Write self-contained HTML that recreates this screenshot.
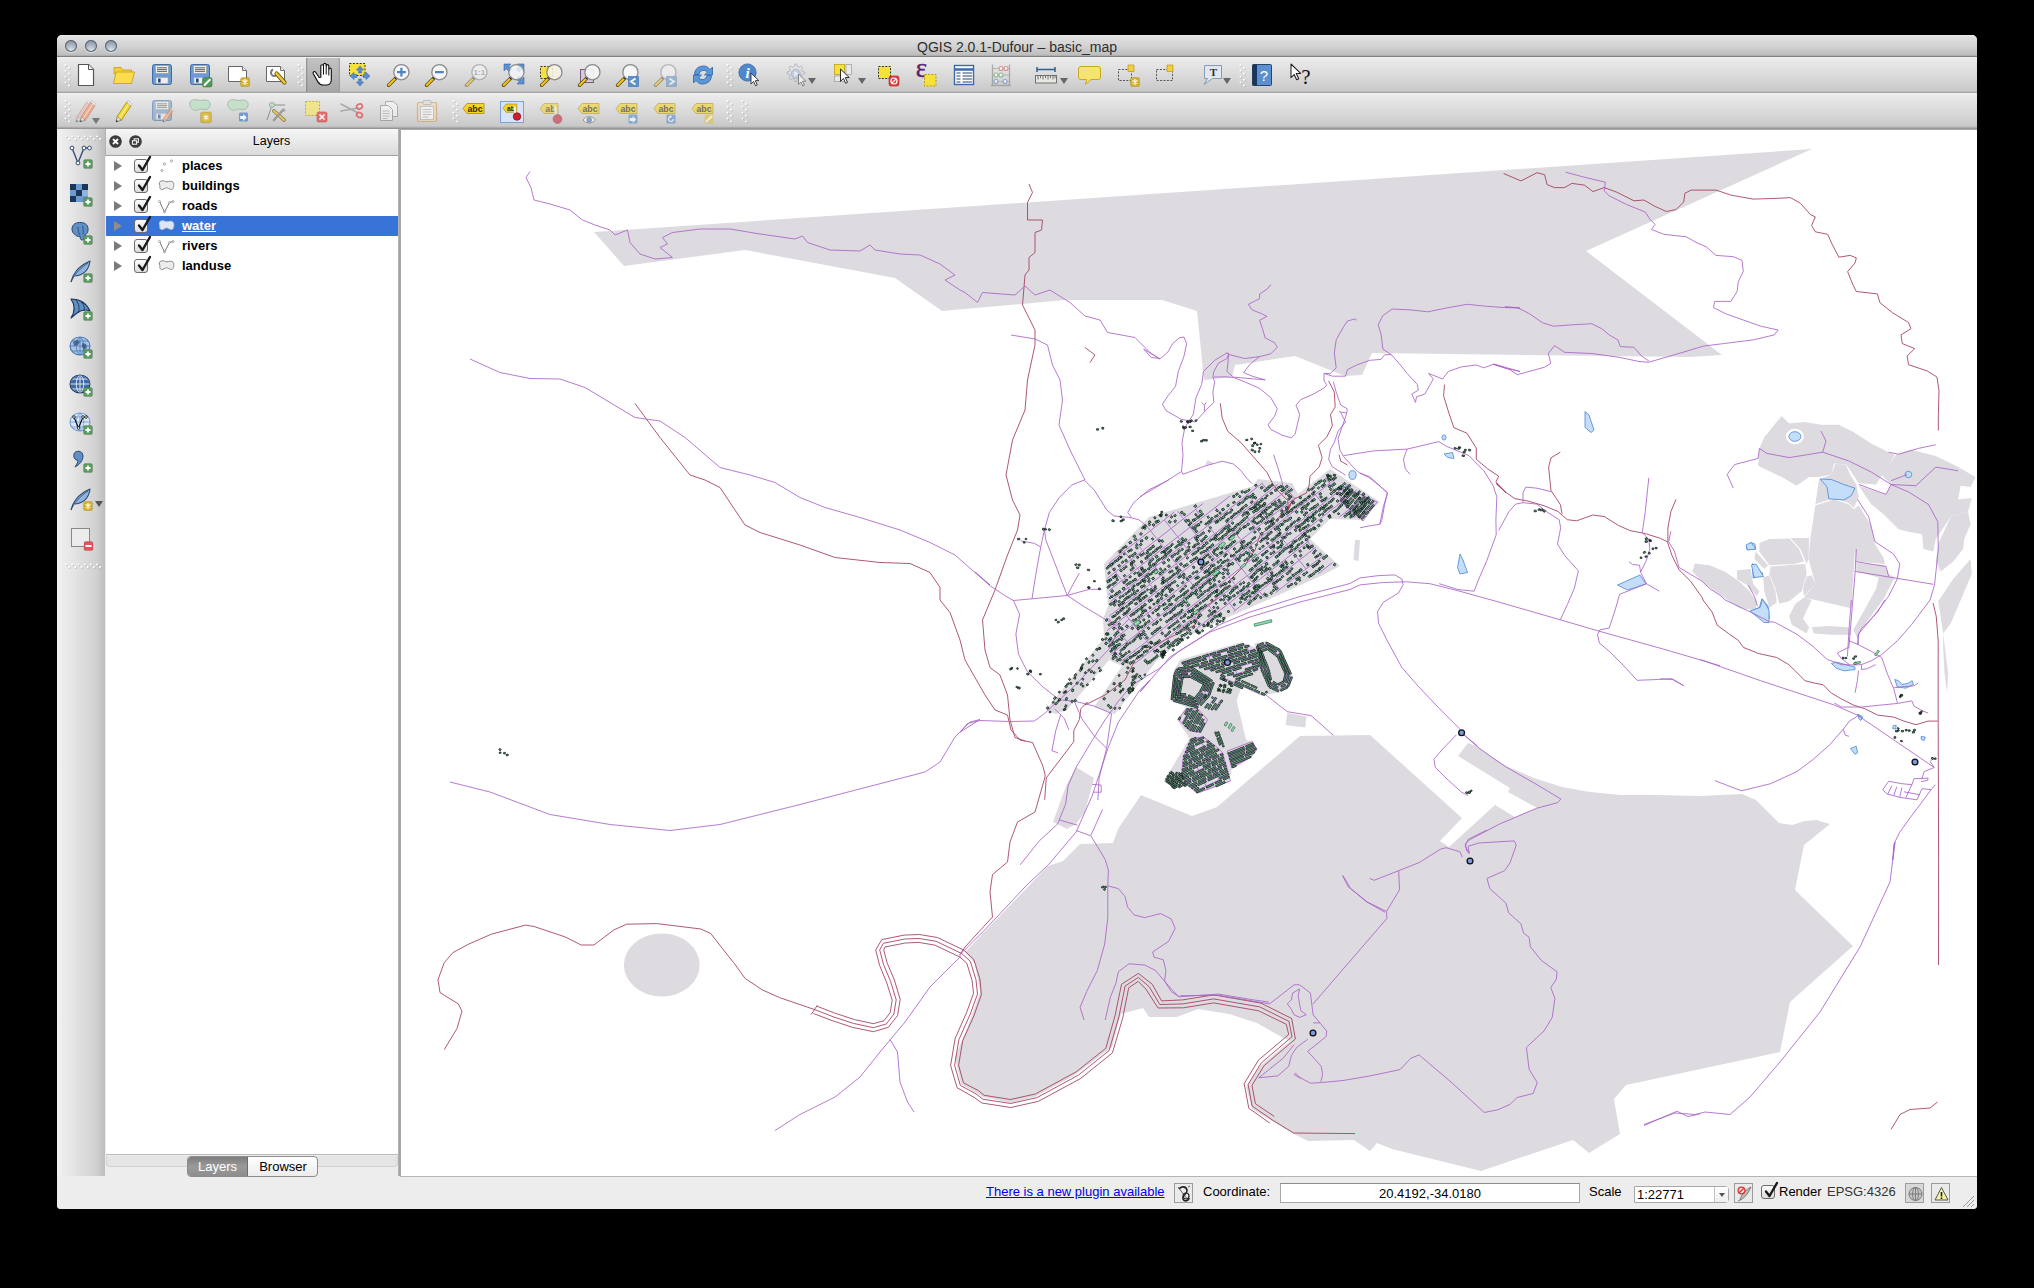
<!DOCTYPE html>
<html>
<head>
<meta charset="utf-8">
<title>QGIS 2.0.1-Dufour - basic_map</title>
<style>
*{box-sizing:border-box;margin:0;padding:0}
html,body{width:2034px;height:1288px;background:#000;overflow:hidden}
body{font-family:"Liberation Sans",sans-serif;position:relative;color:#000}
#win{position:absolute;left:57px;top:35px;width:1920px;height:1174px;background:#ededed;border-radius:5px 5px 4px 4px;overflow:hidden}
#title{position:absolute;left:0;top:0;width:1920px;height:22px;background:linear-gradient(#ebebeb 0,#e0e0e0 8%,#d2d2d2 50%,#bdbdbd 92%,#8f8f8f 96%,#6e6e6e 100%);text-align:center;font-size:14px;line-height:22px;color:#2e2e2e}
#title span{position:absolute;left:0;width:1920px;top:.5px}
.tl{position:absolute;top:5px;width:12px;height:12px;border-radius:50%;background:radial-gradient(circle at 50% 85%,#dfe6ec 0,#b4c0cb 35%,#8f9ba8 70%,#76828e 100%);box-shadow:inset 0 0 0 1px #5d6671,0 1px 0 rgba(255,255,255,.55)}
.tb{position:absolute;left:0;width:1920px;height:36px;background:linear-gradient(#f0f0f0 0,#e9e9e9 10%,#d9d9d9 55%,#c9c9c9 94%,#9a9a9a 100%)}
#tb1{top:22px}
#tb2{top:58px;height:36px;background:linear-gradient(#f0f0f0 0,#e9e9e9 10%,#d9d9d9 55%,#c9c9c9 92%,#8c8c8c 100%)}
.ic{position:absolute;width:24px;height:24px;overflow:visible}
.grip{position:absolute;width:7px;height:24px}
#side{position:absolute;left:0;top:94px;width:48px;height:1047px;background:linear-gradient(90deg,#f1f1f1 0,#e4e4e4 35%,#d2d2d2 80%,#bdbdbd 100%)}
#lhead{position:absolute;left:48px;top:94px;width:294px;height:27px;background:linear-gradient(#f6f6f6,#e6e6e6 60%,#dadada);border-bottom:1px solid #a3a3a3;border-left:1px solid #b5b5b5;font-size:12.5px;text-align:center;line-height:25px;padding-left:38px}
#lbody{position:absolute;left:49px;top:121px;width:293px;height:999px;background:#fff;border-bottom:1px solid #b9b9b9}
#lsplit{position:absolute;left:341px;top:94px;width:2px;height:1047px;background:linear-gradient(90deg,#bdbdbd,#9a9a9a)}
.row{position:absolute;left:0;width:292px;height:20px;font-size:13px;font-weight:bold;line-height:20px}
.row .nm{position:absolute;left:76px;top:0}
.row.sel{background:#3874d7;color:#fff}
.row.sel .nm{text-decoration:underline}
.tri{position:absolute;left:8px;top:5px;width:0;height:0;border-left:8px solid #7a7a7a;border-top:5px solid transparent;border-bottom:5px solid transparent}
.cb{position:absolute;left:28px;top:3px;width:14px;height:14px;border:1px solid #6d6d6d;border-radius:3px;background:linear-gradient(#fdfdfd,#dcdcdc)}
.cb svg{position:absolute;left:-1px;top:-6px;width:20px;height:20px}
#ltabline{position:absolute;left:49px;top:1121px;width:292px;height:11px;background:#e5e5e5;border:1px solid #d2d2d2;border-top:none;border-radius:0 0 4px 4px}
#tabs{position:absolute;left:130px;top:1121px;height:21px;width:131px;border:1px solid #8e8e8e;border-radius:4px;background:linear-gradient(#fff,#ececec);font-size:13px;line-height:19px;overflow:hidden}
#tabs .a{position:absolute;left:0;top:0;width:60px;height:19px;background:linear-gradient(#7d7d7d,#9a9a9a 50%,#8d8d8d);color:#fff;text-align:center;border-right:1px solid #6f6f6f}
#tabs .b{position:absolute;left:60px;top:0;width:70px;height:19px;text-align:center}
#map{position:absolute;left:343px;top:94px;width:1577px;height:1048px;background:#fff;border-top:1px solid #a8a8a8;border-left:1px solid #a8a8a8;border-bottom:1px solid #b4b4b4;overflow:hidden}
#status{position:absolute;left:0;top:1142px;width:1920px;height:32px;background:#ededed;font-size:13px}
#status .t{position:absolute;top:7px;line-height:16px;white-space:nowrap}
.sbtn{position:absolute;top:9px;width:19px;height:19px;border:1px solid #9c9c9c;background:#eaeaea}
</style>
</head>
<body>
<div id="win">
<div id="title"><span>QGIS 2.0.1-Dufour – basic_map</span>
<div class="tl" style="left:8px"></div><div class="tl" style="left:28px"></div><div class="tl" style="left:48px"></div>
</div>
<div class="tb" id="tb1"><div style="position:absolute;left:249px;top:1px;width:34px;height:34px;background:linear-gradient(90deg,#8c8c8c 0,#a8a8a8 6%,#b4b4b4 50%,#a9a9a9 94%,#8f8f8f 100%),linear-gradient(#b9b9b9,#9b9b9b);background-blend-mode:multiply;opacity:.95"></div><div style="position:absolute;left:249px;top:1px;width:34px;height:34px;background:linear-gradient(#c2c2c2,#a6a6a6)"></div><div style="position:absolute;left:249px;top:1px;width:2px;height:34px;background:linear-gradient(90deg,#888,#aaa0)"></div><div style="position:absolute;left:281px;top:1px;width:2px;height:34px;background:linear-gradient(270deg,#999,#aaa0)"></div><svg class="ic" style="left:17px;top:6px" viewBox="0 0 24 24"><path d="M4.5,1.5h10l5,5v16h-15z" fill="#fff" stroke="#555" stroke-width="1.2" stroke-linejoin="round"/><path d="M14.5,1.5v5h5" fill="#eee" stroke="#555" stroke-width="1"/></svg><svg class="ic" style="left:55px;top:6px" viewBox="0 0 24 24"><path d="M2,4.5h7l1.5,2.5h9v4h-17.5z" fill="#f4cf3a" stroke="#c9a21e" stroke-width=".9"/><path d="M1.5,20.5l2.6,-11.5h18.4l-3,11.5z" fill="#fbdc4e" stroke="#c9a21e" stroke-width=".9" stroke-linejoin="round"/></svg><svg class="ic" style="left:93px;top:6px" viewBox="0 0 24 24"><rect x="2.5" y="1.5" width="19" height="20" rx="2" fill="#6c9bd2" stroke="#3f6aa6"/><rect x="5.5" y="2.5" width="13" height="8" fill="#eee" stroke="#9aa"/><path d="M7,4.8h10M7,6.6h10M7,8.4h10" stroke="#555" stroke-width=".9"/><rect x="6" y="14.5" width="12" height="6" fill="#eee" stroke="#9aa" stroke-width=".6"/><rect x="8" y="15.5" width="2.6" height="4" fill="#2a4a7a"/></svg><svg class="ic" style="left:131px;top:6px" viewBox="0 0 24 24"><rect x="2.5" y="1.5" width="19" height="20" rx="2" fill="#6c9bd2" stroke="#3f6aa6"/><rect x="5.5" y="2.5" width="13" height="8" fill="#eee" stroke="#9aa"/><path d="M7,4.8h10M7,6.6h10M7,8.4h10" stroke="#555" stroke-width=".9"/><rect x="6" y="14.5" width="12" height="6" fill="#eee" stroke="#9aa" stroke-width=".6"/><rect x="8" y="15.5" width="2.6" height="4" fill="#2a4a7a"/><rect x="14.5" y="14.5" width="9.5" height="9.5" rx="1.8" fill="#4e9a52" stroke="#3c7a40" stroke-width=".6"/><path d="M16.6,22l5.2,-5.2" stroke="#fff" stroke-width="2" stroke-linecap="round"/></svg><svg class="ic" style="left:169px;top:6px" viewBox="0 0 24 24"><path d="M2.5,3.5h14l4,4v11h-18z" fill="#fff" stroke="#666" stroke-width="1" stroke-linejoin="round"/><path d="M16.5,3.5v4h4" fill="#eee" stroke="#666" stroke-width=".9"/><rect x="14.5" y="14.5" width="9" height="9" rx="1.6" fill="#d8b226" stroke="#00000033" stroke-width=".6"/><path d="M19.0,16.0v6M16.5,17.5l5,3M16.5,20.5l5,-3" stroke="#fff" stroke-width="1.1"/></svg><svg class="ic" style="left:207px;top:6px" viewBox="0 0 24 24"><path d="M2.5,3.5h14l4,4v11h-18z" fill="#fff" stroke="#666" stroke-width="1" stroke-linejoin="round"/><path d="M16.5,3.5v4h4" fill="#eee" stroke="#666" stroke-width=".9"/><path d="M9,6.5a3.4,3.4 0 1 0 4.6,4.2" fill="none" stroke="#777" stroke-width="2"/><path d="M12.5,10.5l8,9" stroke="#6b5a1a" stroke-width="4.2" stroke-linecap="round"/><path d="M12.5,10.5l8,9" stroke="#f0c832" stroke-width="2.6" stroke-linecap="round"/></svg><svg class="ic" style="left:253px;top:6px" viewBox="0 0 24 24"><path d="M9.2,14.5L5.6,9.2c-1.1,-1.5 -3.2,-0.2 -2.3,1.5l4.6,8.2c1.2,2 2.8,3.1 5.2,3.1h3.2c3,0 5,-2.2 5,-5v-10.5c0,-1.8 -2.5,-1.8 -2.5,0v-3.6c0,-1.8 -2.6,-1.8 -2.6,0v-1.2c0,-1.8 -2.7,-1.8 -2.7,0v1.4c0,-1.8 -2.7,-1.8 -2.7,0v11.1z" fill="#fff" stroke="#111" stroke-width="1.15" stroke-linejoin="round"/><path d="M13.5,3.1v8.5M16.2,2.9v8.5M18.8,6.5v6" stroke="#111" stroke-width="1" fill="none"/></svg><svg class="ic" style="left:291px;top:6px" viewBox="0 0 24 24"><rect x="1.5" y="0.5" width="15.5" height="12" fill="#f6e13c" stroke="#333" stroke-width="1" stroke-dasharray="2 1.4"/><path d="M12,3l3.6,4h-2.2v3h-2.8v-3h-2.200000000000001z" fill="#5b8fcf" stroke="#3a6aa8" stroke-width=".6"/><path d="M12,23l3.6,-4h-2.2v-3h-2.8v3h-2.200000000000001z" fill="#5b8fcf" stroke="#3a6aa8" stroke-width=".6"/><path d="M2,13l4,-3.6v2.2h3v2.8h-3v2.2z" fill="#5b8fcf" stroke="#3a6aa8" stroke-width=".6"/><path d="M22,13l-4,-3.6v2.2h-3v2.8h3v2.2z" fill="#5b8fcf" stroke="#3a6aa8" stroke-width=".6"/></svg><svg class="ic" style="left:329px;top:6px" viewBox="0 0 24 24"><g opacity="1"><line x1="9.4" y1="15.4" x2="2.6" y2="22.2" stroke="#5a4a12" stroke-width="3.6" stroke-linecap="round"/><line x1="8.8" y1="16" x2="2.8" y2="22" stroke="#f2c21c" stroke-width="2.2" stroke-linecap="round"/><circle cx="10" cy="14.8" r="1.5" fill="#222"/><circle cx="15.4" cy="9.2" r="7.6" fill="#f4f6f8" stroke="#8a8a8a" stroke-width="1.3"/><path d="M11,9.2h8.8M15.4,4.8v8.8" stroke="#4f84c4" stroke-width="2.2"/></g></svg><svg class="ic" style="left:367px;top:6px" viewBox="0 0 24 24"><g opacity="1"><line x1="9.4" y1="15.4" x2="2.6" y2="22.2" stroke="#5a4a12" stroke-width="3.6" stroke-linecap="round"/><line x1="8.8" y1="16" x2="2.8" y2="22" stroke="#f2c21c" stroke-width="2.2" stroke-linecap="round"/><circle cx="10" cy="14.8" r="1.5" fill="#222"/><circle cx="15.4" cy="9.2" r="7.6" fill="#f4f6f8" stroke="#8a8a8a" stroke-width="1.3"/><path d="M11,9.2h8.8" stroke="#4f84c4" stroke-width="2.2"/></g></svg><svg class="ic" style="left:407px;top:6px" viewBox="0 0 24 24"><g opacity="0.55"><line x1="9.4" y1="15.4" x2="2.6" y2="22.2" stroke="#5a4a12" stroke-width="3.6" stroke-linecap="round"/><line x1="8.8" y1="16" x2="2.8" y2="22" stroke="#f2c21c" stroke-width="2.2" stroke-linecap="round"/><circle cx="10" cy="14.8" r="1.5" fill="#222"/><circle cx="15.4" cy="9.2" r="7.6" fill="#f4f6f8" stroke="#8a8a8a" stroke-width="1.3"/><text x="15.4" y="12.2" font-family="Liberation Sans,sans-serif" font-weight="bold" font-size="8" text-anchor="middle" fill="#888">1:1</text></g></svg><svg class="ic" style="left:444px;top:6px" viewBox="0 0 24 24"><path d="M3,1h7l-2.2,2.2l3,3l-2.6,2.6l-3,-3l-2.2,2.2z" fill="#5b8fcf" stroke="#3a6aa8" stroke-width=".6"/><path d="M23,1h-7l2.2,2.2l-3,3l2.6,2.6l3,-3l2.2,2.2z" fill="#5b8fcf" stroke="#3a6aa8" stroke-width=".6"/><path d="M23,21h-7l2.2,-2.2l-3,-3l2.6,-2.6l3,3l2.2,-2.2z" fill="#5b8fcf" stroke="#3a6aa8" stroke-width=".6"/><g opacity="1"><line x1="9.4" y1="15.4" x2="2.6" y2="22.2" stroke="#5a4a12" stroke-width="3.6" stroke-linecap="round"/><line x1="8.8" y1="16" x2="2.8" y2="22" stroke="#f2c21c" stroke-width="2.2" stroke-linecap="round"/><circle cx="10" cy="14.8" r="1.5" fill="#222"/><circle cx="15.4" cy="9.2" r="7.6" fill="#f4f6f8cc" stroke="#8a8a8a" stroke-width="1.3"/></g></svg><svg class="ic" style="left:482px;top:6px" viewBox="0 0 24 24"><rect x="1.5" y="3.5" width="12" height="12" fill="#f6e13c" stroke="#333" stroke-width="1" stroke-dasharray="2 1.4"/><g opacity="1"><line x1="9.4" y1="15.4" x2="2.6" y2="22.2" stroke="#5a4a12" stroke-width="3.6" stroke-linecap="round"/><line x1="8.8" y1="16" x2="2.8" y2="22" stroke="#f2c21c" stroke-width="2.2" stroke-linecap="round"/><circle cx="10" cy="14.8" r="1.5" fill="#222"/><circle cx="15.4" cy="9.2" r="7.6" fill="#f6f3e2e0" stroke="#8a8a8a" stroke-width="1.3"/></g></svg><svg class="ic" style="left:520px;top:6px" viewBox="0 0 24 24"><rect x="3.5" y="6.5" width="13" height="13" fill="#d9c9dc" stroke="#7a5a80" stroke-width="1"/><g opacity="1"><line x1="9.4" y1="15.4" x2="2.6" y2="22.2" stroke="#5a4a12" stroke-width="3.6" stroke-linecap="round"/><line x1="8.8" y1="16" x2="2.8" y2="22" stroke="#f2c21c" stroke-width="2.2" stroke-linecap="round"/><circle cx="10" cy="14.8" r="1.5" fill="#222"/><circle cx="15.4" cy="9.2" r="7.6" fill="#f4f6f8e6" stroke="#8a8a8a" stroke-width="1.3"/></g></svg><svg class="ic" style="left:558px;top:6px" viewBox="0 0 24 24"><g opacity="1"><line x1="9.4" y1="15.4" x2="2.6" y2="22.2" stroke="#5a4a12" stroke-width="3.6" stroke-linecap="round"/><line x1="8.8" y1="16" x2="2.8" y2="22" stroke="#f2c21c" stroke-width="2.2" stroke-linecap="round"/><circle cx="10" cy="14.8" r="1.5" fill="#222"/><circle cx="15.4" cy="9.2" r="7.6" fill="#f4f6f8" stroke="#8a8a8a" stroke-width="1.3"/></g><rect x="13.5" y="13.5" width="10" height="10" fill="#5b8fcf" stroke="#3a6aa8" stroke-width=".6"/><path d="M20.5,15.5l-4.5,3l4.5,3" fill="none" stroke="#fff" stroke-width="1.8"/></svg><svg class="ic" style="left:596px;top:6px" viewBox="0 0 24 24"><g opacity=".5"><g opacity="1"><line x1="9.4" y1="15.4" x2="2.6" y2="22.2" stroke="#5a4a12" stroke-width="3.6" stroke-linecap="round"/><line x1="8.8" y1="16" x2="2.8" y2="22" stroke="#f2c21c" stroke-width="2.2" stroke-linecap="round"/><circle cx="10" cy="14.8" r="1.5" fill="#222"/><circle cx="15.4" cy="9.2" r="7.6" fill="#f4f6f8" stroke="#8a8a8a" stroke-width="1.3"/></g><rect x="13.5" y="13.5" width="10" height="10" fill="#5b8fcf" stroke="#3a6aa8" stroke-width=".6"/><path d="M16.5,15.5l4.5,3l-4.5,3" fill="none" stroke="#fff" stroke-width="1.8"/></g></svg><svg class="ic" style="left:634px;top:6px" viewBox="0 0 24 24"><path d="M3.5,11.5a8.6,8.6 0 0 1 15.5,-5l2.5,-2.5v8h-8l2.8,-2.8a4.6,4.6 0 0 0 -8.3,2.3z" fill="#5b96d8" stroke="#2f64a8" stroke-width=".8" stroke-linejoin="round"/><path d="M20.5,12.5a8.6,8.6 0 0 1 -15.5,5l-2.5,2.5v-8h8l-2.8,2.800000000000001a4.6,4.6 0 0 0 8.3,-2.3z" fill="#5b96d8" stroke="#2f64a8" stroke-width=".8" stroke-linejoin="round"/></svg><svg class="ic" style="left:681px;top:6px" viewBox="0 0 24 24"><circle cx="9.5" cy="9.5" r="8.6" fill="#4f87cc" stroke="#2f64a8" stroke-width=".8"/><text x="9.5" y="14.5" font-family="Liberation Serif,serif" font-style="italic" font-weight="bold" font-size="15" text-anchor="middle" fill="#fff">i</text><path transform="translate(13,10) scale(0.85)" d="M0,0v13l3,-3l2.4,5l2,-1l-2.4,-5h4.2z" fill="#fff" stroke="#222" stroke-width="1" stroke-linejoin="round"/></svg><svg class="ic" style="left:728px;top:6px" viewBox="0 0 24 24"><g opacity=".55"><path d="M10,1l1.6,0l.7,2.4l1.9,.8l2.2,-1.2l1.2,1.2l-1.2,2.2l.8,1.9l2.400000000000001,.7v1.6l-2.400000000000001,.7l-.8,1.9l1.2,2.2l-1.2,1.2l-2.2,-1.2l-1.9,.8l-.7,2.400000000000001h-1.6l-.7,-2.400000000000001l-1.9,-.8l-2.2,1.2l-1.2,-1.2l1.2,-2.2l-.8,-1.9l-2.4,-.7v-1.6l2.4,-.7l.8,-1.9l-1.2,-2.2l1.2,-1.2l2.2,1.2l1.9,-.8z" fill="#e4e4e4" stroke="#888" stroke-width=".8"/><circle cx="10.8" cy="10.8" r="4.6" fill="#a9c3e6" stroke="#6a8cbc" stroke-width=".8"/><path d="M9.3,8.2l4.2,2.6l-4.2,2.6z" fill="#fff"/><path transform="translate(13.5,11) scale(0.8)" d="M0,0v13l3,-3l2.4,5l2,-1l-2.4,-5h4.2z" fill="#fff" stroke="#222" stroke-width="1" stroke-linejoin="round"/></g></svg><svg class="ic" style="left:776px;top:6px" viewBox="0 0 24 24"><rect x="1.5" y="1.5" width="10" height="10" fill="#f6e13c" stroke="#b9a21a" stroke-width=".8"/><rect x="13" y="1.5" width="5.5" height="10" fill="#e9e9e9" stroke="#999" stroke-width=".7"/><rect x="1.5" y="13" width="10" height="5.5" fill="#e9e9e9" stroke="#999" stroke-width=".7"/><path transform="translate(7.5,6) scale(0.95)" d="M0,0v13l3,-3l2.4,5l2,-1l-2.4,-5h4.2z" fill="#fff" stroke="#222" stroke-width="1" stroke-linejoin="round"/></svg><svg class="ic" style="left:819px;top:6px" viewBox="0 0 24 24"><rect x="2.5" y="3.5" width="12" height="12" fill="#f6e13c" stroke="#333" stroke-width="1" stroke-dasharray="2 1.4"/><rect x="13" y="13" width="10" height="10" rx="2" fill="#e23c3c" stroke="#a82222" stroke-width=".6"/><circle cx="18" cy="18" r="3" fill="none" stroke="#fff" stroke-width="1.2"/><path d="M15.9,20.1l4.2,-4.2" stroke="#fff" stroke-width="1.2"/></svg><svg class="ic" style="left:857px;top:6px" viewBox="0 0 24 24"><text x="7.5" y="13.5" font-family="Liberation Serif,serif" font-size="27" text-anchor="middle" fill="#5e2572" stroke="#5e2572" stroke-width=".4">ε</text><rect x="10.5" y="11.5" width="11.5" height="11.5" fill="#f6e13c" stroke="#b99a10" stroke-width="1" stroke-dasharray="2 1.4"/></svg><svg class="ic" style="left:895px;top:6px" viewBox="0 0 24 24"><rect x="2.5" y="2.5" width="19" height="19" fill="#fff" stroke="#3a6aa8" stroke-width="1.4"/><path d="M3,6.5h18" stroke="#3a6aa8" stroke-width="2.4"/><path d="M4.5,10h4M10.5,10h9.5M4.5,13h4M10.5,13h9.5M4.5,16h4M10.5,16h9.5M4.5,19h4M10.5,19h9.5" stroke="#27466e" stroke-width="1"/></svg><svg class="ic" style="left:932px;top:6px" viewBox="0 0 24 24"><g opacity=".6"><path d="M3.5,1.5v21M20.5,1.5v21M2,22.5h20" stroke="#888" stroke-width="1.3" fill="none"/><path d="M3.5,5.5h17M3.5,12h17M3.5,18.5h17" stroke="#888" stroke-width=".8"/><circle cx="12" cy="5.5" r="2" fill="#fff" stroke="#d45a5a" stroke-width="1.1"/><circle cx="17" cy="5.5" r="2" fill="#fff" stroke="#d45a5a" stroke-width="1.1"/><circle cx="7" cy="12" r="2" fill="#fff" stroke="#5aa66a" stroke-width="1.1"/><circle cx="12" cy="12" r="2" fill="#fff" stroke="#5aa66a" stroke-width="1.1"/><circle cx="7" cy="18.5" r="2" fill="#fff" stroke="#5a8ac4" stroke-width="1.1"/><circle cx="16" cy="18.5" r="2" fill="#fff" stroke="#5a8ac4" stroke-width="1.1"/></g></svg><svg class="ic" style="left:977px;top:6px" viewBox="0 0 24 24"><path d="M3,6.5h18M3,4v5M21,4v5" stroke="#2f5f8f" stroke-width="1.5" fill="none"/><rect x="1.5" y="12.5" width="21" height="7.5" fill="#e8e8e2" stroke="#666" stroke-width=".9"/><path d="M4,13v3.5M6.5,13v2.2M9,13v3.5M11.5,13v2.2M14,13v3.5M16.5,13v2.2M19,13v3.5M21,13v2.2" stroke="#555" stroke-width=".8"/></svg><svg class="ic" style="left:1021px;top:6px" viewBox="0 0 24 24"><path d="M3.5,3.5h17a2.5,2.5 0 0 1 2.5,2.5v8a2.5,2.5 0 0 1 -2.5,2.5h-7l-5.5,5l1.2,-5h-5.7a2.5,2.5 0 0 1 -2.5,-2.5v-8a2.5,2.5 0 0 1 2.5,-2.5z" transform="translate(-0.5,0)" fill="#f6e472" stroke="#c8a81e" stroke-width="1"/></svg><svg class="ic" style="left:1059px;top:6px" viewBox="0 0 24 24"><rect x="2.5" y="6.5" width="13" height="11" fill="none" stroke="#555" stroke-width="1" stroke-dasharray="2 1.4"/><path d="M12,2h6v6.5h-6z" fill="#f3cf3a" stroke="#b8961a" stroke-width=".7"/><rect x="14.5" y="14.5" width="9" height="9" rx="1.6" fill="#d8b226" stroke="#00000033" stroke-width=".6"/><path d="M19.0,16.0v6M16.5,17.5l5,3M16.5,20.5l5,-3" stroke="#fff" stroke-width="1.1"/></svg><svg class="ic" style="left:1097px;top:6px" viewBox="0 0 24 24"><rect x="2.5" y="6.5" width="16" height="11" fill="none" stroke="#555" stroke-width="1" stroke-dasharray="2 1.4"/><path d="M13,2h6v6.5h-6z" fill="#f3cf3a" stroke="#b8961a" stroke-width=".7"/></svg><svg class="ic" style="left:1144px;top:6px" viewBox="0 0 24 24"><path d="M3.5,2.5h17v13h-9l-8.5,6l3.5,-6h-3z" fill="#dfe7f2" stroke="#8a9ab0" stroke-width="1" stroke-linejoin="round"/><text x="12.5" y="13" font-family="Liberation Serif,serif" font-weight="bold" font-size="11" text-anchor="middle" fill="#333">T</text></svg><svg class="ic" style="left:1193px;top:6px" viewBox="0 0 24 24"><rect x="2.5" y="1.5" width="19" height="21" rx="1" fill="#5b8fcf" stroke="#27466e" stroke-width="1"/><rect x="2.5" y="1.5" width="4.5" height="21" fill="#1d3557"/><text x="14" y="17.5" font-family="Liberation Sans,sans-serif" font-size="15" text-anchor="middle" fill="#fff">?</text></svg><svg class="ic" style="left:1232px;top:6px" viewBox="0 0 24 24"><path transform="translate(2,1) scale(1.05)" d="M0,0v13l3,-3l2.4,5l2,-1l-2.4,-5h4.2z" fill="#fff" stroke="#222" stroke-width="1" stroke-linejoin="round"/><text x="17" y="21" font-family="Liberation Serif,serif" font-size="21" text-anchor="middle" fill="#111">?</text></svg><svg class="grip" style="left:6.8px;top:6px" viewBox="0 0 7 24"><circle cx="2.20" cy="2.70" r="1.05" fill="#9a9a9a" opacity=".55"/><circle cx="1.50" cy="2.00" r="1" fill="#fff"/><circle cx="5.70" cy="5.63" r="1.05" fill="#9a9a9a" opacity=".55"/><circle cx="5.00" cy="4.93" r="1" fill="#fff"/><circle cx="2.20" cy="8.56" r="1.05" fill="#9a9a9a" opacity=".55"/><circle cx="1.50" cy="7.86" r="1" fill="#fff"/><circle cx="5.70" cy="11.49" r="1.05" fill="#9a9a9a" opacity=".55"/><circle cx="5.00" cy="10.79" r="1" fill="#fff"/><circle cx="2.20" cy="14.42" r="1.05" fill="#9a9a9a" opacity=".55"/><circle cx="1.50" cy="13.72" r="1" fill="#fff"/><circle cx="5.70" cy="17.35" r="1.05" fill="#9a9a9a" opacity=".55"/><circle cx="5.00" cy="16.65" r="1" fill="#fff"/><circle cx="2.20" cy="20.28" r="1.05" fill="#9a9a9a" opacity=".55"/><circle cx="1.50" cy="19.58" r="1" fill="#fff"/><circle cx="5.70" cy="23.21" r="1.05" fill="#9a9a9a" opacity=".55"/><circle cx="5.00" cy="22.51" r="1" fill="#fff"/></svg><svg class="grip" style="left:239.8px;top:6px" viewBox="0 0 7 24"><circle cx="2.20" cy="2.70" r="1.05" fill="#9a9a9a" opacity=".55"/><circle cx="1.50" cy="2.00" r="1" fill="#fff"/><circle cx="5.70" cy="5.63" r="1.05" fill="#9a9a9a" opacity=".55"/><circle cx="5.00" cy="4.93" r="1" fill="#fff"/><circle cx="2.20" cy="8.56" r="1.05" fill="#9a9a9a" opacity=".55"/><circle cx="1.50" cy="7.86" r="1" fill="#fff"/><circle cx="5.70" cy="11.49" r="1.05" fill="#9a9a9a" opacity=".55"/><circle cx="5.00" cy="10.79" r="1" fill="#fff"/><circle cx="2.20" cy="14.42" r="1.05" fill="#9a9a9a" opacity=".55"/><circle cx="1.50" cy="13.72" r="1" fill="#fff"/><circle cx="5.70" cy="17.35" r="1.05" fill="#9a9a9a" opacity=".55"/><circle cx="5.00" cy="16.65" r="1" fill="#fff"/><circle cx="2.20" cy="20.28" r="1.05" fill="#9a9a9a" opacity=".55"/><circle cx="1.50" cy="19.58" r="1" fill="#fff"/><circle cx="5.70" cy="23.21" r="1.05" fill="#9a9a9a" opacity=".55"/><circle cx="5.00" cy="22.51" r="1" fill="#fff"/></svg><svg class="grip" style="left:668.8px;top:6px" viewBox="0 0 7 24"><circle cx="2.20" cy="2.70" r="1.05" fill="#9a9a9a" opacity=".55"/><circle cx="1.50" cy="2.00" r="1" fill="#fff"/><circle cx="5.70" cy="5.63" r="1.05" fill="#9a9a9a" opacity=".55"/><circle cx="5.00" cy="4.93" r="1" fill="#fff"/><circle cx="2.20" cy="8.56" r="1.05" fill="#9a9a9a" opacity=".55"/><circle cx="1.50" cy="7.86" r="1" fill="#fff"/><circle cx="5.70" cy="11.49" r="1.05" fill="#9a9a9a" opacity=".55"/><circle cx="5.00" cy="10.79" r="1" fill="#fff"/><circle cx="2.20" cy="14.42" r="1.05" fill="#9a9a9a" opacity=".55"/><circle cx="1.50" cy="13.72" r="1" fill="#fff"/><circle cx="5.70" cy="17.35" r="1.05" fill="#9a9a9a" opacity=".55"/><circle cx="5.00" cy="16.65" r="1" fill="#fff"/><circle cx="2.20" cy="20.28" r="1.05" fill="#9a9a9a" opacity=".55"/><circle cx="1.50" cy="19.58" r="1" fill="#fff"/><circle cx="5.70" cy="23.21" r="1.05" fill="#9a9a9a" opacity=".55"/><circle cx="5.00" cy="22.51" r="1" fill="#fff"/></svg><svg class="grip" style="left:1181.8px;top:6px" viewBox="0 0 7 24"><circle cx="2.20" cy="2.70" r="1.05" fill="#9a9a9a" opacity=".55"/><circle cx="1.50" cy="2.00" r="1" fill="#fff"/><circle cx="5.70" cy="5.63" r="1.05" fill="#9a9a9a" opacity=".55"/><circle cx="5.00" cy="4.93" r="1" fill="#fff"/><circle cx="2.20" cy="8.56" r="1.05" fill="#9a9a9a" opacity=".55"/><circle cx="1.50" cy="7.86" r="1" fill="#fff"/><circle cx="5.70" cy="11.49" r="1.05" fill="#9a9a9a" opacity=".55"/><circle cx="5.00" cy="10.79" r="1" fill="#fff"/><circle cx="2.20" cy="14.42" r="1.05" fill="#9a9a9a" opacity=".55"/><circle cx="1.50" cy="13.72" r="1" fill="#fff"/><circle cx="5.70" cy="17.35" r="1.05" fill="#9a9a9a" opacity=".55"/><circle cx="5.00" cy="16.65" r="1" fill="#fff"/><circle cx="2.20" cy="20.28" r="1.05" fill="#9a9a9a" opacity=".55"/><circle cx="1.50" cy="19.58" r="1" fill="#fff"/><circle cx="5.70" cy="23.21" r="1.05" fill="#9a9a9a" opacity=".55"/><circle cx="5.00" cy="22.51" r="1" fill="#fff"/></svg><div style="position:absolute;left:751px;top:21px;width:0;height:0;border-left:4px solid transparent;border-right:4px solid transparent;border-top:6px solid #666"></div><div style="position:absolute;left:801px;top:21px;width:0;height:0;border-left:4px solid transparent;border-right:4px solid transparent;border-top:6px solid #666"></div><div style="position:absolute;left:1003px;top:21px;width:0;height:0;border-left:4px solid transparent;border-right:4px solid transparent;border-top:6px solid #666"></div><div style="position:absolute;left:1166px;top:21px;width:0;height:0;border-left:4px solid transparent;border-right:4px solid transparent;border-top:6px solid #666"></div></div>
<div class="tb" id="tb2"><svg class="ic" style="left:17px;top:6px" viewBox="0 0 24 24"><g opacity=".75"><g transform="translate(2,23) scale(1.12)" opacity="0.7"><path d="M0,0l1.2,-5.2l3.6,3.6z" fill="#ddd" stroke="#666" stroke-width=".6"/><path d="M0,0l.5,-2l1.4,1.4z" fill="#333"/><path d="M1.2,-5.2l8.4,-12.6l3.6,3.6l-8.4,12.6z" fill="#e8b0a0" stroke="#b8806e" stroke-width=".7"/><path d="M3,-3.4l8.4,-12.6" stroke="#fff" stroke-opacity=".6" stroke-width=".9"/><path d="M9.6,-17.8l1.1,-1.6l3.6,3.6l-1.1,1.6z" fill="#f3f3f3" stroke="#999" stroke-width=".5"/></g><g transform="translate(6,23) scale(1.12)" opacity="1"><path d="M0,0l1.2,-5.2l3.6,3.6z" fill="#ddd" stroke="#666" stroke-width=".6"/><path d="M0,0l.5,-2l1.4,1.4z" fill="#333"/><path d="M1.2,-5.2l8.4,-12.6l3.6,3.6l-8.4,12.6z" fill="#f0a080" stroke="#c07050" stroke-width=".7"/><path d="M3,-3.4l8.4,-12.6" stroke="#fff" stroke-opacity=".6" stroke-width=".9"/><path d="M9.6,-17.8l1.1,-1.6l3.6,3.6l-1.1,1.6z" fill="#f3f3f3" stroke="#999" stroke-width=".5"/></g></g></svg><svg class="ic" style="left:55px;top:6px" viewBox="0 0 24 24"><g transform="translate(4,23) scale(1.12)" opacity="1"><path d="M0,0l1.2,-5.2l3.6,3.6z" fill="#ddd" stroke="#666" stroke-width=".6"/><path d="M0,0l.5,-2l1.4,1.4z" fill="#333"/><path d="M1.2,-5.2l8.4,-12.6l3.6,3.6l-8.4,12.6z" fill="#f2d92e" stroke="#9a8a12" stroke-width=".7"/><path d="M3,-3.4l8.4,-12.6" stroke="#fff" stroke-opacity=".6" stroke-width=".9"/><path d="M9.6,-17.8l1.1,-1.6l3.6,3.6l-1.1,1.6z" fill="#f3f3f3" stroke="#999" stroke-width=".5"/></g></svg><svg class="ic" style="left:93px;top:6px" viewBox="0 0 24 24"><g opacity=".55"><rect x="2.5" y="1.5" width="19" height="20" rx="2" fill="#6c9bd2" stroke="#3f6aa6"/><rect x="5.5" y="2.5" width="13" height="8" fill="#eee" stroke="#9aa"/><path d="M7,4.8h10M7,6.6h10M7,8.4h10" stroke="#555" stroke-width=".9"/><rect x="6" y="14.5" width="12" height="6" fill="#eee" stroke="#9aa" stroke-width=".6"/><rect x="8" y="15.5" width="2.6" height="4" fill="#2a4a7a"/></g><g transform="translate(13,23) scale(0.75)" opacity="0.75"><path d="M0,0l1.2,-5.2l3.6,3.6z" fill="#ddd" stroke="#666" stroke-width=".6"/><path d="M0,0l.5,-2l1.4,1.4z" fill="#333"/><path d="M1.2,-5.2l8.4,-12.6l3.6,3.6l-8.4,12.6z" fill="#f0a070" stroke="#b87050" stroke-width=".7"/><path d="M3,-3.4l8.4,-12.6" stroke="#fff" stroke-opacity=".6" stroke-width=".9"/><path d="M9.6,-17.8l1.1,-1.6l3.6,3.6l-1.1,1.6z" fill="#f3f3f3" stroke="#999" stroke-width=".5"/></g></svg><svg class="ic" style="left:131px;top:6px" viewBox="0 0 24 24"><g opacity=".8"><path d="M2.2,7.5c-2.2,-4.5 2,-8 7.5,-6.4c4.5,1.3 6.5,-1 10,0.4c3.6,1.6 3,6.8 -0.4,8.6c-3.4,1.6 -5.6,-1.2 -9,0.5c-3.4,1.7 -6.600000000000001,0.2 -8.1,-3.1z" fill="#bfe0c4" stroke="#9ab59e" stroke-width="1"/><rect x="12.5" y="13" width="11" height="11" rx="1.6" fill="#d8b226" stroke="#00000033" stroke-width=".6"/><path d="M18.0,15.5v6M15.5,17l5,3M15.5,20l5,-3" stroke="#fff" stroke-width="1.1"/></g></svg><svg class="ic" style="left:169px;top:6px" viewBox="0 0 24 24"><g opacity=".8"><path d="M2.2,7.5c-2.2,-4.5 2,-8 7.5,-6.4c4.5,1.3 6.5,-1 10,0.4c3.6,1.6 3,6.8 -0.4,8.6c-3.4,1.6 -5.6,-1.2 -9,0.5c-3.4,1.7 -6.600000000000001,0.2 -8.1,-3.1z" fill="#bfe0c4" stroke="#9ab59e" stroke-width="1"/><rect x="13" y="13.5" width="9" height="9" rx="1.2" fill="#5b8fcf"/><path d="M14.2,17.0h3v-2l3.5,3.5l-3.5,3.5v-2h-3z" fill="#fff"/></g></svg><svg class="ic" style="left:207px;top:6px" viewBox="0 0 24 24"><g opacity=".75"><path d="M3,21l5,-15h13" fill="none" stroke="#777" stroke-width="1"/><circle cx="8" cy="6" r="2.5" fill="#bfe0c4" stroke="#7a9a7e"/><path d="M10,12l10,9" stroke="#6b5a1a" stroke-width="3.6" stroke-linecap="round"/><path d="M10,12l10,9" stroke="#f0c832" stroke-width="2" stroke-linecap="round"/><path d="M19,11l-9,10" stroke="#888" stroke-width="2.6" stroke-linecap="round"/><path d="M20,9l2,3l-3,1z" fill="#999"/></g></svg><svg class="ic" style="left:247px;top:6px" viewBox="0 0 24 24"><g opacity=".8"><rect x="1.5" y="2.5" width="14" height="14" fill="#f3e47a" stroke="#b9a21a" stroke-width="1" stroke-dasharray="2 1.4"/><rect x="13" y="13" width="10" height="10" rx="1.5" fill="#e45a5a" stroke="#b83232" stroke-width=".6"/><path d="M15.5,15.5l5,5M20.5,15.5l-5,5" stroke="#fff" stroke-width="1.6"/></g></svg><svg class="ic" style="left:283px;top:6px" viewBox="0 0 24 24"><g opacity=".75"><path d="M1,5l17,9M1,12l17,-3" stroke="#999" stroke-width="1.6" stroke-linecap="round"/><ellipse cx="19.5" cy="7.5" rx="3" ry="2.4" fill="none" stroke="#d94a4a" stroke-width="1.6" transform="rotate(-25 19.5 7.5)"/><ellipse cx="19.5" cy="16" rx="3" ry="2.4" fill="none" stroke="#d94a4a" stroke-width="1.6" transform="rotate(30 19.5 16)"/></g></svg><svg class="ic" style="left:320px;top:6px" viewBox="0 0 24 24"><g opacity=".5"><path d="M8.5,2.5h8l4,4v11h-12z" fill="#fff" stroke="#777"/><path d="M3.5,6.5h8l4,4v11h-12z" fill="#fff" stroke="#777"/><path d="M5.5,12h7M5.5,14.5h7M5.5,17h7M5.5,19.5h5" stroke="#888" stroke-width=".8"/></g></svg><svg class="ic" style="left:358px;top:6px" viewBox="0 0 24 24"><g opacity=".6"><rect x="2.5" y="3.5" width="19" height="19" rx="1.5" fill="#f3d9b8" stroke="#c89a5a" stroke-width="1.2"/><rect x="8" y="1.5" width="8" height="4" rx="1" fill="#ddd" stroke="#999" stroke-width=".8"/><rect x="5.5" y="7.5" width="13" height="13" fill="#fff" stroke="#999" stroke-width=".7"/><path d="M7.5,10.5h9M7.5,13h9M7.5,15.500000000000002h9M7.5,18h6" stroke="#999" stroke-width=".8"/></g></svg><svg class="ic" style="left:405px;top:8px" viewBox="0 0 24 24"><g opacity="1"><path d="M1,7.5l4,-5h17v10h-17z" fill="#f5d327" stroke="#a48a12" stroke-width=".8" stroke-linejoin="round"/><text x="13.0" y="10.6" font-family="Liberation Sans,sans-serif" font-weight="bold" font-size="8.8" fill="#332a00" text-anchor="middle">abc</text></g></svg><svg class="ic" style="left:443px;top:8px" viewBox="0 0 24 24"><rect x="0.5" y="0.5" width="23" height="21" fill="#d7e4f5" stroke="#7fa3d8" stroke-width="1"/><g transform="translate(2,1) scale(.82)"><g opacity="1"><path d="M1,7.5l4,-5h13v10h-13z" fill="#f5d327" stroke="#a48a12" stroke-width=".8" stroke-linejoin="round"/><text x="11.0" y="10.6" font-family="Liberation Sans,sans-serif" font-weight="bold" font-size="8.5" fill="#332a00" text-anchor="middle">ab</text></g></g><path d="M14.5,6.5l1,7" stroke="#eee" stroke-width="2.2" stroke-linecap="round"/><circle cx="17" cy="15.5" r="3.8" fill="#c8202c" stroke="#8a101a" stroke-width=".7"/></svg><svg class="ic" style="left:482px;top:8px" viewBox="0 0 24 24"><g opacity=".55"><g opacity="1"><path d="M1,7.5l4,-5h14v10h-14z" fill="#f5d327" stroke="#a48a12" stroke-width=".8" stroke-linejoin="round"/><text x="11.5" y="10.6" font-family="Liberation Sans,sans-serif" font-weight="bold" font-size="8.8" fill="#332a00" text-anchor="middle">ab</text></g><path d="M16,6.5l1,8" stroke="#eee" stroke-width="2.4" stroke-linecap="round"/><circle cx="18.5" cy="18" r="4.4" fill="#c8202c" stroke="#8a101a" stroke-width=".7"/></g></svg><svg class="ic" style="left:520px;top:8px" viewBox="0 0 24 24"><g opacity=".6"><g opacity="1"><path d="M1,7.5l4,-5h17v10h-17z" fill="#f5d327" stroke="#a48a12" stroke-width=".8" stroke-linejoin="round"/><text x="13.0" y="10.6" font-family="Liberation Sans,sans-serif" font-weight="bold" font-size="8.8" fill="#332a00" text-anchor="middle">abc</text></g><path d="M6,19c3,-4.5 9,-4.5 12.5,0c-3.5,4 -9.5,4 -12.5,0z" fill="#fff" stroke="#666" stroke-width=".9"/><circle cx="12.2" cy="19" r="2.4" fill="#5b8fcf" stroke="#27466e" stroke-width=".6"/></g></svg><svg class="ic" style="left:558px;top:8px" viewBox="0 0 24 24"><g opacity=".6"><g opacity="1"><path d="M1,7.5l4,-5h17v10h-17z" fill="#f5d327" stroke="#a48a12" stroke-width=".8" stroke-linejoin="round"/><text x="13.0" y="10.6" font-family="Liberation Sans,sans-serif" font-weight="bold" font-size="8.8" fill="#332a00" text-anchor="middle">abc</text></g><rect x="13.5" y="13.5" width="9" height="9" rx="1.2" fill="#5b8fcf"/><path d="M14.7,17.0h3v-2l3.5,3.5l-3.5,3.5v-2h-3z" fill="#fff"/></g></svg><svg class="ic" style="left:596px;top:8px" viewBox="0 0 24 24"><g opacity=".6"><g opacity="1"><path d="M1,7.5l4,-5h17v10h-17z" fill="#f5d327" stroke="#a48a12" stroke-width=".8" stroke-linejoin="round"/><text x="13.0" y="10.6" font-family="Liberation Sans,sans-serif" font-weight="bold" font-size="8.8" fill="#332a00" text-anchor="middle">abc</text></g><rect x="13.5" y="13.5" width="9" height="9" rx="1.2" fill="#5b8fcf"/><path d="M20.3,18a2.4,2.4 0 1 1 -2.3,-2.4" fill="none" stroke="#fff" stroke-width="1.2"/><path d="M17.2,14.2l2,1.4l-2,1.4z" fill="#fff"/></g></svg><svg class="ic" style="left:634px;top:8px" viewBox="0 0 24 24"><g opacity=".6"><g opacity="1"><path d="M1,7.5l4,-5h17v10h-17z" fill="#f5d327" stroke="#a48a12" stroke-width=".8" stroke-linejoin="round"/><text x="13.0" y="10.6" font-family="Liberation Sans,sans-serif" font-weight="bold" font-size="8.8" fill="#332a00" text-anchor="middle">abc</text></g><rect x="13.5" y="13.5" width="9" height="9" rx="1.2" fill="#e3c43c"/><path d="M15.5,20.5l5,-5" stroke="#fff" stroke-width="1.8" stroke-linecap="round"/></g></svg><svg class="grip" style="left:6.8px;top:6px" viewBox="0 0 7 24"><circle cx="2.20" cy="2.70" r="1.05" fill="#9a9a9a" opacity=".55"/><circle cx="1.50" cy="2.00" r="1" fill="#fff"/><circle cx="5.70" cy="5.63" r="1.05" fill="#9a9a9a" opacity=".55"/><circle cx="5.00" cy="4.93" r="1" fill="#fff"/><circle cx="2.20" cy="8.56" r="1.05" fill="#9a9a9a" opacity=".55"/><circle cx="1.50" cy="7.86" r="1" fill="#fff"/><circle cx="5.70" cy="11.49" r="1.05" fill="#9a9a9a" opacity=".55"/><circle cx="5.00" cy="10.79" r="1" fill="#fff"/><circle cx="2.20" cy="14.42" r="1.05" fill="#9a9a9a" opacity=".55"/><circle cx="1.50" cy="13.72" r="1" fill="#fff"/><circle cx="5.70" cy="17.35" r="1.05" fill="#9a9a9a" opacity=".55"/><circle cx="5.00" cy="16.65" r="1" fill="#fff"/><circle cx="2.20" cy="20.28" r="1.05" fill="#9a9a9a" opacity=".55"/><circle cx="1.50" cy="19.58" r="1" fill="#fff"/><circle cx="5.70" cy="23.21" r="1.05" fill="#9a9a9a" opacity=".55"/><circle cx="5.00" cy="22.51" r="1" fill="#fff"/></svg><svg class="grip" style="left:394.8px;top:6px" viewBox="0 0 7 24"><circle cx="2.20" cy="2.70" r="1.05" fill="#9a9a9a" opacity=".55"/><circle cx="1.50" cy="2.00" r="1" fill="#fff"/><circle cx="5.70" cy="5.63" r="1.05" fill="#9a9a9a" opacity=".55"/><circle cx="5.00" cy="4.93" r="1" fill="#fff"/><circle cx="2.20" cy="8.56" r="1.05" fill="#9a9a9a" opacity=".55"/><circle cx="1.50" cy="7.86" r="1" fill="#fff"/><circle cx="5.70" cy="11.49" r="1.05" fill="#9a9a9a" opacity=".55"/><circle cx="5.00" cy="10.79" r="1" fill="#fff"/><circle cx="2.20" cy="14.42" r="1.05" fill="#9a9a9a" opacity=".55"/><circle cx="1.50" cy="13.72" r="1" fill="#fff"/><circle cx="5.70" cy="17.35" r="1.05" fill="#9a9a9a" opacity=".55"/><circle cx="5.00" cy="16.65" r="1" fill="#fff"/><circle cx="2.20" cy="20.28" r="1.05" fill="#9a9a9a" opacity=".55"/><circle cx="1.50" cy="19.58" r="1" fill="#fff"/><circle cx="5.70" cy="23.21" r="1.05" fill="#9a9a9a" opacity=".55"/><circle cx="5.00" cy="22.51" r="1" fill="#fff"/></svg><svg class="grip" style="left:668.8px;top:6px" viewBox="0 0 7 24"><circle cx="2.20" cy="2.70" r="1.05" fill="#9a9a9a" opacity=".55"/><circle cx="1.50" cy="2.00" r="1" fill="#fff"/><circle cx="5.70" cy="5.63" r="1.05" fill="#9a9a9a" opacity=".55"/><circle cx="5.00" cy="4.93" r="1" fill="#fff"/><circle cx="2.20" cy="8.56" r="1.05" fill="#9a9a9a" opacity=".55"/><circle cx="1.50" cy="7.86" r="1" fill="#fff"/><circle cx="5.70" cy="11.49" r="1.05" fill="#9a9a9a" opacity=".55"/><circle cx="5.00" cy="10.79" r="1" fill="#fff"/><circle cx="2.20" cy="14.42" r="1.05" fill="#9a9a9a" opacity=".55"/><circle cx="1.50" cy="13.72" r="1" fill="#fff"/><circle cx="5.70" cy="17.35" r="1.05" fill="#9a9a9a" opacity=".55"/><circle cx="5.00" cy="16.65" r="1" fill="#fff"/><circle cx="2.20" cy="20.28" r="1.05" fill="#9a9a9a" opacity=".55"/><circle cx="1.50" cy="19.58" r="1" fill="#fff"/><circle cx="5.70" cy="23.21" r="1.05" fill="#9a9a9a" opacity=".55"/><circle cx="5.00" cy="22.51" r="1" fill="#fff"/></svg><svg class="grip" style="left:683.8px;top:6px" viewBox="0 0 7 24"><circle cx="2.20" cy="2.70" r="1.05" fill="#9a9a9a" opacity=".55"/><circle cx="1.50" cy="2.00" r="1" fill="#fff"/><circle cx="5.70" cy="5.63" r="1.05" fill="#9a9a9a" opacity=".55"/><circle cx="5.00" cy="4.93" r="1" fill="#fff"/><circle cx="2.20" cy="8.56" r="1.05" fill="#9a9a9a" opacity=".55"/><circle cx="1.50" cy="7.86" r="1" fill="#fff"/><circle cx="5.70" cy="11.49" r="1.05" fill="#9a9a9a" opacity=".55"/><circle cx="5.00" cy="10.79" r="1" fill="#fff"/><circle cx="2.20" cy="14.42" r="1.05" fill="#9a9a9a" opacity=".55"/><circle cx="1.50" cy="13.72" r="1" fill="#fff"/><circle cx="5.70" cy="17.35" r="1.05" fill="#9a9a9a" opacity=".55"/><circle cx="5.00" cy="16.65" r="1" fill="#fff"/><circle cx="2.20" cy="20.28" r="1.05" fill="#9a9a9a" opacity=".55"/><circle cx="1.50" cy="19.58" r="1" fill="#fff"/><circle cx="5.70" cy="23.21" r="1.05" fill="#9a9a9a" opacity=".55"/><circle cx="5.00" cy="22.51" r="1" fill="#fff"/></svg><div style="position:absolute;left:35px;top:25px;width:0;height:0;border-left:4px solid transparent;border-right:4px solid transparent;border-top:6px solid #777"></div></div>
<div id="side"><svg style="position:absolute;left:7px;top:6px;width:40px;height:6px" viewBox="0 0 40 6"><circle cx="2.70" cy="2.20" r="1.05" fill="#9a9a9a" opacity=".55"/><circle cx="2.00" cy="1.50" r="1" fill="#fff"/><circle cx="5.80" cy="4.80" r="1.05" fill="#9a9a9a" opacity=".55"/><circle cx="5.10" cy="4.10" r="1" fill="#fff"/><circle cx="8.90" cy="2.20" r="1.05" fill="#9a9a9a" opacity=".55"/><circle cx="8.20" cy="1.50" r="1" fill="#fff"/><circle cx="12.00" cy="4.80" r="1.05" fill="#9a9a9a" opacity=".55"/><circle cx="11.30" cy="4.10" r="1" fill="#fff"/><circle cx="15.10" cy="2.20" r="1.05" fill="#9a9a9a" opacity=".55"/><circle cx="14.40" cy="1.50" r="1" fill="#fff"/><circle cx="18.20" cy="4.80" r="1.05" fill="#9a9a9a" opacity=".55"/><circle cx="17.50" cy="4.10" r="1" fill="#fff"/><circle cx="21.30" cy="2.20" r="1.05" fill="#9a9a9a" opacity=".55"/><circle cx="20.60" cy="1.50" r="1" fill="#fff"/><circle cx="24.40" cy="4.80" r="1.05" fill="#9a9a9a" opacity=".55"/><circle cx="23.70" cy="4.10" r="1" fill="#fff"/><circle cx="27.50" cy="2.20" r="1.05" fill="#9a9a9a" opacity=".55"/><circle cx="26.80" cy="1.50" r="1" fill="#fff"/><circle cx="30.60" cy="4.80" r="1.05" fill="#9a9a9a" opacity=".55"/><circle cx="29.90" cy="4.10" r="1" fill="#fff"/><circle cx="33.70" cy="2.20" r="1.05" fill="#9a9a9a" opacity=".55"/><circle cx="33.00" cy="1.50" r="1" fill="#fff"/><circle cx="36.80" cy="4.80" r="1.05" fill="#9a9a9a" opacity=".55"/><circle cx="36.10" cy="4.10" r="1" fill="#fff"/></svg><svg class="ic" style="left:12px;top:16px" viewBox="0 0 24 24"><path d="M3,3l6,15l6,-15l5,0" fill="none" stroke="#2c4a6e" stroke-width="1.3"/><circle cx="3" cy="3" r="1.9" fill="#fff" stroke="#2c4a6e"/><circle cx="9" cy="18" r="1.9" fill="#fff" stroke="#2c4a6e"/><circle cx="15" cy="3" r="1.9" fill="#fff" stroke="#2c4a6e"/><circle cx="20.5" cy="3" r="1.9" fill="#fff" stroke="#2c4a6e"/><rect x="14.5" y="14.5" width="9" height="9" rx="1.6" fill="#5a9a5e" stroke="#00000033" stroke-width=".6"/><path d="M16.5,19.0h5M19.0,16.5v5" stroke="#fff" stroke-width="1.8"/></svg><svg class="ic" style="left:12px;top:54px" viewBox="0 0 24 24"><rect x="1" y="1" width="6" height="6" fill="#1d3557"/><rect x="7" y="1" width="6" height="6" fill="#6c9bd2"/><rect x="13" y="1" width="6" height="6" fill="#1d3557"/><rect x="1" y="7" width="6" height="6" fill="#6c9bd2"/><rect x="7" y="7" width="6" height="6" fill="#1d3557"/><rect x="13" y="7" width="6" height="6" fill="#8fb4de"/><rect x="1" y="13" width="6" height="6" fill="#1d3557"/><rect x="7" y="13" width="6" height="6" fill="#6c9bd2"/><rect x="13" y="13" width="6" height="6" fill="#6c9bd2"/><rect x="14.5" y="14.5" width="9" height="9" rx="1.6" fill="#5a9a5e" stroke="#00000033" stroke-width=".6"/><path d="M16.5,19.0h5M19.0,16.5v5" stroke="#fff" stroke-width="1.8"/></svg><svg class="ic" style="left:12px;top:92px" viewBox="0 0 24 24"><path d="M3,8c0,-5 5,-7 9,-6.500000000000001c5,.5 7.500000000000001,3 7,8.000000000000002c-.4,3 -2,4 -3,4c.5,3 -.5,5 -2.5,5.5c-2,.4 -2.500000000000001,-2 -2.500000000000001,-4.000000000000001c-2,1 -4,0 -5,-1.5c-2,-1 -3,-3 -3,-5.500000000000002z" fill="#5f8fc4" stroke="#2c4a6e" stroke-width="1"/><path d="M9,6c0,3 .5,6 2,8M13.500000000000002,5c1,3 1,6 .5,8.500000000000002" stroke="#2c4a6e" fill="none" stroke-width=".9"/><rect x="14.5" y="14.5" width="9" height="9" rx="1.6" fill="#5a9a5e" stroke="#00000033" stroke-width=".6"/><path d="M16.5,19.0h5M19.0,16.5v5" stroke="#fff" stroke-width="1.8"/></svg><svg class="ic" style="left:12px;top:130px" viewBox="0 0 24 24"><path d="M2,23c2,-8 6,-15 19,-21c-1,8 -6,14 -15,15" fill="#8fb4de" stroke="#2c4a6e" stroke-width="1.1" stroke-linejoin="round"/><path d="M2,23c3,-7 8,-13 17,-19" stroke="#2c4a6e" stroke-width=".8" fill="none"/><rect x="14.5" y="14.5" width="9" height="9" rx="1.6" fill="#5a9a5e" stroke="#00000033" stroke-width=".6"/><path d="M16.5,19.0h5M19.0,16.5v5" stroke="#fff" stroke-width="1.8"/></svg><svg class="ic" style="left:12px;top:168px" viewBox="0 0 24 24"><path d="M2,2c7,0 15,3 19,12c-5,-2 -9,-1 -13,2l-6,5c4,-6 4,-13 0,-19z" fill="#5f8fc4" stroke="#1d3557" stroke-width="1.1" stroke-linejoin="round"/><path d="M7,3c3,4 4,8 2,13M12,5c3,3 4,6 3,9" stroke="#1d3557" fill="none" stroke-width=".9"/><rect x="14.5" y="14.5" width="9" height="9" rx="1.6" fill="#5a9a5e" stroke="#00000033" stroke-width=".6"/><path d="M16.5,19.0h5M19.0,16.5v5" stroke="#fff" stroke-width="1.8"/></svg><svg class="ic" style="left:12px;top:206px" viewBox="0 0 24 24"><ellipse cx="11" cy="11" rx="10" ry="9" fill="#a8c4e6" stroke="#4a78b4" stroke-width="1.1"/><path d="M1,11h20M3,6h16M3,16h16M11,2v18M11,2c-5,3 -5,15 0,18M11,2c5,3 5,15 0,18" fill="none" stroke="#4a78b4" stroke-width=".8"/><path d="M4,7l4,-2l3,2l-2,3l-4,1zM13,8l4,1l1,4l-3,2l-2,-3z" fill="#2c4a6e" opacity=".7"/><rect x="14.5" y="14.5" width="9" height="9" rx="1.6" fill="#5a9a5e" stroke="#00000033" stroke-width=".6"/><path d="M16.5,19.0h5M19.0,16.5v5" stroke="#fff" stroke-width="1.8"/></svg><svg class="ic" style="left:12px;top:244px" viewBox="0 0 24 24"><ellipse cx="11" cy="11" rx="10" ry="9" fill="#3e6aa6" stroke="#fff" stroke-width="1.1"/><path d="M1,11h20M3,6h16M3,16h16M11,2v18M11,2c-5,3 -5,15 0,18M11,2c5,3 5,15 0,18" fill="none" stroke="#fff" stroke-width=".8"/><ellipse cx="11" cy="11" rx="10" ry="9" fill="none" stroke="#1d3557" stroke-width="1.1"/><rect x="14.5" y="14.5" width="9" height="9" rx="1.6" fill="#5a9a5e" stroke="#00000033" stroke-width=".6"/><path d="M16.5,19.0h5M19.0,16.5v5" stroke="#fff" stroke-width="1.8"/></svg><svg class="ic" style="left:12px;top:282px" viewBox="0 0 24 24"><ellipse cx="11" cy="11" rx="10" ry="9" fill="#dbe7f6" stroke="#6c9bd2" stroke-width="1.1"/><path d="M1,11h20M3,6h16M3,16h16M11,2v18M11,2c-5,3 -5,15 0,18M11,2c5,3 5,15 0,18" fill="none" stroke="#6c9bd2" stroke-width=".8"/><path d="M5,6l4.5,11l4.5,-11l3,0" fill="none" stroke="#111" stroke-width="1.2"/><circle cx="5" cy="6" r="1.3" fill="#fff" stroke="#111" stroke-width=".8"/><circle cx="9.5" cy="17" r="1.3" fill="#fff" stroke="#111" stroke-width=".8"/><circle cx="14" cy="6" r="1.3" fill="#fff" stroke="#111" stroke-width=".8"/><circle cx="17" cy="6" r="1.3" fill="#fff" stroke="#111" stroke-width=".8"/><rect x="14.5" y="14.5" width="9" height="9" rx="1.6" fill="#5a9a5e" stroke="#00000033" stroke-width=".6"/><path d="M16.5,19.0h5M19.0,16.5v5" stroke="#fff" stroke-width="1.8"/></svg><svg class="ic" style="left:12px;top:320px" viewBox="0 0 24 24"><path d="M5,5c1,-4 9,-4 9,2c0,5 -4,9 -8,11c2,-3 3,-5 3,-7c-2,1 -5,-2 -4,-6z" fill="#5f8fc4" stroke="#2c4a6e" stroke-width="1"/><rect x="14.5" y="14.5" width="9" height="9" rx="1.6" fill="#5a9a5e" stroke="#00000033" stroke-width=".6"/><path d="M16.5,19.0h5M19.0,16.5v5" stroke="#fff" stroke-width="1.8"/></svg><svg class="ic" style="left:12px;top:358px" viewBox="0 0 24 24"><path d="M2,23c2,-8 6,-15 19,-21c-1,8 -6,14 -15,15" fill="#8fb4de" stroke="#2c4a6e" stroke-width="1.1" stroke-linejoin="round"/><path d="M2,23c3,-7 8,-13 17,-19" stroke="#2c4a6e" stroke-width=".8" fill="none"/><rect x="14.5" y="14.5" width="9" height="9" rx="1.6" fill="#d8b226" stroke="#00000033" stroke-width=".6"/><path d="M19.0,16.0v6M16.5,17.5l5,3M16.5,20.5l5,-3" stroke="#fff" stroke-width="1.1"/></svg><svg class="ic" style="left:12px;top:398px" viewBox="0 0 24 24"><rect x="2.5" y="1.5" width="18" height="18" fill="#ececec" stroke="#888" stroke-width="1"/><rect x="15" y="14.5" width="9" height="9" rx="1.6" fill="#e8505a" stroke="#00000033" stroke-width=".6"/><path d="M16.5,19h6" stroke="#fff" stroke-width="2"/></svg><div style="position:absolute;left:38px;top:372px;width:0;height:0;border-left:4px solid transparent;border-right:4px solid transparent;border-top:6px solid #555"></div><svg style="position:absolute;left:7px;top:434px;width:40px;height:6px" viewBox="0 0 40 6"><circle cx="2.70" cy="2.20" r="1.05" fill="#9a9a9a" opacity=".55"/><circle cx="2.00" cy="1.50" r="1" fill="#fff"/><circle cx="5.80" cy="4.80" r="1.05" fill="#9a9a9a" opacity=".55"/><circle cx="5.10" cy="4.10" r="1" fill="#fff"/><circle cx="8.90" cy="2.20" r="1.05" fill="#9a9a9a" opacity=".55"/><circle cx="8.20" cy="1.50" r="1" fill="#fff"/><circle cx="12.00" cy="4.80" r="1.05" fill="#9a9a9a" opacity=".55"/><circle cx="11.30" cy="4.10" r="1" fill="#fff"/><circle cx="15.10" cy="2.20" r="1.05" fill="#9a9a9a" opacity=".55"/><circle cx="14.40" cy="1.50" r="1" fill="#fff"/><circle cx="18.20" cy="4.80" r="1.05" fill="#9a9a9a" opacity=".55"/><circle cx="17.50" cy="4.10" r="1" fill="#fff"/><circle cx="21.30" cy="2.20" r="1.05" fill="#9a9a9a" opacity=".55"/><circle cx="20.60" cy="1.50" r="1" fill="#fff"/><circle cx="24.40" cy="4.80" r="1.05" fill="#9a9a9a" opacity=".55"/><circle cx="23.70" cy="4.10" r="1" fill="#fff"/><circle cx="27.50" cy="2.20" r="1.05" fill="#9a9a9a" opacity=".55"/><circle cx="26.80" cy="1.50" r="1" fill="#fff"/><circle cx="30.60" cy="4.80" r="1.05" fill="#9a9a9a" opacity=".55"/><circle cx="29.90" cy="4.10" r="1" fill="#fff"/><circle cx="33.70" cy="2.20" r="1.05" fill="#9a9a9a" opacity=".55"/><circle cx="33.00" cy="1.50" r="1" fill="#fff"/><circle cx="36.80" cy="4.80" r="1.05" fill="#9a9a9a" opacity=".55"/><circle cx="36.10" cy="4.10" r="1" fill="#fff"/></svg></div>
<div id="lhead">Layers<svg style="position:absolute;left:3px;top:6px;width:13px;height:13px" viewBox="0 0 13 13"><circle cx="6.5" cy="6.5" r="6.3" fill="#3c3c3c"/><path d="M4,4l5,5M9,4l-5,5" stroke="#fff" stroke-width="1.8"/></svg><svg style="position:absolute;left:23px;top:6px;width:13px;height:13px" viewBox="0 0 13 13"><circle cx="6.5" cy="6.5" r="6.3" fill="#3c3c3c"/><rect x="5.2" y="3.8" width="4.2" height="3.4" fill="none" stroke="#fff" stroke-width="1"/><rect x="3.4" y="5.8" width="4.2" height="3.4" fill="#3c3c3c" stroke="#fff" stroke-width="1"/></svg></div>
<div id="lbody"><div class="row" style="top:0px"><div class="tri"></div><div class="cb"><svg viewBox="0 0 20 20"><path d="M5,11.5l3.5,4.5l7.5,-13" fill="none" stroke="#1a1a1a" stroke-width="2.4" stroke-linecap="round" stroke-linejoin="round"/></svg></div><svg style="position:absolute;left:52px;top:3px;width:17px;height:15px" viewBox="0 0 17 15"><circle cx="6.5" cy="5" r="1.1" fill="#fff" stroke="#888" stroke-width=".7"/><circle cx="13.5" cy="2" r="1.1" fill="#fff" stroke="#888" stroke-width=".7"/><circle cx="4" cy="11.5" r="1.1" fill="#fff" stroke="#888" stroke-width=".7"/></svg><span class="nm">places</span></div><div class="row" style="top:20px"><div class="tri"></div><div class="cb"><svg viewBox="0 0 20 20"><path d="M5,11.5l3.5,4.5l7.5,-13" fill="none" stroke="#1a1a1a" stroke-width="2.4" stroke-linecap="round" stroke-linejoin="round"/></svg></div><svg style="position:absolute;left:52px;top:3px;width:17px;height:14px" viewBox="0 0 17 14"><path d="M1.5,5c-1,-3 3,-4 6,-2.5c2,1 4,-1 6.500000000000001,0c2.5,1 2,5 1,7c-1,2 -3.500000000000001,.5 -5.5,-.5c-2,-1 -5,3 -7,1c-1.5,-1.5 0,-3 -1,-5z" fill="#ececec" stroke="#8a8a8a" stroke-width="1"/></svg><span class="nm">buildings</span></div><div class="row" style="top:40px"><div class="tri"></div><div class="cb"><svg viewBox="0 0 20 20"><path d="M5,11.5l3.5,4.5l7.5,-13" fill="none" stroke="#1a1a1a" stroke-width="2.4" stroke-linecap="round" stroke-linejoin="round"/></svg></div><svg style="position:absolute;left:52px;top:3px;width:17px;height:15px" viewBox="0 0 17 15"><path d="M1.5,2.5l5,10.5l5,-9.5l3.5,-1" fill="none" stroke="#666" stroke-width=".9"/><circle cx="1.5" cy="2.5" r="1" fill="#fff" stroke="#777" stroke-width=".6"/><circle cx="6.5" cy="13" r="1" fill="#fff" stroke="#777" stroke-width=".6"/><circle cx="11.5" cy="3.5" r="1" fill="#fff" stroke="#777" stroke-width=".6"/><circle cx="15" cy="2.5" r="1" fill="#fff" stroke="#777" stroke-width=".6"/></svg><span class="nm">roads</span></div><div class="row sel" style="top:60px"><div class="tri" style="border-left-color:#8e8e8e"></div><div class="cb"><svg viewBox="0 0 20 20"><path d="M5,11.5l3.5,4.5l7.5,-13" fill="none" stroke="#1a1a1a" stroke-width="2.4" stroke-linecap="round" stroke-linejoin="round"/></svg></div><svg style="position:absolute;left:52px;top:3px;width:17px;height:14px" viewBox="0 0 17 14"><path d="M1.5,5c-1,-3 3,-4 6,-2.5c2,1 4,-1 6.500000000000001,0c2.5,1 2,5 1,7c-1,2 -3.500000000000001,.5 -5.5,-.5c-2,-1 -5,3 -7,1c-1.5,-1.5 0,-3 -1,-5z" fill="#dfe6f0" stroke="#b8c4d8" stroke-width="1"/></svg><span class="nm">water</span></div><div class="row" style="top:80px"><div class="tri"></div><div class="cb"><svg viewBox="0 0 20 20"><path d="M5,11.5l3.5,4.5l7.5,-13" fill="none" stroke="#1a1a1a" stroke-width="2.4" stroke-linecap="round" stroke-linejoin="round"/></svg></div><svg style="position:absolute;left:52px;top:3px;width:17px;height:15px" viewBox="0 0 17 15"><path d="M1.5,2.5l5,10.5l5,-9.5l3.5,-1" fill="none" stroke="#666" stroke-width=".9"/><circle cx="1.5" cy="2.5" r="1" fill="#fff" stroke="#777" stroke-width=".6"/><circle cx="6.5" cy="13" r="1" fill="#fff" stroke="#777" stroke-width=".6"/><circle cx="11.5" cy="3.5" r="1" fill="#fff" stroke="#777" stroke-width=".6"/><circle cx="15" cy="2.5" r="1" fill="#fff" stroke="#777" stroke-width=".6"/></svg><span class="nm">rivers</span></div><div class="row" style="top:100px"><div class="tri"></div><div class="cb"><svg viewBox="0 0 20 20"><path d="M5,11.5l3.5,4.5l7.5,-13" fill="none" stroke="#1a1a1a" stroke-width="2.4" stroke-linecap="round" stroke-linejoin="round"/></svg></div><svg style="position:absolute;left:52px;top:3px;width:17px;height:14px" viewBox="0 0 17 14"><path d="M1.5,5c-1,-3 3,-4 6,-2.5c2,1 4,-1 6.500000000000001,0c2.5,1 2,5 1,7c-1,2 -3.500000000000001,.5 -5.5,-.5c-2,-1 -5,3 -7,1c-1.5,-1.5 0,-3 -1,-5z" fill="#ececec" stroke="#8a8a8a" stroke-width="1"/></svg><span class="nm">landuse</span></div></div>
<div id="lsplit"></div>
<div id="ltabline"></div>
<div id="tabs"><div class="a">Layers</div><div class="b">Browser</div></div>
<div id="map"><svg width="2034" height="1288" viewBox="0 0 2034 1288" style="position:absolute;left:-401px;top:-130px">
<g fill="#dddbe0" stroke="none">
<path d="M594.0,232.0 L1812.0,149.0 L1586.0,251.0 L1722.0,355.0 L1690.0,357.0 L1372.0,353.0 L1362.0,375.0 L1345.0,376.0 L1295.0,356.0 L1235.0,365.0 L1232.0,377.0 L1204.0,380.0 L1197.0,311.0 L1162.0,300.0 L1065.0,300.0 L942.0,311.0 L895.0,278.0 L745.0,250.0 L624.0,266.0Z"/>
<path d="M1141.0,795.0 L1192.0,816.0 L1217.0,807.0 L1300.0,736.0 L1370.0,735.0 L1462.0,818.0 L1440.0,841.0 L1449.0,847.0 L1495.0,805.0 L1515.0,817.0 L1537.0,808.0 L1508.0,792.0 L1510.0,788.0 L1458.0,756.0 L1468.0,743.0 L1478.0,747.0 L1506.0,766.0 L1534.0,778.0 L1562.0,787.0 L1590.0,792.0 L1620.0,795.0 L1657.0,795.0 L1699.0,796.0 L1742.0,794.0 L1756.0,800.0 L1779.0,823.0 L1792.0,825.0 L1805.0,821.0 L1816.0,820.0 L1830.0,824.0 L1804.0,845.0 L1795.0,890.0 L1853.0,946.0 L1790.0,1002.0 L1780.0,1052.0 L1626.0,1085.0 L1614.0,1099.0 L1620.0,1134.0 L1589.0,1153.0 L1573.0,1140.0 L1481.0,1171.0 L1392.0,1149.0 L1377.0,1143.0 L1370.0,1151.0 L1354.0,1140.0 L1308.0,1141.0 L1294.0,1134.0 L1272.0,1121.0 L1252.0,1109.0 L1246.0,1087.0 L1260.0,1066.0 L1290.0,1041.0 L1278.0,1035.0 L1257.0,1023.0 L1229.0,1014.0 L1198.0,1009.0 L1177.0,1017.0 L1149.0,1017.0 L1143.0,1008.0 L1121.0,1014.0 L1112.0,1047.0 L1075.0,1075.0 L1035.0,1097.0 L1011.0,1103.0 L983.0,1097.0 L961.0,1084.0 L955.0,1057.0 L968.0,1026.0 L980.0,992.0 L975.0,964.0 L965.0,952.0 L1048.0,866.0 L1063.0,861.0 L1080.0,844.0 L1113.0,843.0 L1118.0,829.0Z"/>
<path d="M1076.0,767.0 L1094.0,778.0 L1085.0,812.0 L1076.0,824.0 L1067.0,829.0 L1053.0,822.0 L1066.0,786.0Z"/>
<path d="M1287.3,713.0 L1306.4,716.4 L1305.3,727.5 L1285.5,724.9Z"/>
<path d="M1355.0,540.0 L1360.0,540.0 L1358.5,561.0 L1353.5,560.0Z"/>
<path d="M1207.5,460.0 L1215.0,464.0 L1205.0,465.0Z"/>
<path d="M1046.0,710.0 L1055.0,714.0 L1067.0,710.0 L1109.0,660.0 L1122.0,666.0 L1094.0,707.0 L1115.0,714.0 L1159.0,658.0 L1189.0,636.0 L1224.0,619.0 L1281.0,594.0 L1325.0,574.0 L1340.0,566.0 L1310.0,539.0 L1330.0,519.0 L1360.0,520.0 L1380.0,502.0 L1330.0,469.0 L1298.0,494.0 L1292.0,483.0 L1258.0,479.0 L1253.0,486.0 L1149.0,517.0 L1104.0,564.0 L1108.0,606.0 L1103.0,619.0 L1104.0,638.0Z"/>
<path d="M1180.0,659.8 L1241.4,642.2 L1255.5,647.2 L1254.0,643.3 L1265.0,641.2 L1280.7,648.8 L1293.3,677.1 L1288.6,688.1 L1279.1,692.8 L1266.6,694.4 L1243.0,681.8 L1236.7,700.7 L1246.1,740.0 L1252.4,741.6 L1257.1,749.5 L1250.8,757.3 L1231.9,768.3 L1228.8,782.5 L1197.3,793.5 L1187.9,785.7 L1173.7,788.8 L1163.5,780.9 L1170.6,769.9 L1189.5,738.5 L1176.9,719.6 L1186.3,707.0 L1170.6,700.7 L1173.7,670.8Z"/>
<path d="M1781.7,416.1 L1789.2,423.6 L1804.1,421.9 L1821.5,424.8 L1838.9,424.8 L1853.8,432.3 L1871.2,443.5 L1888.6,452.2 L1894.8,454.7 L1882.4,474.5 L1876.1,484.5 L1858.8,483.2 L1846.3,464.6 L1833.9,463.4 L1831.4,474.5 L1819.0,477.0 L1809.1,477.0 L1796.6,485.7 L1781.7,477.0 L1758.1,465.8 L1759.4,448.4 L1764.3,437.3 L1774.3,424.8Z"/>
<path d="M1896.0,454.7 L1910.9,449.7 L1935.8,455.9 L1943.2,459.6 L1958.1,467.1 L1975.5,477.0 L1970.6,487.0 L1960.6,485.7 L1958.1,499.4 L1971.8,498.1 L1968.1,511.8 L1950.7,516.8 L1935.8,539.1 L1933.3,551.6 L1923.4,549.1 L1922.1,534.2 L1908.4,531.7 L1898.5,529.2 L1883.6,514.3 L1871.2,504.3 L1858.8,485.7 L1886.1,494.4 L1891.1,484.5 L1881.1,474.5Z"/>
<path d="M1950.7,516.8 L1968.1,511.8 L1970.6,524.2 L1964.3,539.1 L1963.1,549.1 L1953.2,561.5 L1940.7,571.4 L1935.8,561.5 L1938.3,544.1Z"/>
<path d="M1970.6,559.0 L1971.8,573.9 L1950.7,623.6 L1943.2,633.5 L1938.3,601.2 L1953.2,578.9Z"/>
<path d="M1943.2,633.5 L1948.2,673.3 L1947.0,693.2 L1944.5,673.3 L1943.2,648.4Z"/>
<path d="M1835.2,464.1 L1845.8,464.6 L1850.1,474.5 L1856.3,484.5 L1858.8,496.9 L1853.8,508.1 L1848.8,503.1 L1833.9,498.1 L1815.3,504.3 L1819.0,479.5 L1831.4,474.5Z"/>
<path d="M1815.3,505.6 L1833.9,499.4 L1848.8,504.3 L1853.8,509.3 L1858.8,505.6 L1871.2,525.5 L1874.9,544.1 L1883.6,557.8 L1884.8,564.0 L1856.3,561.5 L1855.0,549.1 L1851.3,608.2 L1804.1,597.5 L1815.3,583.9 L1808.6,559.0 L1810.3,539.1Z"/>
<path d="M1856.3,562.7 L1884.8,565.2 L1888.6,573.9 L1894.8,577.6 L1883.6,598.8 L1871.2,616.1 L1860.0,629.8 L1857.5,638.5 L1853.3,629.8 L1863.7,611.2 L1876.1,588.8 L1878.6,577.6 L1856.3,571.4Z"/>
<path d="M1759.4,542.9 L1769.3,539.1 L1789.2,538.6 L1799.1,549.1 L1804.1,561.5 L1794.2,564.0 L1769.3,565.2 L1759.4,551.6Z"/>
<path d="M1790.4,538.1 L1809.1,537.9 L1808.6,559.0 L1806.6,564.0 L1800.4,549.1Z"/>
<path d="M1755.7,551.6 L1768.1,565.2 L1764.3,568.9 L1754.4,559.0Z"/>
<path d="M1770.6,566.5 L1795.4,564.5 L1805.3,564.0 L1806.6,573.9 L1801.6,591.3 L1789.2,601.2 L1779.3,603.7 L1775.5,588.8 L1769.3,573.9Z"/>
<path d="M1806.6,576.4 L1811.6,575.2 L1815.3,583.9 L1804.1,596.3 L1802.9,588.8Z"/>
<path d="M1763.1,577.6 L1769.3,575.2 L1775.5,591.3 L1776.8,602.5 L1769.3,607.5 L1764.3,591.3Z"/>
<path d="M1737.0,570.2 L1750.7,568.9 L1753.2,583.9 L1759.4,591.3 L1756.9,596.3 L1747.0,585.1 L1737.0,578.9Z"/>
<path d="M1795.4,603.7 L1804.1,597.5 L1811.6,600.0 L1802.9,618.6 L1809.1,627.3 L1806.6,633.5 L1791.7,624.8 L1789.2,616.1Z"/>
<path d="M1811.6,627.3 L1828.9,626.1 L1848.8,627.3 L1851.3,634.8 L1831.4,634.8 L1814.0,633.5Z"/>
<path d="M1694.8,563.5 L1709.7,565.2 L1724.6,571.4 L1739.5,581.4 L1749.4,591.3 L1756.9,601.2 L1755.7,609.9 L1739.5,608.2 L1722.1,596.3 L1704.7,583.9 L1692.3,571.4Z"/>
<ellipse cx="661.8" cy="965.0" rx="37.9" ry="31.6"/>
</g>
<ellipse cx="1794.9" cy="436.5" rx="9.0" ry="7.8" fill="#fff"/>
<g fill="none" stroke="#a13a5c" stroke-width="0.85" stroke-linejoin="round">
<path d="M635.0,403.5 L660.0,437.5 L690.0,475.0 L705.0,480.0 L720.0,487.5 L730.0,502.5 L745.0,525.0 L760.0,532.5 L800.0,545.0 L835.0,557.5 L880.0,562.5 L910.0,563.5 L930.0,572.5 L940.0,587.5 L940.0,600.0 L950.0,612.5 L960.0,640.0 L965.0,660.0 L985.0,695.0 L995.0,710.0 L1007.5,715.0 L1011.0,730.0 L1020.0,740.0 L1032.5,742.5 L1042.5,765.0 L1045.0,774.0 L1045.0,777.0 L1035.0,812.0 L1017.5,822.0 L1010.0,842.0 L1007.5,862.0 L992.5,874.5 L990.0,892.0 L992.5,917.0 L965.0,947.0 L960.0,954.5"/>
<path d="M1029.0,184.0 L1032.5,192.5 L1027.5,202.5 L1027.5,220.0 L1042.5,220.0 L1041.5,230.0 L1035.0,232.5 L1035.0,252.5 L1029.0,257.5 L1029.0,270.0 L1025.0,275.0 L1022.5,305.0 L1035.0,330.0 L1035.0,345.0 L1027.5,380.0 L1025.0,410.0 L1012.5,440.0 L1006.0,475.0 L1012.5,500.0 L1020.0,515.0 L1017.5,530.0 L1007.5,555.0 L995.0,590.0 L982.5,620.0 L985.0,650.0 L990.0,667.5 L1000.0,675.0 L1007.5,695.0 L1010.0,720.0 L1015.0,737.5 L1025.0,741.0"/>
<path d="M1503.6,173.5 L1521.0,180.9 L1537.1,172.7 L1544.6,174.7 L1547.1,184.6 L1554.5,187.6 L1564.5,187.6 L1571.9,183.4 L1584.3,185.1 L1593.0,191.6 L1604.2,187.6 L1616.6,192.1 L1634.0,200.8 L1643.9,200.0 L1653.9,205.8 L1666.3,211.5 L1676.2,209.5 L1683.7,202.0 L1684.9,193.3 L1691.1,190.1 L1716.0,190.1 L1730.9,195.1 L1753.2,199.1 L1778.1,198.3 L1790.5,197.6 L1800.4,203.3 L1810.4,214.5 L1815.3,216.9 L1811.6,225.6 L1815.3,231.8 L1827.7,234.3 L1831.5,243.0 L1838.9,257.2 L1850.1,255.4 L1856.3,257.9 L1855.1,262.9 L1847.6,271.6 L1852.6,284.0 L1856.3,291.5 L1877.4,293.9 L1879.9,302.6 L1892.3,312.6 L1908.5,322.5 L1910.9,328.7 L1901.0,334.9 L1902.3,343.6 L1914.7,348.6 L1907.2,356.0 L1908.5,364.7 L1927.1,370.9 L1937.0,377.1 L1939.0,390.8 L1938.3,415.6 L1938.3,430.5"/>
<path d="M1933.1,603.0 L1936.2,616.1 L1938.2,640.4 L1938.2,721.1 L1938.6,860.0 L1938.5,965.0"/>
<path d="M1444.5,384.6 L1443.6,395.8 L1448.2,410.8 L1453.8,427.6 L1466.9,433.2 L1476.3,448.1 L1476.3,459.3 L1487.5,468.7 L1498.7,476.2 L1495.9,481.8 L1506.1,493.0 L1496.2,483.6 L1506.7,492.9 L1514.9,498.7 L1527.7,501.0 L1544.0,505.7 L1558.0,511.5 L1567.3,519.7 L1576.6,520.8 L1592.9,515.0 L1604.5,516.6 L1618.5,525.5 L1630.1,530.6 L1645.3,533.6 L1660.4,538.3 L1667.4,541.8 L1672.1,555.8 L1679.0,569.7 L1690.7,581.4 L1702.3,597.7 L1703.0,600.0 L1712.1,612.1 L1717.2,625.2 L1728.3,633.3 L1738.4,640.4 L1743.4,647.4 L1758.5,653.5 L1776.7,657.5 L1788.8,664.6 L1794.9,670.6 L1805.0,680.7 L1813.0,682.8 L1823.1,684.8 L1831.2,692.9 L1841.3,698.9 L1853.4,705.0 L1865.5,709.0 L1877.6,715.1 L1893.8,717.1 L1903.9,721.1 L1916.0,724.7 L1928.1,721.1 L1937.8,721.1"/>
<path d="M1560.3,452.1 L1551.0,457.9 L1548.6,467.3 L1551.0,490.5 L1560.3,504.5 L1562.1,513.8"/>
<path d="M1676.0,499.4 L1670.9,511.5 L1667.9,527.8 L1667.9,541.8"/>
<path d="M1220.3,403.3 L1222.2,418.2 L1227.8,431.3 L1240.9,442.5 L1254.0,457.5 L1267.0,472.4 L1272.6,483.6 L1278.2,491.1 L1287.6,500.4 L1288.5,509.8 L1292.5,500.0 L1287.5,510.0 L1272.5,525.0 L1260.0,535.0 L1255.0,550.0 L1245.0,565.0 L1230.0,580.0 L1215.0,600.0 L1200.0,610.0 L1195.0,625.0 L1175.0,635.0 L1155.0,645.0 L1135.0,660.0 L1125.0,680.0 L1105.0,695.0 L1085.0,705.0 L1087.2,702.3 L1080.9,708.6 L1079.3,719.6 L1073.8,730.6 L1073.8,741.6 L1066.7,751.0 L1046.3,777.8 L1044.7,799.8"/>
<path d="M1328.7,380.9 L1334.3,392.1 L1335.2,407.0 L1330.5,414.5 L1332.4,425.7 L1326.8,436.9 L1318.4,445.3 L1322.1,457.5 L1319.3,466.8 L1310.0,476.2 L1309.1,485.5 L1306.3,493.0 L1295.1,498.6 L1283.8,511.6 L1276.4,520.1"/>
<path d="M1339.0,454.7 L1340.8,461.2 L1347.4,464.9"/>
<path d="M1891.0,1129.5 L1900.0,1114.5 L1910.0,1109.5 L1930.0,1108.0 L1937.5,1102.0"/>
<path d="M1085.0,347.5 L1095.0,355.0 L1090.0,362.5"/>
<path d="M444.2,1049.7 L457.1,1028.3 L461.9,1011.2 L458.5,1004.0 L440.0,992.6 L438.0,979.8 L444.2,962.7 L452.8,952.7 L468.5,944.2 L491.3,934.2 L525.5,925.1 L534.1,926.5 L565.4,937.0 L581.1,945.0 L593.9,945.0 L613.9,929.9 L626.7,924.2 L656.7,923.6 L700.9,929.0 L710.8,933.6 L722.3,948.4 L733.7,962.7 L745.1,978.4 L762.2,989.8 L779.3,997.5 L814.9,1009.7"/>
<path d="M817.2,1005.5 L811.2,1014.6"/>
<path d="M1272.1,1119.8 L1293.6,1133.0 L1355.1,1133.6"/>
<path d="M816.4,1006.0 L834.8,1013.1 L854.5,1019.6 L873.4,1023.7 L884.0,1020.7 L890.2,1012.5 L892.2,1000.2 L886.7,982.6 L879.6,965.4 L875.7,949.9 L881.8,939.6 L904.2,935.1 L919.3,934.5 L937.4,937.5 L963.8,950.1 L973.8,959.4 L979.9,979.0 L981.4,994.7 L974.0,1015.5 L962.7,1040.8 L958.6,1065.2 L963.5,1082.9 L978.1,1090.4 L984.1,1095.3 L1010.6,1099.5 L1035.3,1094.0 L1076.1,1071.9 L1105.8,1048.3 L1115.0,1015.8 L1121.5,984.3 L1138.4,973.4 L1152.2,984.2 L1161.6,1000.9 L1182.5,999.9 L1213.8,994.9 L1260.9,1003.1 L1291.7,1018.5 L1295.4,1039.0 L1264.2,1065.6 L1252.0,1085.3 L1255.4,1103.7 L1274.3,1116.5"/>
<path d="M814.9,1009.7 L833.5,1016.9 L853.4,1023.4 L873.4,1027.7 L886.2,1024.0 L893.9,1014.0 L896.2,999.8 L890.5,981.2 L883.4,964.1 L879.7,949.9 L883.4,943.3 L904.7,939.0 L919.0,938.5 L936.1,941.3 L961.8,953.6 L970.3,961.3 L976.0,979.8 L977.5,994.1 L970.3,1014.0 L958.9,1039.7 L954.6,1065.3 L960.3,1085.3 L976.0,1093.9 L983.0,1099.2 L1010.7,1103.5 L1036.8,1097.7 L1078.3,1075.2 L1109.1,1050.6 L1118.9,1016.8 L1125.1,986.0 L1138.3,977.4 L1149.1,986.6 L1159.8,1004.5 L1182.9,1003.9 L1213.6,998.9 L1259.8,1006.9 L1289.0,1021.4 L1292.0,1036.8 L1261.3,1062.9 L1248.1,1084.4 L1252.1,1106.0 L1272.1,1119.8"/>
<path d="M813.5,1013.5 L832.1,1020.6 L852.4,1027.3 L873.3,1031.7 L888.4,1027.3 L897.6,1015.5 L900.2,999.3 L894.3,979.9 L887.1,962.8 L883.7,949.9 L884.9,947.0 L905.3,943.0 L918.7,942.4 L934.8,945.1 L959.8,957.0 L966.8,963.2 L972.1,980.7 L973.5,993.4 L966.6,1012.5 L955.1,1038.5 L950.6,1065.5 L957.1,1087.7 L973.9,1097.3 L981.9,1103.0 L1010.8,1107.5 L1038.4,1101.3 L1080.5,1078.6 L1112.4,1052.9 L1122.8,1017.7 L1128.7,987.8 L1138.2,981.4 L1145.9,989.1 L1158.0,1008.0 L1183.3,1007.8 L1213.5,1002.9 L1258.6,1010.8 L1286.3,1024.3 L1288.7,1034.5 L1258.4,1060.2 L1244.2,1083.6 L1248.8,1108.2 L1269.8,1123.1"/>
</g>
<g fill="#c4defa" stroke="#4a86cf" stroke-width="0.8">
<path d="M1820.2,479.0 L1831.4,479.5 L1843.9,484.5 L1855.0,488.2 L1851.3,495.7 L1843.9,499.9 L1828.9,498.9 L1827.0,487.0Z"/>
<path d="M1746.5,547.8 L1750.7,542.4 L1754.9,544.1 L1755.7,549.1 L1747.0,549.6Z"/>
<path d="M1752.4,563.5 L1763.1,573.9 L1753.2,578.1Z"/>
<path d="M1750.7,611.2 L1759.4,607.5 L1761.9,598.8 L1768.1,606.2 L1769.3,618.6 L1765.6,621.1Z"/>
<path d="M1831.4,663.4 L1836.4,662.1 L1855.0,667.1 L1855.0,669.6 L1843.9,670.8 L1836.4,668.3Z"/>
<path d="M1894.8,679.5 L1898.5,680.7 L1902.2,684.5 L1908.4,683.2 L1912.2,680.7 L1913.4,684.5 L1906.0,688.2 L1897.3,687.0Z"/>
<path d="M1858.0,714.3 L1862.5,716.8 L1861.2,720.0 L1858.8,718.0Z"/>
<path d="M1585.0,411.5 L1589.0,415.0 L1594.0,430.0 L1591.0,432.5 L1585.0,427.5Z"/>
<path d="M1444.0,454.0 L1452.5,452.5 L1454.0,458.5 L1447.5,457.5Z"/>
<path d="M1460.0,554.0 L1463.0,560.0 L1467.5,572.5 L1460.0,574.0 L1457.5,567.5Z"/>
<path d="M1617.5,585.0 L1640.0,575.0 L1646.0,584.0 L1627.5,590.0Z"/>
<path d="M1746.0,545.0 L1751.0,542.5 L1756.0,549.0 L1747.5,550.0Z"/>
<path d="M1751.5,565.0 L1756.0,564.0 L1763.5,576.5 L1754.0,577.5Z"/>
<path d="M1750.0,611.0 L1760.0,607.5 L1762.5,599.0 L1769.0,610.0 L1769.0,622.5 L1764.0,622.5Z"/>
<path d="M1857.7,714.3 L1862.5,717.7 L1860.5,720.5 L1858.5,717.7Z"/>
<path d="M1893.3,725.7 L1896.2,725.1 L1895.6,729.1 L1892.7,728.5Z"/>
<path d="M1921.2,736.5 L1925.2,737.1 L1924.1,740.5 L1921.2,739.3Z"/>
<path d="M1850.5,748.5 L1856.2,746.2 L1857.7,752.8 L1854.8,754.2Z"/>
<ellipse cx="1794.9" cy="436.5" rx="6.0" ry="4.8"/>
<ellipse cx="1908.4" cy="474.5" rx="3.4" ry="3.2"/>
<ellipse cx="1352.5" cy="475.0" rx="3.6" ry="4.4"/>
<ellipse cx="1444.0" cy="437.5" rx="2.0" ry="2.6"/>
</g>
<g fill="none" stroke="#a963c8" stroke-width="0.85" stroke-linejoin="round">
<path d="M530.0,171.5 L526.0,177.5 L531.0,187.5 L534.0,200.0 L550.0,204.0 L570.0,210.0 L582.5,220.0 L595.0,225.0 L610.0,230.0 L615.0,235.0 L627.5,230.0 L630.0,242.5 L640.0,254.0 L655.0,259.0 L672.5,257.5 L660.0,247.5 L667.5,244.0 L662.5,237.5 L672.5,232.5 L700.0,229.0 L730.0,229.0 L760.0,234.0 L795.0,239.0 L802.5,236.0 L807.5,242.5 L830.0,250.0 L860.0,251.0 L870.0,245.0 L875.0,250.0 L900.0,254.0 L920.0,255.0 L940.0,264.0 L955.0,275.0 L945.0,280.0 L960.0,290.0 L965.0,292.5 L977.5,302.5 L982.5,292.5 L1015.0,295.0 L1025.0,286.0 L1035.0,295.0 L1050.0,290.0 L1070.0,302.5 L1085.0,316.0 L1100.0,320.0 L1107.5,332.5 L1135.0,337.5 L1150.0,352.5 L1160.0,359.0 L1143.7,349.1 L1151.2,357.5 L1160.5,358.5 L1168.0,351.9 L1172.7,343.5 L1179.2,337.9 L1183.9,337.0 L1186.7,343.5 L1183.9,356.6 L1178.3,371.5 L1175.5,386.5 L1168.0,395.8 L1162.4,404.2 L1166.2,410.8 L1181.1,419.2 L1195.1,422.0 L1205.4,410.8 L1213.8,402.4 L1212.9,392.1 L1214.7,381.8 L1212.9,377.1 L1213.8,371.5 L1218.5,363.1 L1226.9,358.5 L1228.7,353.8 L1226.9,352.9"/>
<path d="M1226.9,352.9 L1214.7,360.3 L1203.5,371.5 L1201.6,384.6 L1196.0,397.7 L1193.2,414.5 L1184.8,427.6 L1182.0,442.5 L1183.0,455.6 L1181.5,471.5 L1162.4,483.6 L1140.0,496.7"/>
<path d="M1181.5,471.5 L1183.0,474.3 L1205.4,465.9 L1222.2,461.2 L1233.4,464.0 L1240.9,470.5 L1246.5,478.0 L1252.1,483.6"/>
<path d="M1201.6,402.4 L1204.4,405.2 L1206.3,402.4"/>
<path d="M1204.4,405.2 L1204.4,411.7"/>
<path d="M1270.8,284.7 L1267.0,289.3 L1259.6,294.0 L1259.6,298.7 L1248.4,304.3 L1252.1,309.9 L1261.4,313.6 L1267.0,316.4 L1259.6,320.2 L1262.4,328.6 L1265.2,337.9 L1274.5,342.6 L1277.3,347.3 L1270.8,353.8 L1259.6,356.6 L1244.6,358.5 L1229.7,354.7 L1226.9,352.9"/>
<path d="M1259.6,356.6 L1250.2,364.1 L1243.7,372.5 L1252.1,376.2 L1265.2,379.9"/>
<path d="M1228.7,353.8 L1227.8,364.1 L1226.9,371.5 L1233.4,377.1 L1265.2,379.9"/>
<path d="M1213.8,377.1 L1225.9,376.8 L1233.4,377.5 L1244.6,381.8 L1259.6,388.4 L1270.8,397.7 L1277.3,408.9 L1274.5,416.4 L1268.0,424.8 L1270.8,429.4 L1282.0,435.1 L1291.3,437.9 L1295.1,434.1 L1299.7,414.5 L1296.0,405.2 L1300.7,399.6 L1313.7,394.0 L1324.9,387.4 L1326.8,384.6 L1324.0,380.9 L1324.0,373.4 L1330.5,373.4 L1336.2,367.8 L1334.3,352.9 L1336.2,339.8 L1343.6,326.7 L1347.4,321.1 L1354.8,318.9 L1356.7,320.2"/>
<path d="M1324.0,373.4 L1332.4,376.2 L1345.5,376.2 L1347.4,369.7 L1356.7,365.0 L1369.8,360.3 L1381.0,359.4 L1384.7,354.7 L1391.3,354.7 L1382.9,349.1 L1381.0,334.2 L1378.2,324.8 L1382.9,315.5 L1392.2,309.0 L1410.9,309.9 L1427.7,311.8 L1446.4,308.0 L1466.9,304.3 L1485.6,306.2 L1504.3,307.6 L1520.0,308.0 L1504.8,306.9 L1517.3,307.6 L1529.7,313.8 L1542.1,322.5 L1553.3,326.2 L1569.4,325.0 L1591.8,323.7 L1601.7,328.7 L1609.2,334.9 L1617.9,339.9 L1620.3,346.6 L1634.0,347.3 L1641.5,356.0 L1648.9,361.0"/>
<path d="M1391.3,354.7 L1399.7,364.1 L1407.1,373.4 L1417.4,384.6 L1418.3,390.2 L1411.8,394.0 L1415.5,402.4 L1416.5,396.8 L1424.9,394.0 L1433.3,379.0 L1428.6,373.4 L1442.6,379.0 L1448.2,371.5 L1461.3,366.9 L1476.3,365.0 L1483.7,367.8 L1493.1,364.4 L1504.3,367.8 L1520.0,371.5 L1493.7,364.0 L1509.8,369.7 L1517.3,374.7 L1544.6,367.2 L1550.8,363.5 L1548.3,353.5 L1554.5,345.6 L1564.5,352.3 L1591.8,353.5 L1619.1,357.3 L1639.0,361.5 L1648.9,362.2 L1678.7,353.5 L1703.5,346.1 L1723.4,343.6 L1753.2,339.9 L1774.3,334.9 L1778.1,330.0 L1760.7,326.2 L1743.3,320.0 L1725.9,313.8 L1713.5,307.6 L1714.7,301.4 L1730.9,301.4 L1737.1,291.5 L1738.3,281.5 L1743.3,271.6 L1742.0,260.4 L1733.4,256.7 L1716.0,255.4 L1706.0,246.7 L1697.3,243.0 L1686.2,236.8 L1663.8,234.3 L1651.4,229.4 L1655.1,224.4 L1650.1,219.4 L1645.2,212.0 L1626.5,204.5 L1609.2,195.8 L1604.2,190.9 L1605.4,182.2 L1584.3,177.2 L1565.7,172.2"/>
<path d="M1333.3,381.8 L1336.2,392.1 L1340.8,405.2 L1347.4,408.9 L1346.4,414.5 L1341.8,427.6 L1338.0,438.8 L1339.9,450.0 L1343.6,456.5 L1351.1,464.9 L1358.6,472.4 L1369.8,478.0 L1379.1,485.5 L1387.5,493.0 L1384.7,504.2 L1381.9,520.1 L1379.8,524.3 L1369.3,525.9 L1360.0,527.8"/>
<path d="M1343.6,455.6 L1373.5,450.9 L1407.1,449.1 L1438.9,441.6 L1446.4,446.3 L1468.8,455.6 L1483.7,470.5 L1493.1,485.5 L1496.8,496.7 L1495.9,520.1 L1496.2,534.8 L1486.9,560.4 L1478.8,579.0 L1474.1,591.2 L1457.8,589.5 L1439.2,583.7"/>
<path d="M1407.1,449.1 L1403.4,459.3 L1405.3,468.7 L1409.9,474.3"/>
<path d="M1340.8,412.6 L1345.5,422.0 L1338.0,431.3 L1334.3,442.5 L1330.5,449.1 L1328.7,459.3 L1332.4,466.8 L1345.5,475.2"/>
<path d="M1339.0,411.7 L1346.4,413.0"/>
<path d="M1273.6,454.7 L1278.2,468.7 L1282.0,481.8 L1282.9,487.4 L1287.6,494.8"/>
<path d="M1360.0,473.1 L1369.3,476.6 L1378.6,484.7 L1387.5,492.9 L1383.3,506.9 L1379.8,524.3"/>
<path d="M1498.6,530.6 L1509.0,511.5 L1515.6,504.1 L1523.0,502.7 L1523.0,492.9 L1525.8,487.1 L1537.0,488.2 L1551.0,491.7"/>
<path d="M1523.0,502.7 L1537.0,504.1 L1546.3,511.5 L1559.1,519.7 L1560.7,527.8 L1557.5,544.1 L1564.9,555.8 L1578.4,570.9 L1574.3,588.4 L1567.3,604.7 L1560.3,619.8"/>
<path d="M1648.8,477.7 L1645.3,511.5 L1642.3,532.5 L1648.8,539.5 L1649.9,548.8 L1646.4,560.4 L1640.6,572.1 L1646.4,583.7 L1659.3,591.2"/>
<path d="M1640.6,572.1 L1639.5,565.1 L1632.5,564.6 L1629.0,561.6"/>
<path d="M1646.4,583.7 L1634.8,588.4 L1619.7,594.2 L1615.0,610.5 L1609.2,628.0 L1599.9,629.8 L1597.5,634.9 L1599.4,643.1 L1609.2,651.2 L1623.2,665.2 L1637.1,680.3 L1653.4,679.7 L1672.1,678.7 L1683.7,685.7"/>
<path d="M1670.9,531.3 L1668.6,541.8 L1674.4,551.1 L1679.0,567.4 L1690.7,574.4 L1702.3,581.4 L1709.3,588.4 L1720.0,595.3 L1725.2,600.0 L1750.5,612.1 L1769.6,621.8 L1774.7,622.2 L1796.9,634.3 L1813.0,646.4 L1827.2,659.5 L1833.2,661.6 L1841.3,664.6 L1853.4,665.0 L1861.5,664.6 L1871.6,660.6 L1881.7,654.5 L1897.8,640.4 L1911.9,624.2 L1930.1,600.0 L1934.5,585.1 L1938.3,549.1 L1937.8,521.7 L1928.3,504.3 L1908.4,491.9 L1891.1,484.5"/>
<path d="M1733.3,488.2 L1727.1,474.5 L1734.5,464.6 L1758.1,458.4 L1759.4,448.4 L1766.8,453.4 L1789.2,457.6 L1822.7,452.2 L1848.8,460.9 L1871.2,472.0 L1891.1,484.5 L1915.9,485.7 L1935.8,467.1 L1958.1,470.8"/>
<path d="M1821.0,431.1 L1826.0,441.0 L1822.7,452.2"/>
<path d="M1891.1,484.5 L1886.1,494.4 L1858.8,484.5"/>
<path d="M1891.1,480.7 L1907.2,474.5"/>
<path d="M1888.6,452.2 L1898.5,454.2 L1918.4,448.4 L1935.8,444.7"/>
<path d="M1857.5,499.4 L1868.7,516.8 L1874.9,541.6 L1893.5,554.0 L1899.8,564.0 L1897.3,578.9 L1888.6,596.3 L1873.7,616.1 L1858.8,633.5 L1857.5,644.7"/>
<path d="M1856.3,549.1 L1855.0,573.9 L1848.8,648.4"/>
<path d="M1855.0,561.5 L1886.1,566.5 L1888.6,576.4"/>
<path d="M1855.0,571.4 L1933.3,584.3"/>
<path d="M1748.2,585.1 L1754.4,596.3 L1757.4,606.2"/>
<path d="M1660.0,678.8 L1672.4,679.5 L1683.6,685.7"/>
<path d="M1700.0,659.5 L1760.6,680.7 L1834.2,705.0 L1857.4,715.1 L1934.2,767.5"/>
<path d="M1834.2,702.9 L1841.3,707.0 L1861.5,707.0 L1897.8,703.4 L1911.9,700.9 L1914.0,706.0 L1922.0,710.6 L1928.1,713.0"/>
<path d="M1851.4,600.0 L1849.4,624.2 L1848.4,640.4 L1847.4,656.5"/>
<path d="M1884.7,600.0 L1877.6,612.1 L1861.5,628.3 L1857.9,636.3 L1858.5,644.4"/>
<path d="M1848.4,640.4 L1858.5,644.8 L1871.6,651.5 L1881.7,657.5 L1887.7,674.7 L1893.8,688.8 L1897.4,702.9"/>
<path d="M1848.4,647.4 L1837.3,652.9 L1841.3,658.5 L1849.4,664.6"/>
<path d="M1861.5,664.6 L1861.5,669.6 L1867.5,668.6 L1875.6,664.6"/>
<path d="M1858.5,670.6 L1857.4,680.7 L1855.0,692.9"/>
<path d="M1893.8,687.8 L1901.9,686.8 L1914.0,685.8 L1918.4,682.8"/>
<path d="M1857.4,716.1 L1849.4,721.1 L1843.3,729.2 L1829.2,745.3 L1813.0,759.5 L1796.9,771.6 L1770.6,783.7 L1741.4,790.8 L1715.1,780.7"/>
<path d="M1843.3,729.2 L1845.3,735.2 L1849.0,736.3"/>
<path d="M1934.2,767.5 L1924.1,771.6 L1922.0,778.6 L1928.1,778.0 L1927.7,780.3 L1921.0,781.7"/>
<path d="M1922.0,778.6 L1914.0,778.6 L1911.9,784.7 L1901.9,783.7 L1888.7,781.3 L1882.7,789.7 L1886.7,793.8 L1899.8,797.4 L1917.0,799.8 L1922.0,788.7 L1931.1,789.7 L1935.2,784.7"/>
<path d="M1891.8,785.7 L1887.7,794.2"/>
<path d="M1896.8,786.7 L1893.8,795.4"/>
<path d="M1901.9,787.7 L1899.8,796.8"/>
<path d="M1909.9,788.7 L1905.9,797.8"/>
<path d="M1903.9,791.8 L1920.0,794.8"/>
<path d="M1911.9,784.7 L1909.9,788.7"/>
<path d="M1931.1,789.7 L1922.0,801.9 L1909.9,818.0 L1899.8,832.1 L1893.8,844.2 L1892.8,860.0 L1895.0,842.0 L1890.0,882.0 L1860.0,947.0 L1820.0,1012.0 L1780.0,1062.0 L1750.0,1097.0 L1730.0,1114.5 L1705.0,1112.0 L1695.0,1114.5 L1675.0,1113.0 L1644.0,1124.5"/>
<path d="M1934.2,767.5 L1930.1,761.5 L1933.1,758.5"/>
<path d="M1487.0,830.0 L1468.0,839.5 L1465.2,846.3 L1469.3,853.1 L1468.0,846.3 L1478.8,843.0 L1514.1,840.9 L1516.3,844.9 L1510.1,862.6 L1504.6,870.7 L1487.0,878.4 L1489.7,888.4 L1506.0,903.3 L1508.7,912.9 L1520.9,923.7 L1523.7,933.2 L1529.1,937.3 L1530.4,946.8 L1541.3,960.4 L1557.1,971.8 L1556.3,979.4 L1550.8,987.6 L1554.9,998.4 L1552.2,1017.4 L1544.0,1031.0 L1526.4,1047.3 L1529.1,1069.1 L1537.2,1082.6 L1533.2,1093.5 L1516.9,1097.6 L1510.1,1104.4 L1497.8,1109.8 L1484.3,1112.5 L1451.7,1082.6 L1419.1,1054.9 L1410.9,1058.2 L1400.0,1069.6 L1370.2,1075.9 L1343.0,1080.5 L1321.3,1082.6"/>
<path d="M1462.5,733.5 L1477.4,746.8 L1491.8,757.3 L1505.8,766.8 L1519.8,774.9 L1533.8,782.8 L1547.7,791.1 L1561.0,799.2 L1557.5,802.7 L1536.6,808.3 L1498.8,824.4 L1469.5,839.8 L1465.3,844.0 L1466.7,851.0 L1469.5,853.8"/>
<path d="M1462.5,857.2 L1459.8,851.7 L1446.2,847.7 L1440.8,849.0 L1419.1,862.6 L1398.7,870.7 L1374.2,880.3 L1369.6,878.4"/>
<path d="M1398.7,870.7 L1399.5,889.8 L1386.5,911.5 L1387.0,918.3 L1313.1,1003.9"/>
<path d="M1342.5,875.6 L1348.4,887.0 L1367.4,902.0 L1386.5,911.5"/>
<path d="M1180.0,995.7 L1218.0,995.2 L1269.6,1003.9 L1294.1,984.8 L1299.5,984.8 L1310.4,993.0 L1313.1,1014.7 L1319.9,1022.9 L1326.7,1031.0 L1326.2,1036.5 L1307.7,1051.4 L1321.3,1066.3 L1322.6,1074.5 L1320.7,1082.6 L1310.4,1083.2 L1299.5,1077.2 L1295.5,1073.1 L1294.1,1074.5 L1300.9,1078.6"/>
<path d="M1313.1,1022.9 L1319.9,1022.9"/>
<path d="M1299.5,988.9 L1292.7,993.0 L1291.4,999.8 L1287.3,1003.9 L1291.4,1009.3 L1294.1,1014.7 L1299.5,1017.4 L1306.3,1014.7 L1300.9,1010.7 L1299.5,1003.9 L1298.2,995.7 L1299.5,988.9"/>
<path d="M1307.7,1039.2 L1296.8,1047.3 L1291.4,1055.5 L1288.7,1066.3 L1277.8,1075.9 L1258.8,1077.8 L1269.6,1069.1 L1283.2,1058.2 L1294.1,1044.6"/>
<path d="M1644.0,1125.6 L1658.1,1119.3 L1677.1,1111.2 L1688.0,1116.6 L1700.0,1113.9"/>
<path d="M1456.3,734.9 L1443.1,748.6 L1433.9,759.2 L1435.2,767.1 L1448.4,780.3 L1461.6,792.2 L1468.2,795.6"/>
<path d="M1263.6,693.2 L1287.3,711.7 L1311.1,715.6 L1333.5,735.4"/>
<path d="M1342.8,875.4 L1350.7,888.6 L1366.5,901.8 L1385.0,912.3"/>
<path d="M1059.0,819.9 L1077.5,825.2"/>
<path d="M1076.2,830.5 L1090.7,835.8 L1102.6,809.4"/>
<path d="M1092.0,784.3 L1101.2,785.1 L1101.2,792.2 L1093.3,792.2"/>
<path d="M1090.7,835.8 L1097.3,846.3 L1105.2,859.5 L1108.4,870.1 L1107.8,885.9 L1107.8,917.6 L1104.7,944.0 L1097.3,970.4 L1086.7,991.5 L1080.1,1007.3 L1084.1,1020.0"/>
<path d="M1107.8,885.9 L1118.4,888.6 L1125.0,896.5 L1127.6,907.0 L1134.2,915.0 L1144.8,917.6 L1160.6,913.6 L1171.2,918.9 L1175.2,928.2 L1168.6,941.4 L1152.7,951.9 L1154.0,957.2 L1163.3,959.8 L1165.9,970.4 L1164.6,981.0 L1171.2,991.5 L1179.1,996.8"/>
<path d="M1179.1,996.8 L1171.2,988.9 L1155.4,970.4 L1144.8,965.1 L1129.0,963.8 L1118.4,971.7 L1115.8,983.6 L1110.5,996.8 L1105.2,1020.0"/>
<path d="M1179.1,996.8 L1197.6,995.5 L1218.7,994.1 L1250.4,999.4 L1268.9,1002.1"/>
<path d="M775.0,1130.5 L800.0,1114.5 L835.0,1097.0 L860.0,1077.0 L880.0,1052.0 L905.0,1022.0 L930.0,987.0 L960.0,957.0 L960.0,954.6 L986.4,928.2 L1026.0,885.9 L1048.4,864.8 L1076.2,831.8 L1092.0,796.2 L1102.6,764.5 L1107.8,748.6 L1118.4,722.2 L1139.5,690.6 L1150.1,680.0 L1140.0,692.0 L1170.0,657.0 L1210.0,632.0 L1250.0,617.0 L1300.0,602.0 L1350.0,589.5 L1360.0,584.9 L1383.3,582.5 L1406.6,581.8 L1429.9,583.7 L1457.8,590.7 L1499.7,602.3 L1560.3,619.8 L1599.9,631.4 L1662.7,648.9 L1720.0,665.7"/>
<path d="M1020.2,864.8 L1039.2,841.0 L1057.7,823.9 L1065.6,804.1 L1068.2,785.6 L1076.2,767.1 L1092.0,740.7 L1105.2,719.6 L1118.4,701.1 L1131.6,685.3 L1158.8,668.8 L1178.6,651.4 L1198.5,639.0 L1220.0,624.5 L1250.0,612.0 L1300.0,596.5 L1350.0,583.5 L1360.0,577.9 L1378.6,575.6 L1394.9,574.9 L1401.9,579.0 L1403.1,584.9 L1398.4,593.0 L1383.3,602.3 L1377.5,611.6 L1378.6,623.3 L1387.9,641.9 L1401.9,667.5 L1418.2,686.2 L1436.9,706.0 L1460.1,729.3 L1461.6,732.8 L1477.4,746.0"/>
<path d="M470.0,359.0 L500.0,372.5 L530.0,378.5 L560.0,379.0 L585.0,387.5 L610.0,402.5 L635.0,417.5 L660.0,421.0 L685.0,437.5 L720.0,467.5 L750.0,475.0 L775.0,482.5 L800.0,497.5 L825.0,507.5 L860.0,517.5 L900.0,530.0 L930.0,542.5 L955.0,555.0 L975.0,572.5 L990.0,585.0 L974.9,571.9 L989.8,585.6 L1004.7,595.5 L1013.4,600.5 L1032.0,598.8 L1067.3,595.5 L1089.2,589.3 L1101.6,589.3"/>
<path d="M1013.4,600.5 L1019.6,614.2 L1015.9,634.0 L1018.4,653.9 L1027.1,671.3 L1042.0,686.2 L1059.4,699.9 L1074.3,701.1 L1094.2,706.1 L1111.6,713.5"/>
<path d="M1067.3,595.5 L1084.2,606.7 L1109.1,621.6 L1119.0,626.6"/>
<path d="M1067.3,595.5 L1073.0,584.3 L1079.3,573.2"/>
<path d="M1032.0,598.8 L1035.8,574.4 L1040.7,547.1 L1044.5,529.7"/>
<path d="M1020.9,540.9 L1034.5,543.4 L1040.7,547.1"/>
<path d="M1084.2,480.0 L1071.8,485.0 L1059.4,497.4 L1049.4,512.3 L1044.5,529.7 L1045.7,539.6 L1054.4,562.0 L1061.9,581.9 L1067.3,595.5"/>
<path d="M1011.0,335.0 L1035.0,339.0 L1047.5,345.0 L1052.5,365.0 L1060.0,380.0 L1062.5,400.0 L1059.0,425.0 L1070.0,450.0 L1085.0,480.0 L1084.2,480.0 L1094.2,489.9 L1106.6,509.8 L1114.0,516.0 L1128.9,517.3 L1138.9,519.8 L1146.3,526.0"/>
<path d="M1168.7,480.0 L1148.8,489.9 L1133.9,502.4 L1127.7,512.3 L1131.4,517.3"/>
<path d="M450.0,782.0 L490.0,792.0 L550.0,814.5 L610.0,824.5 L670.0,830.5 L720.0,824.5 L800.0,804.5 L925.0,772.0 L940.0,762.0 L955.0,737.0 L970.0,722.0 L980.0,719.5 L960.0,732.2 L967.5,723.5 L979.9,720.5 L1009.7,721.5 L1034.5,721.0 L1044.5,713.5 L1059.4,699.9 L1076.8,683.7 L1109.1,648.9 L1119.0,629.1 L1128.9,619.1"/>
<path d="M1054.4,708.6 L1064.3,718.5 L1068.8,729.7"/>
<path d="M1060.6,714.8 L1055.7,730.9 L1051.9,750.8 L1058.1,752.8"/>
<path d="M1074.3,701.1 L1081.7,718.5 L1094.2,735.9 L1106.6,748.3"/>
<path d="M1111.6,713.5 L1106.6,748.3 L1099.1,778.1 L1097.9,800.0"/>
<path d="M890.0,1039.5 L897.5,1052.0 L900.0,1082.0 L907.5,1102.0 L914.0,1112.0"/>
</g>
<path fill="none" stroke="#a963c8" stroke-width="0.85" d="M1109.1,563.0L1174.3,512.0M1107.3,578.3L1202.8,503.7M1109.2,590.4L1230.2,495.8M1110.4,601.7L1262.7,482.8M1109.4,616.0L1277.7,484.5M1107.1,630.6L1290.5,487.3M1108.3,643.8L1295.5,497.5M1110.6,654.6L1336.6,478.0M1120.7,661.7L1347.6,484.3M1134.5,663.7L1356.7,490.1M1194.9,629.9L1309.3,540.5M1339.5,516.9L1366.0,496.2M1233.7,611.4L1316.0,547.2M1353.8,517.6L1374.6,501.4M1275.5,592.7L1323.7,555.1M1318.3,573.6L1332.5,562.5M1108.9,643.3L1114.8,650.9M1115.4,651.6L1121.3,659.2M1108.6,618.4L1113.8,625.1M1114.3,625.8L1120.2,633.3M1120.8,634.0L1126.7,641.6M1133.7,650.6L1139.6,658.1M1108.9,593.1L1113.3,598.7M1113.9,599.4L1119.8,607.0M1120.4,607.7L1126.3,615.3M1126.8,616.0L1132.7,623.6M1133.3,624.3L1139.2,631.8M1139.8,632.5L1145.7,640.1M1146.2,640.8L1152.1,648.4M1152.7,649.1L1157.9,655.7M1108.8,563.5L1114.7,571.1M1115.2,571.8L1121.1,579.3M1121.7,580.0L1127.6,587.6M1128.1,588.3L1134.1,595.9M1134.6,596.6L1140.5,604.2M1141.1,604.9L1147.0,612.4M1147.5,613.1L1153.4,620.7M1160.5,629.7L1166.4,637.3M1166.9,638.0L1172.1,644.6M1124.3,551.4L1130.2,558.9M1130.8,559.6L1136.7,567.2M1137.2,567.9L1143.1,575.5M1143.7,576.2L1149.6,583.7M1150.1,584.5L1156.1,592.0M1156.6,592.7L1162.5,600.3M1169.5,609.3L1175.5,616.8M1176.0,617.5L1181.9,625.1M1182.5,625.8L1188.4,633.4M1136.0,542.2L1141.9,549.8M1142.5,550.5L1148.4,558.0M1148.9,558.8L1154.8,566.3M1155.4,567.0L1161.3,574.6M1161.9,575.3L1167.8,582.9M1168.3,583.6L1174.2,591.1M1181.2,600.1L1187.2,607.7M1187.7,608.4L1193.6,616.0M1194.2,616.7L1200.1,624.2M1145.6,524.5L1150.0,530.1M1150.5,530.8L1156.5,538.4M1157.0,539.1L1162.9,546.7M1163.5,547.4L1169.4,555.0M1169.9,555.7L1175.9,563.2M1176.4,563.9L1182.3,571.5M1182.9,572.2L1188.8,579.8M1189.3,580.5L1195.2,588.0M1195.8,588.8L1201.7,596.3M1208.7,605.3L1214.6,612.9M1164.5,520.0L1170.4,527.5M1170.9,528.2L1176.8,535.8M1177.4,536.5L1183.3,544.1M1183.9,544.8L1189.8,552.3M1196.8,561.3L1202.7,568.9M1203.3,569.6L1209.2,577.2M1209.7,577.9L1215.6,585.4M1216.2,586.2L1222.1,593.7M1222.7,594.4L1228.6,602.0M1229.1,602.7L1235.0,610.3M1177.7,511.2L1182.8,517.8M1183.4,518.5L1189.3,526.1M1189.9,526.8L1195.8,534.3M1196.3,535.1L1202.2,542.6M1202.8,543.3L1208.7,550.9M1209.2,551.6L1215.2,559.2M1222.2,568.2L1228.1,575.7M1228.6,576.4L1234.6,584.0M1235.1,584.7L1241.0,592.3M1241.6,593.0L1247.5,600.5M1195.3,509.2L1201.2,516.7M1208.3,525.7L1214.2,533.3M1214.7,534.0L1220.6,541.6M1221.2,542.3L1227.1,549.8M1227.6,550.6L1233.6,558.1M1234.1,558.8L1240.0,566.4M1240.6,567.1L1246.5,574.7M1247.0,575.4L1252.9,582.9M1253.5,583.6L1259.4,591.2M1260.0,591.9L1264.4,597.6M1215.2,507.0L1221.1,514.5M1228.1,523.5L1234.0,531.1M1234.6,531.8L1240.5,539.4M1241.1,540.1L1247.0,547.6M1247.5,548.3L1253.4,555.9M1254.0,556.6L1259.9,564.2M1260.5,564.9L1266.4,572.5M1266.9,573.2L1272.8,580.7M1273.4,581.4L1279.3,589.0M1243.0,511.9L1248.9,519.5M1249.5,520.2L1255.4,527.7M1256.0,528.4L1261.9,536.0M1262.4,536.7L1268.3,544.3M1268.9,545.0L1274.8,552.6M1281.8,561.5L1287.7,569.1M1288.3,569.8L1294.2,577.4M1248.0,494.7L1253.9,502.3M1254.4,503.0L1260.4,510.5M1260.9,511.2L1266.8,518.8M1267.4,519.5L1273.3,527.1M1273.8,527.8L1279.7,535.4M1280.3,536.1L1286.2,543.6M1286.8,544.3L1292.7,551.9M1293.2,552.6L1299.1,560.2M1299.7,560.9L1305.6,568.5M1262.3,483.5L1268.2,491.1M1275.2,500.1L1281.1,507.6M1281.7,508.4L1287.6,515.9M1288.1,516.6L1294.0,524.2M1294.6,524.9L1300.5,532.5M1301.1,533.2L1307.0,540.7M1307.5,541.4L1313.4,549.0M1287.9,490.1L1293.8,497.7M1300.9,506.7L1306.8,514.2M1307.3,514.9L1313.2,522.5M1310.8,488.6L1315.3,494.3M1315.8,495.0L1321.7,502.6M1322.3,503.3L1328.2,510.8M1324.8,477.7L1329.3,483.3M1329.8,484.1L1335.7,491.6M1336.3,492.3L1342.2,499.9M1342.7,500.6L1348.7,508.2M1349.2,508.9L1355.1,516.4M1348.0,484.7L1353.2,491.3M1360.2,500.3L1366.1,507.8M1341.6,502.2L1350.9,491.2M1346.3,506.2L1357.1,493.4M1351.1,510.2L1362.7,496.4M1355.8,514.2L1369.0,498.6M1360.6,518.2L1374.5,501.6M1344.0,487.0L1377.0,502.0M1377.0,502.0L1363.0,521.0M1363.0,521.0L1340.0,501.0M1340.0,501.0L1344.0,487.0M1182.1,664.6L1246.4,645.0M1195.4,667.0L1255.1,648.8M1207.6,669.8L1256.9,654.7M1219.7,672.6L1257.6,661.0M1230.7,675.7L1259.4,666.9M1186.7,659.6L1188.5,665.3M1207.8,653.1L1213.5,671.5M1228.5,646.8L1237.9,677.8M1246.6,645.1L1255.0,672.6M1220.8,676.7L1263.5,695.7M1258.1,647.2L1266.2,644.0M1266.2,644.0L1279.5,651.8M1279.5,651.8L1290.3,675.9M1290.3,675.9L1286.8,685.8M1286.8,685.8L1278.5,689.7M1278.5,689.7L1269.7,685.3M1269.7,685.3L1263.2,669.1M1263.2,669.1L1258.1,647.2M1260.1,649.9L1267.2,647.2M1267.2,647.2L1278.5,655.1M1278.5,655.1L1287.2,674.6M1287.2,674.6L1284.8,683.1M1284.8,683.1L1277.8,686.4M1277.8,686.4L1270.5,682.0M1270.5,682.0L1266.6,669.0M1266.6,669.0L1260.1,649.9M1178.3,670.1L1190.9,668.7M1190.9,668.7L1212.1,682.4M1212.1,682.4L1207.5,695.0M1207.5,695.0L1197.9,706.2M1197.9,706.2L1182.7,701.5M1182.7,701.5L1173.0,699.2M1173.0,699.2L1175.7,675.6M1175.7,675.6L1178.3,670.1M1180.1,672.8L1190.7,671.9M1190.7,671.9L1209.0,683.1M1209.0,683.1L1204.6,693.7M1204.6,693.7L1196.6,703.2M1196.6,703.2L1184.2,698.6M1184.2,698.6L1175.6,697.3M1175.6,697.3L1178.2,677.7M1178.2,677.7L1180.1,672.8M1181.8,675.5L1190.5,675.1M1190.5,675.1L1205.9,683.8M1205.9,683.8L1201.6,692.4M1201.6,692.4L1195.3,700.3M1195.3,700.3L1185.6,695.8M1185.6,695.8L1178.2,695.5M1178.2,695.5L1180.6,679.7M1180.6,679.7L1181.8,675.5M1204.6,700.3L1208.0,695.4M1207.1,707.9L1214.7,697.1M1213.7,709.7L1220.6,699.8M1182.4,722.6L1189.8,708.9M1186.6,727.6L1196.2,709.6M1191.9,730.4L1200.9,713.4M1198.3,731.1L1205.1,718.4M1186.3,708.6L1197.3,708.6M1197.3,708.6L1207.6,719.6M1207.6,719.6L1200.8,732.5M1200.8,732.5L1189.5,730.9M1189.5,730.9L1178.5,719.6M1178.5,719.6L1186.3,708.6M1190.0,742.3L1200.9,737.3M1186.0,750.6L1207.7,740.5M1184.1,757.9L1212.4,744.7M1183.3,764.7L1218.1,748.5M1182.5,771.5L1221.6,753.2M1182.7,777.8L1224.1,758.5M1186.3,782.5L1225.4,764.3M1190.9,786.7L1226.8,770.0M1195.5,791.0L1228.1,775.8M1187.8,747.0L1207.0,788.3M1199.5,737.6L1220.8,783.2M1191.0,738.5L1203.6,736.9M1203.6,736.9L1217.8,747.9M1217.8,747.9L1222.5,752.6M1222.5,752.6L1230.4,780.9M1230.4,780.9L1197.3,793.2M1197.3,793.2L1187.9,785.7M1187.9,785.7L1181.6,776.2M1181.6,776.2L1183.2,757.3M1183.2,757.3L1191.0,738.5M1228.5,755.1L1254.1,744.7M1230.6,760.3L1256.2,749.9M1231.6,765.9L1244.9,760.5M1227.2,751.0L1252.4,741.6M1252.4,741.6L1256.8,749.5M1256.8,749.5L1250.8,757.3M1250.8,757.3L1231.9,768.0M1231.9,768.0L1227.2,751.0"/>
<path fill="#5fa582" stroke="#0c1813" stroke-width="0.75" d="M1141.4,528.2l1.4,-1.9l1.2,0.9l-1.4,1.9zM1143.4,525.9l2.1,-1.2l1,1.8l-2.1,1.2zM1148.2,522.1l1.4,-1.5l1.6,1.5l-1.4,1.5zM1153.6,517.5l1.4,-1l1.2,1.6l-1.4,1zM1118.3,551.4l1.5,-1l1.2,1.8l-1.6,1zM1120.1,550.5l1.4,-1.6l1.2,1l-1.4,1.7zM1122.3,547.7l1.6,-0.8l0.7,1.4l-1.6,0.8zM1124.4,546.8l1.1,-1.5l1.8,1.2l-1.1,1.5zM1128.7,542.3l1.9,-1.3l1.2,1.8l-2,1.3zM1133.9,539.6l1.8,-1.8l1.4,1.4l-1.8,1.8zM1139.4,533.9l1.7,-1.5l1.4,1.5l-1.7,1.5zM1152.1,525.1l1.1,-1.6l1.8,1.2l-1.1,1.6zM1154.8,521.6l1.8,-1.1l1.2,2l-1.8,1.1zM1156.8,521.3l1.2,-1.5l1.7,1.3l-1.2,1.5zM1105.9,568.3l1.3,-1.4l1.2,1.1l-1.3,1.4zM1107.4,566.2l1.7,-1l0.9,1.5l-1.7,1zM1109.7,564.2l2.2,-1.1l1,2l-2.3,1.1zM1112.0,563.0l1.6,-0.7l0.6,1.4l-1.6,0.7zM1113.9,561.2l1.5,-1.1l1.1,1.5l-1.5,1.1zM1116.1,560.2l1.3,-1.6l1.6,1.3l-1.3,1.6zM1118.0,558.2l1.5,-1.9l1.8,1.4l-1.6,1.9zM1120.2,556.7l1.5,-0.8l0.7,1.4l-1.5,0.8zM1123.1,554.1l1.1,-1.3l1.2,1.1l-1.2,1.3zM1127.4,551.3l1.7,-1.4l1,1.2l-1.7,1.4zM1129.7,549.8l1.7,-1.1l1.1,1.6l-1.7,1.1zM1135.4,545.0l1.5,-1.4l1,1.2l-1.5,1.4zM1140.1,540.5l2.4,-0.9l0.6,1.6l-2.4,1zM1144.8,538.4l1.5,-2.1l1.8,1.3l-1.5,2.1zM1170.2,517.1l1.7,-1.4l1,1.3l-1.7,1.3zM1173.6,515.9l1.4,-1.7l1.3,1.1l-1.3,1.7zM1107.7,573.3l1.6,-1.9l1.2,1l-1.6,1.9zM1112.6,569.8l1.5,-2l1.6,1.2l-1.5,2zM1117.7,565.8l1.3,-1.5l1.7,1.4l-1.3,1.5zM1121.1,562.6l1.6,-1.9l1.3,1.1l-1.6,1.9zM1124.7,560.1l1.8,-0.8l0.9,2l-1.8,0.8zM1128.4,556.6l1.8,-1.2l1,1.4l-1.7,1.2zM1131.2,555.2l1.4,-1.1l1.4,1.6l-1.4,1.2zM1133.6,553.2l1.8,-1l1,1.8l-1.8,1zM1151.3,539.0l1.1,-1.3l1.5,1.3l-1.1,1.3zM1173.8,521.7l1.4,-2l1.4,1l-1.4,2zM1183.0,514.2l1.6,-1l1,1.6l-1.6,0.9zM1193.7,506.2l1.8,-1.7l1.4,1.6l-1.7,1.6zM1106.6,580.8l2.3,-1.1l1,2.1l-2.2,1.1zM1109.0,579.4l2.1,-0.9l0.7,1.8l-2.1,0.9zM1112.1,577.2l2,-1.2l0.9,1.5l-2,1.2zM1114.3,575.2l1.7,-0.9l0.8,1.6l-1.7,0.8zM1119.5,570.5l1.3,-1.4l1.7,1.5l-1.3,1.4zM1122.4,568.5l1.4,-1.3l1.4,1.5l-1.4,1.3zM1124.7,567.2l1.2,-1.6l1.4,1.1l-1.3,1.5zM1130.0,562.8l2.1,-1.2l0.9,1.6l-2.1,1.2zM1132.2,561.3l1.8,-1.4l1.2,1.6l-1.8,1.4zM1136.5,556.8l1.6,-0.7l0.8,1.7l-1.7,0.7zM1139.3,555.1l1.1,-1.4l1.8,1.4l-1,1.4zM1141.7,554.3l1.5,-1.8l1.4,1.2l-1.5,1.8zM1146.6,550.5l2,-1.5l1,1.3l-2,1.5zM1149.2,548.3l2,-1.1l0.9,1.6l-1.9,1.2zM1151.7,546.0l1.9,-1.1l1.1,1.9l-2,1.1zM1158.0,540.3l1.8,-1l0.9,1.6l-1.9,1zM1184.6,520.5l2.2,-1.2l1,1.8l-2.3,1.2zM1106.9,587.5l1.3,-1.5l1.2,1l-1.3,1.6zM1108.6,585.3l2,-0.9l0.6,1.4l-1.9,0.9zM1111.6,584.4l1,-1.4l1.6,1.2l-1,1.4zM1113.7,582.4l2.1,-0.9l0.7,1.4l-2.2,0.9zM1116.1,579.3l1.7,-0.7l0.7,1.7l-1.6,0.7zM1123.2,575.7l1.6,-1.3l1,1.2l-1.6,1.3zM1129.8,570.0l1.4,-1.5l1.4,1.3l-1.4,1.5zM1131.9,567.7l1.6,-1l0.9,1.6l-1.5,1zM1140.3,561.3l1.6,-0.8l1,2l-1.6,0.7zM1144.7,557.8l2.3,-1.1l0.8,1.7l-2.4,1.1zM1146.6,555.8l1.8,-1.1l1.1,1.8l-1.8,1.1zM1149.2,553.9l1.6,-1l1.2,1.8l-1.7,1zM1152.0,552.1l2.1,-0.9l0.7,1.4l-2.1,0.9zM1154.2,550.4l1.7,-1.7l1.5,1.5l-1.7,1.7zM1156.4,548.2l2.1,-1l0.7,1.5l-2.2,1zM1159.0,547.4l1.4,-1.8l1.5,1.2l-1.4,1.7zM1188.1,525.2l1.1,-1.4l1.2,0.9l-1.1,1.5zM1189.2,523.1l2.1,-1.4l0.9,1.5l-2.1,1.3zM1192.1,519.8l1.6,-0.9l1,2l-1.5,0.8zM1193.9,519.5l1.5,-1.4l1.2,1.2l-1.5,1.5zM1196.6,516.9l2,-0.9l0.8,1.9l-2,0.8zM1198.8,516.0l1.5,-1.6l1.2,1.2l-1.5,1.6zM1200.6,514.5l1.8,-1.7l1.3,1.3l-1.9,1.7zM1110.6,590.8l1.9,-1.3l1.2,1.9l-1.9,1.3zM1122.8,582.0l2,-0.8l0.7,1.6l-2.1,0.8zM1124.9,580.0l2.2,-1l0.7,1.5l-2.1,1zM1128.8,577.0l1.7,-1.4l1,1.2l-1.8,1.4zM1133.4,573.6l1.9,-1.7l1,1.1l-1.9,1.7zM1140.2,567.9l2.3,-1.1l0.9,1.9l-2.3,1.1zM1148.5,561.8l1.9,-1.7l1.1,1.3l-1.8,1.7zM1151.1,559.6l1.6,-1.7l1.3,1.2l-1.6,1.8zM1154.9,556.4l2.1,-1.4l1.3,1.8l-2.1,1.5zM1160.6,552.6l1.5,-1.5l1,1.1l-1.5,1.5zM1162.7,551.0l1.6,-1.1l1.2,1.7l-1.6,1.1zM1165.0,549.2l1.4,-1l1.1,1.6l-1.4,1zM1166.7,547.6l1.9,-0.9l0.8,1.7l-1.8,0.9zM1169.4,546.5l1.5,-1.6l1.1,1l-1.5,1.6zM1171.1,544.3l1.4,-1.1l0.9,1.2l-1.4,1zM1191.5,528.0l1.1,-1.5l1.4,1l-1.1,1.5zM1194.0,526.4l1.7,-1.6l1.6,1.6l-1.7,1.6zM1196.8,524.4l2.2,-1.1l1,2l-2.2,1zM1199.8,522.0l1.4,-1.1l1,1.2l-1.5,1.2zM1206.8,517.0l1.2,-1.3l1.6,1.5l-1.2,1.3zM1215.5,510.2l1.3,-1.1l1.5,1.7l-1.3,1.1zM1232.4,495.8l1.9,-0.8l0.8,2l-1.8,0.8zM1235.5,494.0l2.1,-1.1l0.8,1.5l-2.1,1.1zM1109.0,598.0l1.7,-1.8l1.1,1l-1.7,1.8zM1111.1,596.4l1.4,-1.1l1,1.3l-1.4,1.1zM1113.9,595.0l2,-1.5l0.9,1.2l-2,1.5zM1115.5,593.4l1.3,-1.4l1.7,1.5l-1.3,1.5zM1118.1,591.3l1.8,-0.9l0.9,1.8l-1.8,0.9zM1122.0,588.3l2.2,-1.3l1.1,1.9l-2.1,1.4zM1126.2,584.1l1.3,-1.1l1.2,1.4l-1.3,1.2zM1128.3,582.7l1.9,-1.5l1.3,1.7l-1.9,1.5zM1131.5,581.4l1.3,-1.4l1.2,1.1l-1.3,1.4zM1133.7,579.1l2.2,-0.9l0.7,1.9l-2.2,0.8zM1138.1,575.5l1.5,-0.9l0.8,1.4l-1.5,0.8zM1139.7,574.1l1.8,-0.8l0.7,1.6l-1.9,0.8zM1142.5,572.3l1.3,-1.1l1,1.2l-1.4,1.1zM1144.0,570.0l1.7,-0.9l0.9,1.8l-1.7,0.9zM1147.4,568.4l1.8,-0.7l0.7,1.6l-1.8,0.8zM1149.3,566.8l1.5,-1.4l1.3,1.4l-1.5,1.4zM1151.8,565.0l1.8,-1.5l1.2,1.6l-1.8,1.4zM1153.8,563.8l1.6,-1.5l1.4,1.6l-1.6,1.4zM1156.0,561.3l1.4,-2l1.5,1.1l-1.5,2zM1158.3,558.8l1.5,-0.9l1,1.6l-1.5,0.9zM1161.0,558.1l1.1,-1.3l1.6,1.4l-1.2,1.3zM1163.2,556.2l2.1,-1.5l1.2,1.8l-2.1,1.5zM1165.1,554.4l1.6,-1.3l1.2,1.4l-1.6,1.3zM1167.6,551.9l1.8,-1.1l1.1,1.7l-1.9,1.1zM1169.6,550.0l1.5,-0.9l1,1.7l-1.5,0.9zM1174.5,547.2l1.4,-1.2l1.1,1.3l-1.4,1.2zM1176.6,545.2l2.1,-1l0.7,1.4l-2.1,1.1zM1179.2,543.4l2.3,-0.9l0.8,2l-2.3,1zM1181.6,541.3l1.5,-1.3l1.4,1.7l-1.6,1.3zM1184.1,540.1l1.6,-1.7l1.4,1.3l-1.6,1.7zM1195.0,531.2l1.6,-1.2l1.2,1.5l-1.7,1.2zM1204.6,524.0l1.5,-1.3l1.1,1.4l-1.4,1.2zM1206.8,522.9l1.4,-2l1.8,1.2l-1.5,2.1zM1208.6,521.3l1.2,-1.6l1.8,1.3l-1.2,1.6zM1210.3,519.0l1.4,-1.9l1.8,1.4l-1.4,1.9zM1214.1,516.8l1.1,-1.4l1.3,1l-1.1,1.4zM1216.0,515.8l1.2,-1.5l1.2,1l-1.2,1.5zM1218.6,513.2l1.3,-1.5l1.4,1.2l-1.2,1.5zM1221.5,509.0l2.1,-1l0.9,1.9l-2.1,1.1zM1226.6,505.7l1.7,-1.6l1.2,1.3l-1.7,1.6zM1232.5,502.2l2.1,-1l0.7,1.4l-2.2,1zM1238.5,496.8l1.1,-1.5l1.5,1.1l-1.1,1.5zM1244.1,491.8l2.3,-1.2l0.9,1.6l-2.3,1.2zM1247.5,490.7l1.4,-1.9l1.3,0.9l-1.5,1.9zM1254.5,485.0l1.8,-0.9l0.9,1.5l-1.8,1zM1109.4,603.8l2.2,-1.1l0.9,1.8l-2.3,1zM1112.6,602.0l1.6,-0.8l0.9,2l-1.6,0.8zM1114.1,601.2l1.4,-1.8l1.5,1.3l-1.4,1.7zM1118.9,597.7l1.5,-2l1.3,1.1l-1.5,1.9zM1121.8,596.0l1.2,-1.5l1.4,1.1l-1.2,1.5zM1124.6,593.8l1.1,-1.3l1.5,1.3l-1.1,1.3zM1126.8,592.0l1.7,-1l0.8,1.4l-1.7,0.9zM1128.2,590.7l1.5,-1.6l1.4,1.1l-1.6,1.7zM1131.1,588.4l1.6,-1.8l1.6,1.5l-1.6,1.8zM1133.0,585.6l1.7,-0.8l0.6,1.4l-1.7,0.8zM1136.3,583.9l1.7,-0.7l0.8,1.9l-1.7,0.7zM1138.4,582.9l1.8,-1l0.8,1.3l-1.8,1.1zM1140.4,581.2l1.5,-1.7l1.3,1.1l-1.5,1.8zM1142.0,579.3l2.4,-1l0.9,2.1l-2.3,1zM1144.8,576.4l1.8,-1.1l0.9,1.4l-1.9,1.1zM1146.5,574.9l1.9,-1.6l1.5,1.7l-1.8,1.6zM1149.7,573.4l2,-0.8l0.6,1.7l-2,0.8zM1151.8,571.8l1.7,-1.4l1,1.2l-1.6,1.4zM1153.8,570.4l1.6,-1.7l1.4,1.2l-1.7,1.8zM1162.4,562.5l2.1,-1.1l0.9,1.7l-2.1,1.1zM1167.0,560.0l1.4,-1.5l1.6,1.6l-1.4,1.4zM1171.0,555.8l1.8,-0.9l1,1.9l-1.9,0.9zM1173.6,554.1l1.6,-0.9l0.8,1.5l-1.6,0.9zM1176.2,553.5l1.3,-1.6l1.6,1.3l-1.3,1.5zM1177.9,550.9l1.4,-1.4l1.3,1.4l-1.4,1.4zM1180.9,549.7l1.2,-1.7l1.5,1l-1.2,1.7zM1187.7,543.0l1.7,-0.9l0.8,1.5l-1.7,0.9zM1194.4,537.5l2,-0.8l0.8,2l-2,0.8zM1196.3,536.9l1.5,-1.9l1.7,1.3l-1.6,1.9zM1199.4,534.9l1.8,-1.6l1.1,1.2l-1.7,1.6zM1202.0,532.8l1.5,-1.3l1.3,1.6l-1.4,1.2zM1209.2,527.7l1.2,-1.2l1.3,1.3l-1.3,1.2zM1214.7,521.5l2.3,-0.9l0.8,2.1l-2.3,0.8zM1216.4,520.7l1.4,-1.1l1.4,1.7l-1.4,1.2zM1218.9,519.4l1.6,-2l1.8,1.4l-1.6,2zM1221.6,517.3l2,-1.7l1.5,1.7l-2,1.7zM1224.1,514.4l1.6,-0.9l0.8,1.6l-1.6,0.8zM1225.8,513.5l1.5,-1.7l1.4,1.2l-1.6,1.8zM1229.0,512.5l1.2,-1.4l1.2,1l-1.2,1.4zM1230.5,509.6l1.5,-0.9l1,1.7l-1.4,0.9zM1237.0,504.6l1.5,-1.3l1.2,1.4l-1.6,1.3zM1238.7,503.4l1.2,-1.4l1.4,1.1l-1.2,1.5zM1241.3,502.1l1.6,-1.7l1.4,1.2l-1.5,1.8zM1243.9,499.0l1.6,-0.7l0.7,1.6l-1.6,0.7zM1245.4,497.6l2,-1.6l1.4,1.7l-1.9,1.6zM1248.6,496.8l1.6,-1.6l1.3,1.2l-1.5,1.7zM1251.3,494.6l1.8,-1.7l1.4,1.6l-1.8,1.6zM1260.1,487.6l2.1,-1.4l1.1,1.6l-2.1,1.4zM1118.1,604.8l1.9,-0.9l0.7,1.5l-1.8,1zM1120.2,603.4l1.3,-1.3l1.6,1.6l-1.2,1.3zM1121.9,601.8l1.9,-0.9l0.9,2l-1.8,0.9zM1123.5,599.9l1.6,-2l1.5,1.1l-1.5,2zM1125.9,597.2l1.7,-0.8l0.9,1.9l-1.6,0.8zM1127.9,596.3l1.9,-0.8l0.8,1.8l-1.9,0.8zM1130.5,595.1l1.1,-1.4l1.3,1l-1.2,1.4zM1133.1,592.9l2.3,-1.2l1,1.9l-2.3,1.2zM1136.2,590.6l1.9,-1l0.7,1.4l-1.9,0.9zM1140.2,587.1l1.2,-1.8l1.8,1.3l-1.3,1.8zM1142.9,585.6l1.5,-1.1l1.1,1.6l-1.5,1.1zM1147.6,581.3l1.7,-1.5l1.2,1.4l-1.7,1.5zM1151.6,578.4l1.8,-1.4l1.2,1.6l-1.8,1.4zM1158.6,574.1l1.5,-2l1.4,1.1l-1.4,2zM1161.3,571.4l1.5,-1.2l1.3,1.6l-1.5,1.2zM1163.9,569.3l1.5,-1l0.8,1.4l-1.5,0.9zM1167.4,566.5l1.3,-1.8l1.7,1.3l-1.3,1.7zM1175.0,560.2l1.6,-1.2l1.2,1.6l-1.6,1.2zM1176.3,558.3l2,-0.9l0.8,1.9l-2,0.8zM1178.7,556.7l1.7,-1.2l1.1,1.6l-1.7,1.2zM1183.7,553.5l1.6,-1l1.2,1.9l-1.6,1zM1185.3,551.1l2.1,-1.4l1.1,1.8l-2.1,1.4zM1187.9,550.2l1.5,-1.5l1.3,1.3l-1.5,1.5zM1192.3,546.6l2,-0.9l0.7,1.5l-2.1,0.9zM1193.8,544.9l1.7,-1.1l1.1,1.6l-1.6,1.2zM1196.7,543.5l2.1,-1l0.8,1.4l-2.1,1.1zM1200.5,540.7l1.8,-1.1l0.9,1.4l-1.8,1.1zM1202.6,538.5l1.9,-1.1l0.9,1.6l-1.9,1.1zM1204.5,536.4l1.5,-1.3l1.5,1.5l-1.6,1.4zM1225.3,521.2l1.3,-1.3l1.6,1.5l-1.3,1.3zM1226.7,519.4l1.9,-1.3l1,1.5l-1.9,1.3zM1230.1,517.2l1.6,-1l1,1.7l-1.6,1zM1231.3,516.4l1.8,-1.5l1,1.2l-1.8,1.6zM1233.4,513.7l2,-0.9l0.8,1.8l-2,0.9zM1236.1,512.9l1.9,-1.6l1,1.2l-1.9,1.6zM1238.2,511.3l1.7,-1.7l1.4,1.4l-1.7,1.7zM1240.3,509.0l1.6,-0.9l0.8,1.4l-1.6,0.9zM1241.6,508.1l1.6,-1.9l1.5,1.2l-1.5,1.9zM1244.5,505.4l1.7,-1.4l1.4,1.7l-1.7,1.4zM1250.1,502.5l1.8,-1.6l1,1.1l-1.9,1.6zM1253.9,497.4l1.6,-1.2l1.4,1.7l-1.6,1.3zM1263.5,490.3l2,-1l0.9,1.7l-1.9,1zM1266.1,488.7l1.5,-2l1.8,1.4l-1.5,1.9zM1268.3,486.6l1.1,-1.4l1.7,1.4l-1.1,1.4zM1270.8,484.6l1.6,-0.8l0.8,1.8l-1.6,0.8zM1111.6,616.5l2.2,-1.1l0.7,1.5l-2.2,1.1zM1113.5,615.4l2.2,-0.9l0.6,1.4l-2.2,1zM1115.9,612.7l2.1,-1.2l1.1,1.9l-2,1.3zM1118.7,611.4l1.4,-1.4l1.2,1.2l-1.4,1.4zM1120.1,609.7l1.9,-1.7l1.3,1.3l-1.9,1.8zM1122.0,607.8l2,-1l0.8,1.6l-2,1zM1125.4,606.4l1.5,-1.1l1,1.2l-1.5,1.2zM1127.8,604.1l1.4,-0.9l1,1.5l-1.5,0.9zM1129.7,602.1l2.4,-0.9l0.7,1.8l-2.3,0.9zM1132.7,599.6l1.8,-0.7l0.5,1.5l-1.8,0.7zM1134.9,598.8l1.4,-1.9l1.7,1.2l-1.3,2zM1137.7,596.9l1.4,-1.8l1.5,1.1l-1.3,1.9zM1139.1,594.8l1.9,-1.3l0.9,1.3l-1.8,1.4zM1141.0,593.0l2.1,-0.8l0.7,1.6l-2.1,0.9zM1143.5,591.8l1.7,-1.2l0.9,1.2l-1.7,1.3zM1146.4,590.0l1.1,-1.4l1.2,1l-1.2,1.3zM1161.5,578.5l1.7,-1.7l1.2,1.3l-1.8,1.6zM1168.5,572.1l1.5,-1.3l1.1,1.2l-1.5,1.4zM1170.6,571.1l1.4,-1.4l1.4,1.4l-1.4,1.4zM1175.1,567.4l2.3,-0.9l0.5,1.4l-2.2,0.9zM1179.4,563.8l2,-1.1l1.1,1.9l-2,1.1zM1186.1,558.0l1.6,-1.4l1.1,1.2l-1.6,1.5zM1191.4,554.4l1.5,-1.4l1.2,1.4l-1.4,1.3zM1193.4,552.8l2.1,-1.5l1.2,1.8l-2,1.4zM1196.4,551.0l1.6,-1.1l0.9,1.3l-1.7,1.1zM1197.5,548.2l2.3,-0.9l0.8,2l-2.3,1zM1200.8,547.6l1.6,-1.3l1.2,1.6l-1.7,1.2zM1202.4,545.6l1.5,-1.6l1.7,1.5l-1.5,1.6zM1205.0,542.9l2.2,-1.4l1.2,1.8l-2.2,1.4zM1209.0,540.5l1.9,-1.7l1.1,1.2l-1.9,1.8zM1211.9,538.7l1.8,-1.2l1,1.5l-1.9,1.2zM1214.0,536.1l2,-1l0.9,1.8l-2,1.1zM1215.4,534.9l1.3,-1.2l1.5,1.6l-1.2,1.2zM1218.2,533.7l1.3,-1.2l1,1.2l-1.3,1.2zM1220.2,531.7l1.4,-1.6l1.7,1.4l-1.4,1.7zM1222.5,529.1l1.9,-1.3l1,1.5l-1.9,1.3zM1224.4,527.8l1.8,-1.7l1.5,1.5l-1.7,1.8zM1227.2,525.7l1.9,-1.2l1.2,1.9l-1.9,1.2zM1231.2,523.4l1.2,-1.6l1.5,1.1l-1.2,1.6zM1241.7,515.6l1.1,-1.4l1.2,1l-1.1,1.4zM1243.4,513.5l1.5,-1.9l1.7,1.4l-1.5,1.8zM1246.0,512.2l1.2,-1.4l1.6,1.4l-1.2,1.3zM1248.6,509.4l1.5,-1.6l1.2,1.2l-1.5,1.6zM1250.5,508.7l1.5,-1.7l1.5,1.3l-1.5,1.7zM1252.8,506.4l1.7,-0.7l0.8,1.9l-1.8,0.7zM1254.4,504.5l1.7,-0.8l1.1,2l-1.7,0.9zM1256.1,503.2l1.7,-1.8l1.6,1.4l-1.7,1.9zM1259.0,501.6l1.8,-1.3l1,1.3l-1.8,1.3zM1260.7,499.4l2,-1.3l1.1,1.7l-1.9,1.3zM1264.3,497.7l1.7,-0.7l0.6,1.5l-1.7,0.7zM1265.8,495.6l1.8,-0.9l0.7,1.3l-1.7,0.9zM1269.8,492.9l2.2,-1l0.8,1.6l-2.2,1.1zM1274.3,489.8l2.1,-1.1l1,1.7l-2.1,1.2zM1277.1,487.5l1.6,-1.1l0.9,1.4l-1.6,1.1zM1279.0,486.9l1.7,-1.8l1.3,1.1l-1.7,1.8zM1107.9,624.8l1.1,-1.3l1.7,1.4l-1.2,1.3zM1110.6,623.1l2.1,-1.2l1.1,1.8l-2.1,1.3zM1113.6,621.4l1.9,-1l0.8,1.5l-1.9,1.1zM1115.6,619.5l1.4,-1.8l1.2,1l-1.4,1.8zM1118.0,617.3l1.5,-1l1.2,1.8l-1.5,1zM1122.6,614.6l1.5,-1.9l1.4,1.1l-1.5,1.9zM1124.7,612.6l2.2,-1l0.7,1.5l-2.2,1zM1126.3,610.8l1.7,-0.9l0.9,1.7l-1.7,0.9zM1128.0,608.4l1.6,-0.8l1,2l-1.6,0.8zM1134.5,603.3l2.4,-0.9l0.7,1.7l-2.3,1zM1139.1,600.3l2.3,-0.9l0.6,1.6l-2.3,0.9zM1141.8,597.7l2.2,-1.1l1,1.9l-2.2,1.1zM1144.5,596.1l2.2,-1.3l0.9,1.6l-2.3,1.2zM1149.6,592.9l1.1,-1.4l1.7,1.4l-1.1,1.3zM1151.8,590.6l1.9,-0.8l0.7,1.7l-1.9,0.8zM1153.7,588.9l1.7,-1.8l1.5,1.4l-1.7,1.8zM1160.9,583.0l2.1,-1.2l0.9,1.5l-2.1,1.2zM1162.5,581.6l2.1,-1.3l1.1,1.8l-2,1.3zM1165.5,579.9l1.9,-1.7l1.5,1.6l-2,1.7zM1168.5,578.4l1.2,-1.6l1.4,1l-1.2,1.6zM1170.6,576.5l1.7,-1.4l1.1,1.2l-1.7,1.5zM1172.7,574.0l2.2,-0.9l0.7,1.7l-2.3,0.9zM1175.9,572.6l2.1,-1.4l1.1,1.7l-2.1,1.4zM1178.3,570.7l1.1,-1.5l1.5,1.1l-1.2,1.5zM1182.8,566.3l1.7,-1.5l1.2,1.3l-1.7,1.5zM1185.2,564.9l1.7,-1.7l1.5,1.5l-1.8,1.7zM1189.6,561.3l1.7,-1.4l1.3,1.7l-1.7,1.3zM1192.5,559.2l2.1,-1.1l0.8,1.5l-2.1,1.2zM1194.9,557.7l2,-1.2l1.2,1.8l-2,1.3zM1199.8,552.8l1.9,-1.2l1,1.6l-1.9,1.1zM1202.6,551.8l1.4,-1.7l1.5,1.2l-1.4,1.7zM1205.0,550.6l1.6,-1.6l1.1,1.2l-1.7,1.6zM1206.6,548.3l1.7,-1.4l1.1,1.3l-1.7,1.4zM1209.1,546.5l1.7,-0.7l0.8,1.8l-1.7,0.7zM1211.2,544.8l1.6,-1.3l1.3,1.6l-1.6,1.3zM1217.5,539.5l1.8,-1.7l1.1,1.1l-1.8,1.7zM1220.2,537.9l1.7,-1.3l1.4,1.8l-1.8,1.3zM1221.7,536.1l1.8,-1.3l1.1,1.5l-1.8,1.3zM1224.4,534.4l1.6,-1.4l1.4,1.6l-1.6,1.4zM1226.4,531.5l1.8,-0.9l1,1.9l-1.8,0.9zM1228.6,530.5l2.2,-1l0.7,1.5l-2.2,1.1zM1231.3,529.0l2.3,-0.9l0.8,2.1l-2.2,0.9zM1233.6,527.5l1.2,-1.5l1.7,1.2l-1.2,1.5zM1235.5,525.3l1.6,-1.9l1.6,1.3l-1.6,1.9zM1238.0,524.0l1.6,-1.9l1.6,1.3l-1.7,1.9zM1240.5,521.5l1.6,-1.7l1.5,1.4l-1.6,1.8zM1242.6,519.6l1.7,-1.9l1.6,1.5l-1.7,1.9zM1245.5,517.5l1.5,-1.6l1.2,1.1l-1.5,1.6zM1252.2,511.6l2,-1.5l1.3,1.7l-2,1.5zM1255.0,510.3l1.5,-1.4l1.5,1.5l-1.5,1.5zM1257.2,509.0l1.5,-1.8l1.3,1l-1.6,1.9zM1259.6,506.5l2.1,-1.3l0.9,1.6l-2.1,1.2zM1262.1,504.9l1.7,-1.2l1.3,1.9l-1.7,1.1zM1263.2,503.0l1.9,-0.8l0.9,2l-1.9,0.8zM1280.5,490.6l1.2,-1.5l1.8,1.5l-1.2,1.4zM1282.5,489.2l2,-1.5l1.3,1.6l-2.1,1.6zM1285.2,486.7l1.6,-1.6l1.6,1.5l-1.6,1.6zM1106.7,633.3l1.7,-0.7l0.8,2l-1.7,0.7zM1112.4,628.4l1.6,-1.4l1.3,1.5l-1.6,1.4zM1117.9,624.2l1.4,-1.5l1.4,1.4l-1.4,1.5zM1129.7,615.7l1.6,-2l1.3,1.1l-1.5,2zM1132.1,613.2l1.9,-0.8l0.9,2l-1.9,0.8zM1134.4,611.8l1.9,-1.6l1.4,1.6l-1.9,1.6zM1136.8,610.4l1.5,-2l1.4,1.1l-1.6,2zM1139.5,608.0l1.8,-1.6l1,1.3l-1.7,1.5zM1141.2,606.7l2,-1.4l0.9,1.3l-2,1.3zM1143.5,605.0l1.3,-1.8l1.7,1.2l-1.3,1.8zM1147.8,601.1l1.7,-2l1.6,1.4l-1.6,2zM1150.3,599.6l1.6,-1l0.9,1.7l-1.5,1zM1155.2,595.9l2.3,-1l0.7,1.5l-2.3,1zM1157.2,593.6l1.7,-1.1l1,1.5l-1.7,1.1zM1160.4,592.4l1.4,-1.9l1.7,1.3l-1.4,1.9zM1161.8,589.7l1.7,-0.7l0.8,1.9l-1.8,0.7zM1163.8,588.1l1.8,-1.7l1.5,1.6l-1.9,1.7zM1165.9,586.3l1.8,-1.1l0.9,1.5l-1.7,1.1zM1168.4,584.6l1.9,-0.7l0.6,1.5l-1.9,0.8zM1170.7,583.0l2,-1.1l0.7,1.4l-1.9,1zM1173.3,581.8l1.4,-1.6l1.5,1.3l-1.4,1.6zM1177.6,577.2l1.6,-1.2l1.1,1.4l-1.6,1.3zM1179.3,575.8l1.6,-1.4l1.4,1.6l-1.6,1.4zM1182.3,574.2l2,-1l0.8,1.4l-2.1,1.1zM1192.4,566.6l1.6,-0.7l0.9,2.1l-1.5,0.7zM1197.8,561.9l1.9,-1l1,1.8l-2,1zM1202.3,558.3l1.7,-1.3l1,1.3l-1.8,1.3zM1204.3,556.5l1.6,-1.5l1.1,1.1l-1.6,1.6zM1206.7,555.0l1.3,-1.6l1.3,1.1l-1.3,1.6zM1212.0,551.8l1.4,-1.5l1.2,1.2l-1.3,1.5zM1213.6,549.5l1.7,-0.7l0.8,1.9l-1.7,0.7zM1216.1,548.0l1.6,-0.8l0.9,2.1l-1.6,0.7zM1218.4,546.1l1.5,-1.4l1.2,1.3l-1.5,1.4zM1228.1,538.2l2.2,-1.2l1,2.1l-2.2,1.1zM1230.3,536.1l1.6,-0.8l0.8,1.6l-1.6,0.8zM1232.6,534.4l2.2,-1l0.7,1.4l-2.3,1zM1236.0,533.4l1.1,-1.5l1.4,1.2l-1.1,1.4zM1236.6,531.9l1.6,-1.7l1.5,1.4l-1.6,1.7zM1238.9,529.2l1.7,-1.4l1.3,1.5l-1.7,1.5zM1242.3,527.2l1.5,-1.1l1,1.4l-1.5,1.1zM1243.5,526.2l2.4,-1l0.7,1.7l-2.4,1zM1246.6,524.3l1.7,-1.6l1.5,1.5l-1.7,1.7zM1251.6,520.6l1.7,-0.9l0.8,1.6l-1.7,0.9zM1253.1,518.8l1.4,-1.6l1.3,1.1l-1.5,1.6zM1256.1,517.6l1.4,-1.9l1.3,1l-1.5,1.9zM1258.4,514.9l1.9,-0.8l0.8,1.8l-2,0.8zM1259.9,513.8l1.8,-1.6l1.1,1.2l-1.9,1.6zM1261.7,512.2l1.5,-2.1l1.8,1.3l-1.5,2zM1264.2,509.8l1.8,-0.9l0.9,1.7l-1.9,1zM1265.5,508.6l1.9,-1.8l1.5,1.7l-1.8,1.8zM1268.6,506.8l2.3,-1.1l0.6,1.5l-2.2,1zM1271.2,503.8l1.7,-0.8l0.9,2l-1.6,0.7zM1273.4,503.2l1.5,-2l1.4,1.2l-1.5,1.9zM1277.4,500.3l1.7,-1.4l1.1,1.2l-1.7,1.5zM1284.9,493.7l1.4,-1.2l1,1.2l-1.4,1.1zM1287.2,491.7l1.5,-1.5l1.3,1.2l-1.5,1.5zM1289.7,490.2l1.7,-1.8l1.3,1.3l-1.6,1.8zM1107.7,640.4l1.7,-1.9l1.7,1.5l-1.7,1.9zM1109.1,638.2l2.3,-0.9l0.7,1.8l-2.2,0.9zM1113.5,635.1l1.8,-1.7l1.4,1.5l-1.8,1.7zM1115.6,632.5l2.1,-1.4l1.2,1.8l-2.2,1.4zM1120.9,628.3l1.6,-0.7l0.9,1.9l-1.7,0.7zM1125.4,626.5l1.3,-1.7l1.8,1.3l-1.3,1.7zM1132.0,620.4l1.5,-1.5l1.5,1.5l-1.5,1.5zM1134.8,619.1l1.6,-0.9l0.8,1.3l-1.6,0.9zM1137.4,617.1l1.5,-1.4l1.4,1.5l-1.5,1.4zM1139.9,615.3l1.1,-1.5l1.7,1.3l-1.1,1.5zM1141.5,612.7l1.1,-1.4l1.6,1.3l-1.1,1.4zM1143.9,610.5l2.2,-1l0.8,1.6l-2.2,1zM1148.7,607.2l1.6,-0.8l0.9,1.7l-1.6,0.9zM1152.8,603.8l1.6,-0.7l0.7,1.4l-1.6,0.7zM1155.8,602.3l1.8,-1.5l1.3,1.5l-1.7,1.6zM1156.9,600.1l1.8,-1.3l1.3,1.9l-1.8,1.3zM1160.0,598.1l1.7,-1.2l1.2,1.8l-1.6,1.2zM1164.5,595.1l1.8,-1.4l1.4,1.8l-1.8,1.4zM1169.0,592.0l1.5,-2.1l1.3,0.9l-1.5,2.1zM1171.1,589.3l1.5,-0.9l0.9,1.4l-1.5,0.9zM1176.3,585.7l1.2,-1.2l1.4,1.3l-1.2,1.2zM1181.3,582.8l1.9,-1.6l1,1.3l-1.8,1.5zM1185.9,578.8l1.5,-1l1.2,1.9l-1.5,1zM1188.3,576.4l2.1,-1.3l1.1,1.8l-2.1,1.2zM1191.8,573.4l1.9,-1.7l1,1.3l-1.9,1.6zM1195.2,571.5l2.1,-1.1l0.8,1.6l-2.1,1.1zM1199.9,568.5l1.1,-1.5l1.7,1.3l-1.2,1.5zM1201.7,566.5l1.8,-1.9l1.3,1.2l-1.8,1.9zM1204.4,564.4l1.2,-1.6l1.5,1.1l-1.3,1.6zM1206.1,562.5l2.2,-1.4l0.9,1.4l-2.2,1.4zM1211.0,559.9l1.5,-1.7l1.2,1l-1.5,1.7zM1215.5,555.0l1.4,-1.2l1.5,1.8l-1.5,1.2zM1218.8,553.2l1.7,-1.5l1.2,1.5l-1.7,1.4zM1220.4,552.8l1.7,-1.9l1.2,1.1l-1.7,1.9zM1224.5,548.3l1.9,-1l0.7,1.4l-1.9,0.9zM1226.0,546.3l2.4,-1l0.8,2l-2.3,1zM1228.9,545.1l1.5,-1.9l1.7,1.3l-1.5,1.9zM1231.1,542.5l1.5,-1.4l1.4,1.4l-1.5,1.4zM1233.2,541.9l1.5,-1.8l1.3,1.2l-1.6,1.8zM1249.1,528.4l1.6,-0.7l0.8,1.7l-1.6,0.8zM1251.4,527.5l1.7,-1.2l1.3,1.8l-1.6,1.2zM1255.8,523.2l1.6,-0.7l0.6,1.5l-1.6,0.6zM1257.7,522.5l1.6,-1.2l0.9,1.2l-1.6,1.2zM1260.0,520.9l1.4,-1.4l1.5,1.5l-1.4,1.5zM1262.3,518.2l1.6,-0.8l0.9,1.9l-1.6,0.8zM1265.3,517.1l1.1,-1.5l1.7,1.2l-1.1,1.6zM1267.7,515.0l1.2,-1.6l1.6,1.1l-1.2,1.7zM1269.7,513.5l1.5,-1.5l1.5,1.6l-1.5,1.5zM1271.3,511.4l1.4,-1.5l1.2,1.2l-1.4,1.5zM1274.1,509.0l1.7,-0.8l0.7,1.3l-1.7,0.9zM1276.4,508.5l1.2,-1.3l1.2,1.2l-1.3,1.2zM1278.0,506.4l1.9,-1.2l1,1.4l-1.9,1.3zM1280.4,504.7l1.9,-1.6l1.4,1.7l-2,1.5zM1283.0,502.1l2.1,-1.1l1,1.8l-2.1,1.1zM1287.6,498.7l1.8,-1.2l1,1.6l-1.7,1.2zM1289.6,496.4l1.7,-0.6l0.7,1.6l-1.7,0.7zM1108.0,646.2l1.5,-1.4l1,1.1l-1.4,1.3zM1110.3,644.4l1.5,-1.9l1.2,0.9l-1.5,2zM1112.2,642.3l1.5,-1.3l1.4,1.6l-1.5,1.3zM1115.2,641.5l1.2,-1.7l1.8,1.3l-1.2,1.7zM1117.7,639.1l1.6,-0.8l0.7,1.4l-1.6,0.8zM1120.0,636.9l1.4,-1.8l1.5,1.2l-1.4,1.8zM1122.2,635.0l2.1,-1.1l1,1.7l-2.1,1.1zM1130.9,628.1l1.8,-1.3l1.1,1.5l-1.8,1.4zM1138.2,622.6l1.6,-1.9l1.4,1.2l-1.6,1.9zM1142.4,619.8l1.8,-1.2l0.9,1.4l-1.7,1.2zM1147.5,615.6l1.4,-0.8l1.2,1.9l-1.5,0.9zM1151.7,613.2l1.2,-1.6l1.2,0.9l-1.1,1.6zM1154.3,610.5l1.3,-1.6l1.7,1.4l-1.2,1.6zM1156.8,608.9l1.8,-1.2l0.9,1.2l-1.8,1.3zM1158.3,606.7l1.6,-1.5l1.1,1.2l-1.5,1.5zM1161.7,605.0l1.5,-1.1l0.9,1.3l-1.4,1.1zM1163.3,603.7l1.6,-1.3l1.4,1.8l-1.6,1.2zM1167.4,599.8l2,-0.7l0.9,2.1l-2,0.8zM1169.4,598.3l1.5,-1.6l1.3,1.1l-1.6,1.7zM1172.1,596.1l1.8,-1.4l1.1,1.5l-1.8,1.4zM1179.4,591.4l1.6,-1.7l1.2,1.2l-1.6,1.7zM1181.6,588.7l2.2,-0.9l0.6,1.5l-2.2,0.9zM1184.3,586.4l1.3,-1.4l1.2,1.1l-1.3,1.4zM1194.7,578.0l1.8,-1.1l1,1.6l-1.8,1.1zM1196.4,577.0l1.9,-1.2l1.3,1.8l-1.9,1.3zM1203.5,572.8l1.1,-1.5l1.4,1l-1.1,1.5zM1205.0,570.7l1.6,-1.1l1.2,1.6l-1.6,1.2zM1207.9,569.3l1.5,-1.9l1.5,1.2l-1.5,1.9zM1210.0,565.7l1.9,-1.3l1.2,1.8l-1.9,1.3zM1212.3,565.4l1.5,-1.7l1.5,1.2l-1.5,1.8zM1216.8,561.9l1.4,-1.2l1.3,1.6l-1.4,1.1zM1219.6,559.9l1.5,-0.9l0.8,1.3l-1.4,0.9zM1223.4,556.5l1.6,-2l1.2,1l-1.6,2zM1224.8,554.3l1.9,-1.1l0.8,1.3l-1.9,1.1zM1233.0,549.2l1.2,-1.7l1.7,1.2l-1.3,1.7zM1240.0,542.6l1.5,-1.2l1.1,1.6l-1.5,1.1zM1241.9,541.5l2.2,-1.4l1.1,1.7l-2.2,1.4zM1253.5,531.9l1.6,-1.2l1.2,1.5l-1.7,1.2zM1257.6,529.3l1.9,-1.7l1.3,1.5l-1.9,1.7zM1264.5,523.2l1.6,-1.3l1.3,1.5l-1.6,1.3zM1267.0,521.9l1.6,-1.3l1.2,1.3l-1.6,1.4zM1269.4,521.0l1.9,-1l0.7,1.4l-1.9,0.9zM1271.3,519.3l1.5,-1.8l1.8,1.5l-1.5,1.8zM1280.4,511.2l1.3,-1.6l1.4,1.2l-1.2,1.5zM1285.0,507.4l2.1,-1.2l1,1.9l-2.1,1.1zM1291.8,502.4l2.2,-1.2l1,1.8l-2.3,1.2zM1299.1,497.4l1.8,-1.1l0.9,1.7l-1.8,1zM1307.5,489.5l1.5,-1.1l1.3,1.6l-1.5,1.2zM1310.5,489.2l1.3,-1.4l1.3,1.2l-1.3,1.4zM1312.5,487.4l1.2,-1.2l1.3,1.3l-1.2,1.2zM1314.4,484.4l1.6,-1.4l1.3,1.6l-1.6,1.4zM1317.1,482.3l2,-1.5l1.3,1.8l-2,1.5zM1319.5,481.2l1.5,-1.6l1.3,1.2l-1.5,1.6zM1326.2,474.8l2.2,-0.9l0.8,2l-2.2,0.9zM1109.7,650.9l1.8,-1l0.8,1.4l-1.8,1.1zM1111.1,648.6l2.2,-1.1l0.9,2l-2.2,1zM1113.9,647.9l1.9,-1.2l1,1.5l-1.8,1.3zM1115.1,646.1l1.8,-1.7l1.5,1.7l-1.8,1.6zM1117.7,644.3l2.2,-1.2l0.9,1.7l-2.2,1.2zM1136.9,628.3l2.2,-1l0.7,1.6l-2.1,1zM1140.1,626.5l2.2,-0.9l0.8,1.8l-2.2,0.9zM1143.3,625.4l1.4,-1.5l1.1,1l-1.4,1.6zM1144.4,623.0l1.5,-1.3l1.5,1.6l-1.5,1.4zM1147.3,621.9l1.5,-2l1.4,1.1l-1.5,2zM1156.7,614.0l2,-0.8l0.8,2.1l-1.9,0.8zM1163.1,609.2l1.1,-1.3l1.6,1.3l-1.1,1.3zM1165.6,607.5l1.6,-1.5l1.3,1.4l-1.5,1.5zM1168.1,604.6l1.8,-1.3l1.1,1.6l-1.8,1.3zM1170.1,604.4l1.9,-1.6l1,1.1l-1.9,1.7zM1174.5,599.8l1.9,-1.7l1.4,1.5l-1.9,1.7zM1177.0,597.7l1.5,-1.5l1.1,1.1l-1.5,1.5zM1179.6,596.5l1.3,-1.8l1.2,0.9l-1.3,1.8zM1182.1,594.2l1.9,-1l0.9,1.8l-1.9,1zM1183.8,592.6l2.2,-1.3l1,1.7l-2.2,1.3zM1186.5,591.3l1.1,-1.6l1.3,0.9l-1.1,1.6zM1190.5,587.6l2,-0.8l0.7,1.6l-1.9,0.9zM1192.4,585.7l1.5,-1.2l1.3,1.7l-1.5,1.2zM1194.9,583.6l2.3,-1.1l1,2.1l-2.4,1.1zM1197.6,581.7l1.6,-1l0.8,1.5l-1.6,0.9zM1199.7,579.8l1.4,-0.9l0.9,1.4l-1.5,0.9zM1201.7,577.8l2,-1.1l0.8,1.5l-2,1.1zM1204.7,576.6l1.5,-1.3l1.4,1.5l-1.5,1.3zM1207.6,574.4l2.2,-1l0.7,1.5l-2.3,1zM1209.0,573.1l1.9,-1.4l1,1.3l-1.9,1.4zM1211.6,571.1l2.3,-1.1l0.7,1.5l-2.4,1zM1213.6,568.5l2.2,-1.1l0.9,1.9l-2.2,1.1zM1217.0,566.8l1.6,-0.6l0.8,2l-1.6,0.7zM1219.3,565.6l1.5,-1.2l1.2,1.5l-1.6,1.2zM1221.3,562.6l1.7,-0.9l0.7,1.4l-1.8,0.9zM1223.2,561.3l2,-1.3l1,1.5l-2,1.3zM1226.3,560.1l1.7,-1.4l1.3,1.5l-1.7,1.4zM1230.0,555.8l2,-1.1l0.8,1.4l-2,1.1zM1232.8,555.4l1.4,-1.6l1.2,1.1l-1.4,1.6zM1235.2,551.9l1.9,-1l0.8,1.4l-2,1.1zM1238.0,550.1l1.6,-0.7l0.7,1.6l-1.6,0.7zM1239.7,547.9l1.8,-1.1l1.2,1.8l-1.8,1.2zM1242.2,547.8l1.5,-1.6l1.5,1.4l-1.5,1.6zM1245.0,545.7l1.8,-1.8l1.3,1.3l-1.9,1.8zM1246.6,543.8l1.7,-1.5l1.3,1.5l-1.7,1.4zM1249.2,542.8l1.5,-1.8l1.3,1.2l-1.5,1.7zM1251.4,539.3l1.5,-1.2l0.9,1.3l-1.6,1.1zM1253.5,537.2l1.9,-0.7l0.6,1.5l-1.9,0.7zM1260.2,533.8l1.4,-1.7l1.6,1.4l-1.4,1.7zM1264.9,528.8l1.5,-1.5l1.7,1.5l-1.5,1.6zM1267.7,526.6l1.5,-0.8l1,1.8l-1.5,0.7zM1269.5,525.2l1.8,-1.7l1.4,1.6l-1.8,1.7zM1272.3,524.2l1.2,-1.7l1.3,1l-1.1,1.6zM1276.0,520.3l1.7,-1.4l1,1.2l-1.6,1.4zM1280.6,516.4l1.7,-0.8l0.7,1.5l-1.8,0.8zM1282.6,515.2l1.2,-1.4l1.3,1.1l-1.2,1.5zM1285.5,513.6l1.7,-1.8l1.3,1.3l-1.7,1.7zM1287.7,512.3l1.1,-1.4l1.3,1l-1,1.4zM1289.6,510.6l1.4,-1.7l1.8,1.4l-1.4,1.7zM1291.5,508.7l1.9,-1.6l1,1.2l-1.9,1.6zM1294.1,506.6l2.1,-0.8l0.6,1.6l-2.1,0.8zM1296.6,504.8l1.7,-1.3l1.3,1.7l-1.8,1.3zM1299.2,502.9l2,-1.1l1.1,2l-2,1.1zM1301.3,501.6l1.8,-1.7l1.3,1.4l-1.9,1.6zM1303.8,499.2l2.1,-1l0.8,1.9l-2,0.9zM1306.8,497.2l2.1,-1.2l0.9,1.6l-2.1,1.1zM1308.4,495.9l1.5,-1l1,1.4l-1.6,1zM1311.4,493.3l2.1,-0.9l0.8,2l-2.1,0.8zM1313.0,492.2l1.4,-1.5l1.2,1l-1.5,1.5zM1317.2,488.0l1.4,-1.3l1.1,1.2l-1.4,1.3zM1320.8,486.3l1.3,-1.4l1.5,1.5l-1.3,1.4zM1322.7,484.3l1.7,-1.1l1.2,1.9l-1.7,1.1zM1327.8,480.1l1.3,-1.7l1.7,1.4l-1.3,1.7zM1329.5,478.7l1.9,-1.7l1.5,1.7l-2,1.7zM1112.2,655.9l1.5,-1.7l1.6,1.4l-1.5,1.7zM1114.4,654.3l1.4,-1.3l1,1.2l-1.4,1.3zM1119.8,650.5l1.8,-1.8l1.1,1.2l-1.8,1.8zM1122.2,648.3l2,-1.2l1.1,1.6l-2,1.3zM1123.7,646.6l2.1,-1.5l1,1.6l-2.1,1.4zM1125.7,643.8l2,-1l1.1,2l-2.1,1zM1128.8,643.1l1.1,-1.5l1.5,1.1l-1.2,1.5zM1131.7,640.8l2,-1.3l1,1.6l-2,1.3zM1133.6,639.3l1.1,-1.5l1.5,1.1l-1.1,1.5zM1135.6,636.7l2.1,-1.4l0.9,1.2l-2.1,1.5zM1137.9,634.5l2.1,-1.1l1,1.9l-2.1,1.2zM1140.3,634.4l1.7,-1.4l1.3,1.6l-1.7,1.4zM1142.0,631.7l1.9,-1.6l1.1,1.4l-1.8,1.5zM1147.1,628.3l1.1,-1.5l1.8,1.4l-1.1,1.5zM1152.0,624.7l1.5,-1.5l1.1,1l-1.5,1.5zM1154.5,623.4l1.5,-1.7l1.7,1.5l-1.5,1.7zM1156.0,621.5l1.5,-1.1l1.1,1.5l-1.4,1.1zM1159.4,619.9l1,-1.5l1.5,1.1l-1.1,1.5zM1163.1,615.9l1.4,-1.8l1.2,1l-1.4,1.8zM1165.2,614.3l1.5,-1.8l1.3,1l-1.4,1.8zM1168.4,612.3l1.5,-1.3l1.5,1.6l-1.6,1.3zM1170.3,611.1l1.9,-1.8l1,1.1l-1.8,1.8zM1172.0,608.9l2.1,-1.3l1.2,1.7l-2.1,1.4zM1174.1,607.3l1.5,-1.9l1.4,1.1l-1.5,1.9zM1177.1,605.0l1.9,-1.2l1.1,1.8l-1.9,1.2zM1179.5,603.3l1.8,-1.4l1.3,1.7l-1.7,1.4zM1182.4,601.2l1.5,-1l1.2,1.8l-1.5,1zM1184.3,598.4l2.1,-0.9l0.7,1.7l-2.1,0.8zM1186.7,597.4l1.4,-1.9l1.7,1.2l-1.4,2zM1188.9,595.2l2,-0.9l0.8,1.7l-1.9,0.9zM1190.4,593.4l2.2,-1.3l1.1,1.8l-2.2,1.3zM1193.3,592.7l1.7,-1.9l1.6,1.4l-1.7,1.9zM1195.2,590.4l1.3,-1.5l1.4,1.3l-1.3,1.5zM1198.3,588.2l1.4,-1.4l1.5,1.6l-1.4,1.3zM1200.4,587.1l1.4,-1.5l1.4,1.3l-1.4,1.5zM1202.0,584.9l1.4,-1.3l1.3,1.5l-1.4,1.3zM1204.4,583.0l2.1,-1.4l1,1.5l-2.1,1.4zM1207.2,580.4l1.6,-0.7l0.9,1.8l-1.6,0.8zM1208.8,579.9l1.4,-1.7l1.4,1.2l-1.4,1.7zM1212.1,578.5l1.1,-1.4l1.6,1.3l-1.1,1.4zM1214.4,576.5l1.7,-1.4l1.2,1.3l-1.8,1.5zM1215.8,574.9l1.4,-1.9l1.4,1.1l-1.4,1.8zM1218.3,572.7l1.6,-1.2l1,1.2l-1.7,1.3zM1222.8,569.6l1.1,-1.6l1.9,1.3l-1.2,1.6zM1226.6,566.2l1.3,-1.6l1.4,1.1l-1.3,1.6zM1228.1,563.7l1.8,-0.7l0.8,2.1l-1.8,0.7zM1230.8,563.5l2,-1.5l1.3,1.8l-2.1,1.5zM1235.2,559.2l1.4,-1.7l1.6,1.3l-1.4,1.7zM1237.5,558.4l2.1,-1.4l1,1.3l-2.1,1.5zM1239.1,556.2l1.7,-2l1.6,1.4l-1.7,1.9zM1242.5,554.1l1.6,-0.7l0.7,1.6l-1.7,0.7zM1244.8,552.5l1.4,-1.6l1.6,1.4l-1.4,1.6zM1249.3,547.7l1.9,-1.6l1.2,1.5l-1.9,1.5zM1255.2,545.0l1.3,-1.3l1.1,1l-1.3,1.4zM1259.5,541.7l1.5,-1.9l1.3,1l-1.5,1.9zM1261.2,539.3l1.8,-1.2l1,1.5l-1.8,1.2zM1263.8,537.7l1.8,-0.9l0.7,1.4l-1.8,0.9zM1265.8,535.9l1.5,-1l0.8,1.2l-1.5,1.1zM1267.4,533.7l2,-1l0.9,1.7l-1.9,1.1zM1270.0,531.8l1.6,-0.8l0.8,1.6l-1.5,0.8zM1273.9,528.9l1.5,-1.2l1.3,1.5l-1.6,1.2zM1276.2,526.6l2,-0.8l0.9,2l-2,0.8zM1278.8,525.3l1.8,-1.8l1.5,1.5l-1.8,1.8zM1281.4,523.5l1.6,-0.7l0.9,1.9l-1.6,0.7zM1283.3,521.2l2,-1.2l1,1.6l-2,1.2zM1286.4,520.6l1.4,-1.9l1.5,1.1l-1.5,1.9zM1289.0,518.4l1.7,-1.7l1.3,1.3l-1.6,1.7zM1295.1,511.8l1.7,-1.3l1.4,1.7l-1.6,1.3zM1300.8,508.0l2,-0.8l0.8,1.9l-1.9,0.9zM1302.4,506.8l1.9,-1.6l1.3,1.4l-1.9,1.7zM1305.5,504.9l1.7,-1.1l1.2,1.9l-1.6,1zM1307.3,503.2l1.6,-0.8l0.8,1.7l-1.6,0.7zM1310.5,501.0l1.6,-1.2l1,1.3l-1.6,1.2zM1312.2,499.7l2.1,-1.5l1.3,1.7l-2.1,1.6zM1318.8,493.8l2,-1.4l1,1.4l-2.1,1.4zM1328.1,486.2l1.8,-1.2l1.1,1.8l-1.8,1.2zM1331.2,485.4l1.2,-1.3l1.4,1.3l-1.2,1.3zM1333.0,483.5l1.3,-1.1l1.5,1.8l-1.4,1.1zM1118.6,659.1l1.4,-1.1l1.3,1.7l-1.4,1.1zM1120.6,656.5l1.3,-1.4l1.6,1.5l-1.3,1.4zM1122.4,655.2l2,-0.9l0.7,1.4l-2,0.9zM1124.7,653.5l1.4,-1.5l1.4,1.3l-1.4,1.5zM1127.9,651.3l1.6,-0.8l0.8,1.6l-1.6,0.8zM1145.5,637.6l1.7,-1.2l1.3,1.7l-1.7,1.2zM1150.9,633.1l1.7,-1l1.1,2l-1.6,0.9zM1153.4,631.2l1.9,-1.3l1.2,1.8l-1.9,1.3zM1155.9,629.0l2.2,-1.1l0.9,1.8l-2.2,1.2zM1158.7,628.0l1.4,-1.7l1.3,1l-1.4,1.8zM1165.3,621.7l1.2,-1.4l1.5,1.3l-1.2,1.4zM1167.7,620.2l1.6,-1.4l1,1.1l-1.6,1.4zM1169.9,618.0l1.6,-0.8l1,2.1l-1.7,0.7zM1172.1,617.0l1.4,-1.7l1.4,1.1l-1.4,1.7zM1174.2,614.7l1.5,-0.9l1.2,1.9l-1.5,0.9zM1176.5,613.9l1.5,-1.4l1.5,1.6l-1.4,1.4zM1178.8,612.0l2.3,-1.1l0.8,1.5l-2.3,1.2zM1180.8,610.2l1.2,-1.3l1.3,1.2l-1.2,1.3zM1186.9,605.4l1.8,-1.9l1.3,1.3l-1.7,1.8zM1197.1,597.1l1.7,-0.9l0.8,1.4l-1.7,0.9zM1199.4,595.8l1.2,-1.7l1.3,0.9l-1.2,1.7zM1201.4,594.1l1.2,-1.4l1.4,1.1l-1.2,1.4zM1203.5,591.5l1.7,-1.3l1.1,1.5l-1.6,1.3zM1206.8,589.8l2.1,-0.8l0.7,1.6l-2.1,0.9zM1208.9,587.6l1.6,-1l1,1.7l-1.6,1zM1211.1,586.4l2.2,-0.9l0.6,1.5l-2.1,1zM1213.3,584.7l2,-1.2l1,1.7l-1.9,1.2zM1218.0,581.4l1.5,-1l0.9,1.3l-1.5,1zM1222.0,577.7l2,-1.7l1.1,1.3l-2,1.7zM1226.8,573.6l1.6,-1.4l1.3,1.4l-1.6,1.4zM1243.6,560.8l1.1,-1.4l1.3,1l-1.1,1.3zM1245.7,558.9l1.6,-1.3l1.3,1.7l-1.6,1.2zM1248.4,556.6l1.5,-1.1l1,1.3l-1.5,1.1zM1250.7,556.0l1.5,-1.7l1.6,1.4l-1.4,1.7zM1258.6,548.8l1.2,-1.3l1.3,1.2l-1.3,1.3zM1261.6,546.2l1.8,-1.2l1,1.5l-1.9,1.2zM1266.4,543.0l1.6,-0.9l0.7,1.3l-1.5,0.9zM1270.5,540.1l1.5,-1.6l1.6,1.6l-1.5,1.6zM1272.8,538.9l1.7,-2l1.5,1.2l-1.7,2zM1275.5,535.7l1.7,-0.9l1,1.7l-1.7,1zM1277.5,534.2l1.9,-1l1.1,1.9l-1.9,1.1zM1278.9,532.8l1.8,-0.7l0.6,1.5l-1.8,0.7zM1285.0,529.1l1.7,-0.9l0.9,1.6l-1.7,0.9zM1286.2,528.1l1.4,-2l1.8,1.2l-1.5,2zM1289.4,525.6l1.5,-1.2l1.1,1.3l-1.5,1.3zM1290.6,524.1l1,-1.3l1.4,1l-1,1.4zM1293.1,522.3l1.4,-1.8l1.4,1.1l-1.4,1.8zM1296.4,520.2l2.1,-1.1l0.7,1.3l-2.1,1.1zM1297.6,518.7l1.4,-1.6l1.7,1.5l-1.4,1.6zM1303.2,515.1l1,-1.4l1.6,1.2l-1,1.4zM1305.2,512.7l1.9,-1l0.8,1.3l-1.9,1.1zM1308.8,509.8l1.7,-1.5l1.1,1.3l-1.6,1.5zM1311.3,507.8l2.2,-0.9l0.7,1.7l-2.2,0.9zM1313.4,506.3l2,-1.3l1.3,1.8l-2,1.4zM1316.3,504.5l1.3,-1.2l1.4,1.3l-1.3,1.3zM1320.8,500.3l2.1,-0.8l0.6,1.6l-2.1,0.8zM1322.8,499.5l2,-1.5l1.2,1.7l-2,1.4zM1324.8,498.5l1.5,-1.7l1.1,1l-1.5,1.7zM1329.9,493.6l1.7,-1.4l1.2,1.4l-1.7,1.5zM1332.3,491.3l1.6,-1.4l1.5,1.7l-1.6,1.4zM1334.5,489.9l1.2,-1.3l1.1,1.1l-1.1,1.3zM1336.7,488.9l1.4,-1.8l1.8,1.4l-1.4,1.8zM1338.8,486.6l2.1,-0.9l0.8,1.8l-2.1,0.9zM1340.6,485.8l2.1,-1.4l1.1,1.6l-2.1,1.4zM1343.3,483.5l1.2,-1.2l1.4,1.4l-1.2,1.2zM1121.5,663.8l1.1,-1.4l1.6,1.2l-1.1,1.4zM1123.7,660.7l1.5,-0.8l1.1,1.9l-1.5,0.8zM1125.8,659.7l1.8,-1.4l1.2,1.4l-1.8,1.4zM1128.8,657.0l1.7,-0.9l1.1,1.9l-1.7,0.9zM1131.3,655.9l2.1,-1.1l0.7,1.3l-2,1.1zM1133.3,654.5l2.1,-1.4l1.1,1.8l-2.1,1.3zM1136.0,652.7l1.5,-1.5l1.3,1.3l-1.5,1.5zM1137.8,651.9l1.2,-1.7l1.4,1.1l-1.3,1.6zM1140.2,649.5l1.6,-1.6l1.2,1.3l-1.6,1.5zM1141.9,646.8l2.2,-1.1l0.8,1.6l-2.3,1.1zM1144.0,646.3l1.3,-1.2l1.3,1.5l-1.3,1.2zM1149.1,642.4l1.3,-1.3l1.6,1.6l-1.3,1.3zM1160.8,633.4l1.3,-1.4l1.5,1.3l-1.3,1.5zM1167.6,627.7l1.7,-0.8l0.7,1.5l-1.7,0.7zM1169.3,626.6l1.5,-1.3l1.1,1.3l-1.5,1.3zM1171.5,625.1l1.5,-1.6l1.2,1.2l-1.5,1.7zM1173.6,623.5l1.4,-1.3l1.1,1.2l-1.4,1.3zM1175.9,621.6l1.6,-1.4l1.3,1.7l-1.7,1.3zM1179.9,618.3l1.2,-1.7l1.5,1l-1.3,1.7zM1182.8,615.9l2.1,-1l0.8,1.5l-2.1,1zM1184.2,614.5l1.1,-1.4l1.3,1l-1.1,1.4zM1187.1,611.7l1.6,-1.3l1.2,1.5l-1.6,1.3zM1188.8,611.1l1.8,-1.6l1.4,1.5l-1.8,1.7zM1191.7,609.0l1.6,-1.5l1.3,1.4l-1.7,1.5zM1194.4,606.7l1.3,-1.8l1.5,1.1l-1.4,1.8zM1196.3,605.1l1.4,-1l1.2,1.8l-1.5,0.9zM1198.8,603.0l1.7,-1.3l1.1,1.5l-1.7,1.3zM1202.0,601.3l1,-1.4l1.4,1.1l-1.1,1.4zM1204.0,599.7l1.2,-1.4l1.3,1.1l-1.2,1.4zM1205.7,598.6l1.5,-1.8l1.5,1.2l-1.5,1.8zM1207.7,595.7l2.2,-1l0.8,1.8l-2.1,1.1zM1210.2,594.0l1.9,-1.8l1.1,1.2l-1.9,1.7zM1212.9,592.0l2,-1.6l1.4,1.7l-2,1.6zM1215.4,590.8l1.5,-1.8l1.2,1l-1.5,1.8zM1219.5,586.1l1.6,-1.4l1.2,1.4l-1.6,1.4zM1221.9,585.0l1.6,-1.9l1.3,1.1l-1.6,1.9zM1224.1,583.3l1.6,-1.2l1.2,1.6l-1.6,1.2zM1252.1,560.3l1.6,-0.8l0.9,1.9l-1.5,0.8zM1254.7,560.0l1.5,-0.9l0.9,1.5l-1.6,0.9zM1255.9,558.5l1.7,-1.7l1.5,1.4l-1.8,1.7zM1261.2,554.5l1.7,-0.8l0.8,1.8l-1.6,0.7zM1263.4,553.2l1.8,-1.3l1,1.3l-1.9,1.3zM1265.4,551.2l2.1,-1.1l0.8,1.5l-2.1,1.1zM1269.6,547.0l2,-0.8l0.7,1.5l-2,0.9zM1272.1,545.2l2.1,-0.9l0.6,1.6l-2,0.9zM1276.4,542.0l1.8,-0.9l1,1.8l-1.8,0.9zM1281.6,537.5l2.1,-1.3l1,1.7l-2.1,1.3zM1283.8,536.7l1.7,-0.9l0.9,1.8l-1.7,0.8zM1285.9,534.7l1.5,-1.8l1.4,1.2l-1.5,1.7zM1288.9,533.4l1.4,-1.3l1.1,1.2l-1.4,1.4zM1295.1,527.1l1.9,-1.5l1.3,1.6l-2,1.5zM1297.5,525.7l2,-1.2l0.8,1.4l-1.9,1.2zM1300.5,524.4l1,-1.5l1.8,1.3l-1.1,1.5zM1302.8,522.0l1.9,-0.9l0.9,2l-1.9,0.9zM1304.5,519.9l2.3,-0.9l0.6,1.5l-2.3,0.9zM1306.7,517.9l2.1,-1.1l0.7,1.4l-2.1,1.1zM1309.3,517.0l1.5,-1.2l1.1,1.4l-1.4,1.2zM1311.7,514.7l1.5,-1l0.9,1.4l-1.4,1zM1313.0,513.6l1.6,-1.6l1.5,1.6l-1.6,1.6zM1315.1,511.8l1,-1.4l1.6,1.1l-1,1.5zM1318.0,510.4l1.7,-1.9l1.5,1.3l-1.7,1.9zM1319.7,508.4l1.6,-1.8l1.3,1l-1.6,1.9zM1322.7,506.5l2.1,-1.1l0.7,1.5l-2.1,1.1zM1324.9,504.6l1.8,-1l1,1.8l-1.8,1zM1327.6,502.8l1.7,-1.6l1.2,1.2l-1.7,1.6zM1330.0,501.1l1.4,-1.6l1.5,1.3l-1.4,1.6zM1331.6,499.3l2,-1.6l1,1.4l-1.9,1.5zM1338.3,493.3l1.4,-1.4l1.5,1.5l-1.3,1.4zM1343.3,490.2l2.2,-1.1l0.9,1.7l-2.2,1.1zM1345.0,487.7l2.2,-1.2l1,1.8l-2.2,1.2zM1347.7,485.7l2.1,-1.3l1,1.6l-2.1,1.3zM1129.0,663.4l1.6,-1.8l1.5,1.3l-1.6,1.8zM1131.7,662.0l1.5,-1.8l1.6,1.4l-1.5,1.8zM1136.2,658.3l1.5,-2.1l1.3,1l-1.5,2zM1138.2,656.5l1.8,-1.6l1.1,1.3l-1.8,1.6zM1140.7,655.3l1.2,-1.5l1.5,1.1l-1.2,1.5zM1143.0,652.0l1.6,-1.6l1.2,1.2l-1.6,1.6zM1145.4,651.1l1.5,-1.5l1.4,1.4l-1.5,1.5zM1149.0,647.2l1.8,-0.7l0.6,1.4l-1.9,0.8zM1153.4,644.5l1.5,-2l1.4,1l-1.5,2zM1155.7,642.4l2,-0.8l0.6,1.5l-2,0.8zM1157.5,641.2l1.8,-1.8l1.3,1.3l-1.9,1.8zM1164.4,636.2l1.1,-1.5l1.3,0.9l-1.1,1.6zM1166.4,634.4l1.8,-1.8l1.2,1.2l-1.7,1.8zM1168.3,632.2l1.3,-1.5l1.4,1.2l-1.4,1.5zM1172.9,629.2l1.8,-1.1l0.9,1.3l-1.8,1.2zM1176.1,627.5l1.2,-1.2l1.1,1l-1.2,1.3zM1177.9,625.6l1.5,-1.4l1.4,1.6l-1.4,1.4zM1182.4,621.3l2.1,-1.3l0.8,1.4l-2,1.2zM1187.0,617.3l2,-0.8l0.7,1.7l-2,0.8zM1189.9,616.5l2.1,-1.3l0.8,1.3l-2.1,1.3zM1191.0,614.9l1.7,-2l1.2,1.1l-1.7,2zM1194.2,612.9l2.1,-0.9l0.6,1.5l-2.1,0.8zM1196.5,610.5l1.7,-1.1l1,1.4l-1.7,1.2zM1198.8,609.0l1.4,-1.4l1.1,1l-1.4,1.5zM1200.5,607.4l2.2,-1.2l1.1,1.9l-2.2,1.2zM1203.8,605.8l1.6,-1.8l1.5,1.4l-1.5,1.8zM1210.5,600.5l1.3,-1.6l1.4,1.1l-1.3,1.6zM1214.6,596.2l2,-1.5l0.9,1.3l-2,1.4zM1216.6,594.9l1.4,-1.6l1.5,1.3l-1.4,1.6zM1219.3,593.0l1.4,-1.4l1.5,1.5l-1.4,1.4zM1220.9,591.2l1.4,-1.6l1.8,1.5l-1.5,1.6zM1223.2,589.6l1.2,-1.4l1.2,1l-1.2,1.4zM1225.4,587.5l2,-1l1,1.8l-2,1zM1228.2,585.9l1.6,-0.9l0.8,1.5l-1.6,0.8zM1248.8,570.3l1.5,-1.6l1.5,1.5l-1.5,1.6zM1250.7,568.9l1.3,-1.7l1.6,1.2l-1.3,1.7zM1253.7,566.3l1.1,-1.3l1.5,1.2l-1.1,1.3zM1255.0,565.2l1.6,-1.8l1.4,1.2l-1.6,1.8zM1257.3,562.7l1.6,-1.6l1.6,1.6l-1.6,1.6zM1259.3,560.9l1.6,-1.7l1.6,1.6l-1.5,1.7zM1265.7,556.9l1.7,-0.8l0.9,2l-1.6,0.8zM1269.7,553.6l1.4,-1.2l1.2,1.4l-1.4,1.2zM1272.4,552.5l1.5,-1.7l1.3,1.1l-1.6,1.7zM1276.6,547.6l1.8,-1l0.9,1.6l-1.9,1zM1279.0,546.3l2.2,-1.2l0.9,1.8l-2.1,1.1zM1280.2,544.7l1.7,-1.9l1.6,1.4l-1.7,1.9zM1299.0,529.7l1.8,-0.8l0.7,1.8l-1.8,0.8zM1301.9,528.0l2,-0.8l0.8,1.7l-2.1,0.8zM1304.3,526.8l2.1,-1l0.7,1.5l-2.2,1zM1306.9,525.2l1.5,-1.2l1.1,1.3l-1.5,1.2zM1311.3,521.1l1.6,-1.1l0.9,1.3l-1.5,1.1zM1312.9,519.2l1.8,-1.9l1.6,1.5l-1.7,1.9zM1318.1,515.1l1.8,-1.5l1.2,1.4l-1.9,1.5zM1321.3,513.9l1.4,-1.1l1.3,1.4l-1.4,1.2zM1323.5,511.3l2.1,-1l0.6,1.4l-2.1,1zM1325.5,509.4l2,-1.5l1,1.2l-2.1,1.6zM1328.0,507.8l1.7,-1.1l0.9,1.5l-1.7,1.1zM1330.1,506.2l1.4,-1.3l1.4,1.6l-1.4,1.3zM1336.1,501.0l1.6,-1.4l1.4,1.6l-1.6,1.4zM1343.9,495.4l2.3,-1.2l0.8,1.5l-2.3,1.2zM1346.6,493.2l2,-0.8l0.6,1.6l-2,0.8zM1348.7,491.8l1.5,-1.1l1.1,1.6l-1.4,1zM1350.5,489.6l1.5,-1.1l1.2,1.6l-1.6,1.1zM1153.3,651.5l1.8,-1.6l1.1,1.2l-1.7,1.6zM1155.5,650.2l1.7,-1.4l1.4,1.8l-1.7,1.4zM1159.8,646.1l2,-0.8l0.7,1.8l-2,0.8zM1162.3,644.8l1.5,-1.2l1.5,1.7l-1.6,1.3zM1164.0,643.4l1.3,-1.1l1.2,1.4l-1.3,1.2zM1166.6,641.6l1.8,-1.2l1.2,1.6l-1.9,1.3zM1175.5,633.6l1.5,-1.6l1.5,1.4l-1.5,1.6zM1178.2,632.0l1.6,-1.3l1.4,1.6l-1.7,1.4zM1180.3,630.1l1.4,-1.2l1,1.2l-1.5,1.1zM1182.7,628.4l1.2,-1.4l1.6,1.3l-1.3,1.5zM1185.0,626.3l1.8,-1l0.7,1.4l-1.8,0.9zM1186.9,624.6l1.9,-1.4l1.2,1.6l-1.9,1.4zM1189.8,622.0l1.4,-1l1.3,1.8l-1.4,1zM1192.7,621.0l1.7,-1.9l1.7,1.4l-1.7,2zM1197.0,617.5l2,-1.6l1,1.2l-2,1.7zM1198.8,615.1l1.9,-1.5l1.4,1.7l-1.9,1.5zM1214.9,603.4l1,-1.4l1.5,1.1l-1,1.4zM1219.5,599.4l2,-0.8l0.6,1.4l-2,0.9zM1223.2,596.1l2.1,-1.4l1.3,1.9l-2.1,1.4zM1228.9,593.3l1.5,-1.9l1.5,1.1l-1.5,2zM1231.0,590.0l1.8,-0.9l1,2.1l-1.8,0.9zM1232.8,588.8l1.5,-1.9l1.8,1.3l-1.5,2zM1235.6,586.6l1.8,-0.9l0.8,1.7l-1.8,0.9zM1239.2,584.4l1.5,-1.7l1.2,1.2l-1.5,1.6zM1242.5,582.8l1,-1.4l1.5,1l-1,1.4zM1249.7,576.7l1.7,-1.2l1,1.5l-1.7,1.2zM1252.0,574.5l2,-1.4l1.2,1.8l-2,1.4zM1254.0,572.9l1.5,-1.6l1.5,1.4l-1.5,1.6zM1256.2,570.1l2,-1.3l1.3,1.9l-2,1.3zM1258.6,569.0l1.6,-1.2l1.1,1.4l-1.6,1.2zM1260.9,567.2l1.4,-1l1,1.4l-1.5,1zM1265.0,563.4l2.1,-1.1l1,2l-2.1,1zM1274.9,556.8l1.9,-1.4l1.1,1.6l-1.9,1.3zM1277.1,555.5l1.4,-1.5l1.3,1.2l-1.4,1.5zM1278.8,552.6l1.8,-0.7l0.8,2.1l-1.8,0.7zM1281.2,550.9l1.7,-1.2l1.3,1.8l-1.7,1.1zM1283.5,548.5l2.1,-1.1l1,1.9l-2.1,1.1zM1286.4,547.6l1.4,-1.1l1,1.3l-1.4,1.1zM1288.5,546.3l1.6,-1.6l1.4,1.4l-1.6,1.6zM1290.5,544.9l1.6,-1.5l1.2,1.2l-1.6,1.6zM1292.0,542.4l1.7,-1.9l1.7,1.5l-1.7,1.9zM1294.3,540.9l2.3,-1.2l0.7,1.5l-2.3,1.1zM1297.8,539.1l1.7,-1.6l1.6,1.6l-1.7,1.7zM1300.3,536.8l1.8,-1.6l1.4,1.6l-1.7,1.6zM1302.3,535.1l1.5,-2.1l1.5,1.1l-1.5,2.1zM1303.5,533.4l1.8,-1.4l1.1,1.4l-1.8,1.4zM1306.2,530.9l1.9,-1l0.9,1.8l-1.9,0.9zM1309.2,529.8l1.7,-1.1l1.1,1.8l-1.7,1.1zM1311.8,528.5l1.8,-1.8l1.4,1.3l-1.9,1.9zM1319.6,521.0l1.4,-1.8l1.7,1.3l-1.5,1.8zM1327.8,515.8l2.1,-1.5l0.9,1.4l-2,1.5zM1332.7,512.1l1.6,-1.9l1.3,1.1l-1.5,1.9zM1334.6,510.3l1.9,-0.9l0.7,1.6l-1.9,0.8zM1337.0,508.7l1.1,-1.3l1.3,1.2l-1.1,1.3zM1338.4,506.8l1.3,-1.2l1.3,1.3l-1.3,1.2zM1340.0,505.4l1.6,-1.8l1.4,1.3l-1.5,1.8zM1342.9,502.2l1.5,-1l1.2,1.7l-1.5,1.1zM1345.0,500.8l1.9,-1.2l1.1,1.7l-1.9,1.2zM1353.5,495.7l1.3,-1.2l1,1.2l-1.3,1.1zM1356.1,493.5l2.2,-0.8l0.6,1.4l-2.3,0.9zM1357.9,491.9l1.6,-1.3l1.1,1.4l-1.6,1.3zM1146.2,662.2l2.4,-1l0.8,2l-2.4,1zM1148.6,661.6l1.5,-1.4l1.6,1.6l-1.6,1.5zM1151.1,659.7l1.9,-1l0.8,1.5l-1.9,1zM1153.4,657.9l1.9,-1l0.8,1.4l-1.9,1zM1155.5,656.5l1.4,-1.8l1.5,1.2l-1.3,1.8zM1160.3,651.8l2.1,-1l0.9,1.9l-2.1,1zM1162.8,651.1l1.3,-1.4l1.4,1.2l-1.3,1.4zM1167.1,647.5l1.6,-1.8l1.6,1.5l-1.6,1.8zM1169.3,644.6l1.6,-0.8l0.9,2l-1.5,0.7zM1171.8,642.4l1.8,-1l1.1,2l-1.8,1zM1174.2,640.3l1.5,-0.8l1.1,2l-1.5,0.8zM1176.6,639.0l2.2,-1l0.9,2l-2.2,1zM1180.6,636.0l1.5,-1.7l1.3,1.2l-1.4,1.7zM1183.2,634.8l1.7,-1.6l1.2,1.4l-1.7,1.6zM1185.5,633.3l1.7,-1.6l1.1,1.2l-1.7,1.6zM1188.1,630.1l1.6,-1.1l1.1,1.5l-1.6,1.1zM1192.2,627.4l1.8,-1.7l1.2,1.3l-1.9,1.7zM1197.8,623.7l1.4,-1.2l1.1,1.4l-1.4,1.2zM1207.4,616.0l1.7,-1.6l1.1,1.2l-1.6,1.5zM1210.0,613.3l1.8,-0.9l1,2l-1.8,0.9zM1212.3,611.6l2.3,-0.9l0.6,1.7l-2.2,0.9zM1214.1,611.3l1.1,-1.4l1.2,1l-1,1.4zM1216.4,607.4l1.7,-1l1,1.9l-1.7,1zM1223.8,603.7l1.3,-1.7l1.4,1.1l-1.4,1.7zM1227.8,599.8l1,-1.5l1.2,0.9l-1,1.4zM1229.1,598.1l1.5,-1.8l1.4,1.1l-1.6,1.8zM1232.5,595.4l2.2,-1l0.8,1.7l-2.3,1zM1236.3,592.6l1.9,-1.1l1,1.7l-1.9,1.1zM1239.6,590.7l1.8,-1.1l0.8,1.4l-1.9,1zM1241.5,589.4l1.8,-1.2l0.8,1.4l-1.7,1.1zM1242.7,587.0l1.6,-1.3l1.4,1.7l-1.6,1.3zM1246.1,585.9l1.9,-1l0.8,1.5l-2,1zM1247.3,583.7l1.4,-1.6l1.7,1.5l-1.4,1.6zM1252.5,581.2l1.5,-2l1.4,1l-1.5,2.1zM1254.3,578.5l1.9,-1l0.9,1.9l-1.9,1zM1256.0,577.0l1.7,-1.2l0.8,1.2l-1.6,1.2zM1260.3,573.8l1.5,-2l1.4,1.1l-1.5,2zM1263.4,570.7l2.1,-1.2l0.9,1.7l-2.1,1.2zM1265.8,569.0l1.8,-1l0.9,1.7l-1.8,1zM1268.1,568.9l1.4,-1.8l1.7,1.4l-1.4,1.8zM1272.4,565.1l1.5,-1.8l1.5,1.3l-1.4,1.7zM1275.4,562.3l1.6,-0.7l0.8,2l-1.6,0.6zM1276.9,561.1l1.2,-1.3l1.6,1.4l-1.2,1.3zM1288.6,552.3l1.3,-1.3l1,1l-1.2,1.3zM1290.2,550.4l1.8,-1.6l1.4,1.4l-1.8,1.7zM1293.5,549.2l1.3,-1.4l1.2,1.1l-1.3,1.4zM1295.4,547.3l1.5,-1.8l1.5,1.4l-1.5,1.7zM1297.2,544.6l2.1,-1.2l0.8,1.5l-2.1,1.1zM1300.5,543.2l1.6,-2l1.2,1l-1.5,2zM1304.9,539.7l2.1,-1.4l1,1.4l-2.1,1.4zM1307.5,536.6l1.8,-0.9l0.8,1.7l-1.8,0.8zM1337.5,513.4l1.5,-0.7l0.7,1.4l-1.6,0.7zM1346.0,506.1l2,-0.8l0.7,1.9l-2,0.8zM1358.5,497.8l1.8,-0.7l0.7,1.8l-1.8,0.7zM1361.8,494.0l2.2,-1.2l1,1.9l-2.2,1.1zM1202.6,625.0l2,-0.8l0.8,2l-1.9,0.8zM1207.1,623.1l1,-1.5l1.6,1.1l-1,1.5zM1209.9,620.5l1.6,-1l1.2,2l-1.7,1zM1211.7,618.8l1.7,-0.9l0.7,1.4l-1.7,0.9zM1213.6,616.5l1.8,-1.3l1.3,1.8l-1.8,1.3zM1216.4,616.0l1.8,-1.8l1.7,1.6l-1.8,1.8zM1218.8,613.8l2.1,-1.2l1,1.8l-2.2,1.2zM1239.4,598.1l2.1,-1.3l0.9,1.5l-2,1.3zM1241.2,595.7l1.4,-1.4l1.2,1.2l-1.4,1.5zM1243.3,594.4l1.3,-1.1l1.2,1.3l-1.3,1.2zM1245.6,593.1l1.8,-1.4l1.3,1.7l-1.8,1.3zM1247.8,590.9l1.3,-1.1l1.2,1.4l-1.3,1.1zM1252.9,587.2l2,-1.3l1,1.6l-1.9,1.3zM1254.5,585.7l2.2,-1.2l0.9,1.9l-2.1,1.1zM1270.3,572.6l2,-1.1l0.8,1.6l-2.1,1zM1279.5,566.2l1.7,-1.7l1.2,1.2l-1.8,1.7zM1281.2,564.6l2.2,-1.2l0.8,1.7l-2.2,1.1zM1284.4,562.2l1.2,-1.6l1.3,1.1l-1.2,1.5zM1293.6,556.0l1.7,-1.9l1.5,1.4l-1.6,1.9zM1298.7,551.2l1.3,-1.5l1.5,1.2l-1.2,1.5zM1303.0,547.4l1.6,-0.8l0.8,1.5l-1.7,0.8zM1305.9,545.1l1.6,-0.9l1.1,1.9l-1.7,0.9zM1343.7,516.4l1.2,-1.6l1.6,1.3l-1.2,1.5zM1345.9,513.6l1.8,-0.8l0.9,2l-1.7,0.8zM1348.4,512.0l1.7,-1.2l1,1.4l-1.7,1.3zM1353.3,508.9l1.5,-1.5l1.4,1.3l-1.6,1.5zM1355.8,506.5l1.5,-1l1.2,1.8l-1.5,1zM1360.0,503.2l1.4,-1.5l1.5,1.4l-1.4,1.5zM1362.0,501.9l1.7,-1.3l0.9,1.2l-1.7,1.4zM1364.3,499.5l1.1,-1.3l1.4,1.2l-1.2,1.3zM1366.7,497.8l2.1,-1.2l0.8,1.5l-2.1,1.1zM1227.2,611.1l1.7,-0.8l0.8,1.7l-1.7,0.8zM1239.2,602.3l1.3,-1.5l1.3,1.1l-1.3,1.5zM1243.8,599.2l1.7,-1.2l1,1.5l-1.8,1.1zM1245.8,596.8l1.5,-1l0.8,1.3l-1.5,1zM1248.5,595.5l1.6,-1l1.1,1.9l-1.6,0.9zM1250.7,592.8l1.9,-1.4l1,1.5l-1.9,1.3zM1252.7,592.6l1.8,-1.5l1.3,1.5l-1.9,1.5zM1254.9,590.4l2,-1.4l1.1,1.6l-2,1.4zM1256.9,588.1l1.4,-1l1.2,1.5l-1.4,1.1zM1259.0,586.9l1.6,-1.3l1.1,1.3l-1.6,1.3zM1261.4,584.9l1.7,-0.8l0.7,1.4l-1.7,0.8zM1263.8,582.9l2,-0.9l0.7,1.5l-1.9,1zM1266.2,582.3l1.7,-1.6l1.1,1.1l-1.6,1.6zM1268.5,580.0l2.3,-1.1l0.9,1.7l-2.3,1.1zM1270.0,578.2l1.9,-1.3l1.2,1.8l-1.8,1.3zM1272.6,576.0l1.2,-1.3l1.1,1.2l-1.2,1.2zM1274.9,575.1l1.5,-1.8l1.6,1.2l-1.5,1.9zM1277.9,572.7l1.4,-1l1.1,1.6l-1.5,1zM1279.5,571.0l1.4,-1.2l1.2,1.6l-1.4,1.1zM1281.6,570.1l1.9,-1l0.7,1.5l-1.9,0.9zM1283.5,568.0l1.3,-1.5l1.7,1.5l-1.4,1.5zM1285.9,566.7l1.2,-1.2l1.2,1.3l-1.2,1.2zM1290.4,562.1l1.7,-1.3l1.4,1.9l-1.8,1.2zM1299.3,556.1l1.4,-1.9l1.3,1l-1.4,1.9zM1308.1,548.0l1.5,-1.6l1.5,1.4l-1.5,1.6zM1310.5,545.9l2.1,-1.1l1,1.8l-2.1,1.2zM1349.5,517.3l1.2,-1.5l1.3,1l-1.3,1.5zM1351.4,515.8l1.8,-1.8l1.4,1.4l-1.8,1.8zM1353.5,512.7l2.2,-1l0.9,2.1l-2.2,0.9zM1355.9,511.3l1.9,-1.3l0.9,1.3l-1.9,1.3zM1358.7,510.1l1.3,-1.9l1.7,1.2l-1.3,1.9zM1360.8,508.4l1.3,-1.1l1,1.3l-1.3,1.1zM1362.9,506.4l1.4,-1.7l1.5,1.2l-1.4,1.7zM1367.3,502.8l1.6,-1.6l1.2,1l-1.6,1.7zM1247.4,603.7l1.1,-1.5l1.8,1.3l-1,1.5zM1249.0,601.6l1.7,-1.9l1.6,1.4l-1.8,1.9zM1252.5,599.2l1.7,-1.2l0.9,1.4l-1.6,1.2zM1254.0,597.7l1.5,-1.2l1.3,1.8l-1.5,1.1zM1256.2,595.7l1.7,-1.5l1.1,1.1l-1.7,1.6zM1272.2,583.1l1.7,-0.7l0.8,1.8l-1.7,0.7zM1274.3,582.1l1.9,-1.1l0.8,1.5l-1.8,1.1zM1276.1,580.5l2,-1.1l0.9,1.6l-2,1.2zM1279.1,578.8l1.6,-0.6l0.7,1.6l-1.7,0.7zM1281.0,576.9l1.8,-1.6l1.1,1.2l-1.8,1.6zM1285.9,573.4l1.8,-1.5l1.3,1.6l-1.9,1.5zM1288.5,570.9l1.8,-1.1l1,1.5l-1.8,1.1zM1290.6,568.6l1.6,-1l0.9,1.4l-1.6,1.1zM1312.4,552.9l1.3,-1.2l1.3,1.4l-1.3,1.2zM1313.7,551.1l1.9,-1.5l1,1.3l-1.8,1.4zM1357.7,516.6l1.9,-1.7l1.4,1.5l-1.9,1.7zM1362.2,512.9l1.5,-1.6l1.4,1.2l-1.5,1.7zM1265.0,595.3l1.6,-1.4l1.4,1.7l-1.6,1.4zM1269.7,593.0l1.5,-1.4l1.5,1.7l-1.5,1.3zM1272.2,590.2l1.6,-1l1,1.6l-1.7,1zM1274.9,589.0l1.4,-1.9l1.7,1.3l-1.4,1.8zM1286.6,579.9l1.9,-1.8l1.3,1.4l-1.8,1.8zM1289.3,577.7l1.7,-1.1l0.9,1.4l-1.7,1.1zM1291.9,574.9l1.8,-0.8l0.9,1.8l-1.8,0.8zM1294.5,573.9l1.7,-1.8l1.3,1.1l-1.7,1.9zM1297.4,571.5l1.9,-0.8l0.5,1.4l-1.8,0.8zM1299.2,569.7l2,-1.3l1.1,1.8l-2.1,1.3zM1306.5,564.0l1.7,-0.7l0.8,2.1l-1.6,0.7zM1314.5,556.9l1.9,-1.1l0.7,1.4l-1.8,1zM1316.5,555.7l1.7,-1l0.8,1.4l-1.7,0.9zM1318.9,554.1l1.4,-1.3l1.4,1.6l-1.5,1.2zM1287.1,585.9l2.2,-0.8l0.6,1.6l-2.2,0.8zM1290.0,584.3l2.2,-1.1l0.7,1.5l-2.2,1zM1295.6,578.7l1.8,-0.9l0.9,2l-1.8,0.9zM1297.6,577.8l1.4,-1.5l1.7,1.5l-1.4,1.6zM1302.4,574.7l1.6,-1.9l1.7,1.4l-1.5,1.9zM1305.6,572.8l1,-1.4l1.3,0.9l-1,1.4zM1311.6,566.2l1.7,-1.1l1.2,1.9l-1.6,1.1zM1313.8,564.8l2.4,-1l0.7,1.6l-2.4,1.1zM1316.3,562.8l1.6,-0.7l0.8,1.9l-1.6,0.7zM1318.1,560.8l1.5,-0.7l0.8,1.7l-1.5,0.7zM1322.1,558.2l1.8,-1.9l1.6,1.6l-1.7,1.9zM1324.8,556.3l2,-1.6l1.1,1.4l-1.9,1.6zM1308.0,576.5l1.7,-1.7l1.3,1.3l-1.7,1.7zM1309.8,575.2l1.8,-1.3l1.2,1.6l-1.7,1.4zM1312.3,573.4l1.4,-1.2l1.4,1.6l-1.4,1.2zM1314.7,571.7l1.4,-1.7l1.4,1.2l-1.4,1.6zM1317.2,570.5l1.8,-1.8l1.2,1.1l-1.8,1.8zM1318.3,568.5l1.4,-1.5l1.7,1.4l-1.4,1.6zM1321.1,567.1l1.5,-1.9l1.3,1l-1.5,1.9zM1333.2,565.1l1.3,-1.9l1.5,1l-1.3,1.9zM1112.4,645.2l1.7,-1.5l1.6,1.9l-1.7,1.4zM1114.8,657.1l1.2,-1.2l1.3,1.3l-1.2,1.2zM1119.1,653.4l1.4,-1l1.2,1.8l-1.4,1zM1125.8,661.5l1.5,-1l1.1,1.7l-1.5,1zM1118.1,627.5l1.8,-1.3l1.3,1.7l-1.8,1.4zM1120.3,639.2l1.9,-1.2l0.9,1.6l-1.9,1.2zM1143.8,660.7l1.7,-1.5l1.6,1.8l-1.7,1.5zM1113.2,604.9l1.4,-1.2l1.2,1.5l-1.3,1.1zM1117.7,601.4l1.7,-1.2l1,1.4l-1.6,1.2zM1136.7,626.4l1.7,-1.3l1.2,1.6l-1.7,1.3zM1138.9,637.8l1.7,-1.3l1.4,1.9l-1.7,1.2zM1143.3,634.4l1.4,-1.4l1.8,1.8l-1.4,1.4zM1145.3,645.9l1.9,-1.2l1.4,2.1l-1.9,1.2zM1150.1,642.3l1.7,-1.1l1.2,2l-1.7,1.1zM1156.5,650.5l1.4,-1l1.5,2.1l-1.4,1zM1114.7,577.0l1.4,-1.2l1.4,1.5l-1.3,1.2zM1131.9,589.9l1.2,-1.1l1.7,1.9l-1.2,1.1zM1138.0,598.4l1.4,-1l1.4,2.1l-1.4,1zM1140.7,609.6l1.6,-1.1l1.4,2.1l-1.6,1.1zM1166.4,643.1l1.3,-0.9l1.2,1.7l-1.3,0.9zM1130.1,564.8l1.6,-1.3l1.4,1.8l-1.5,1.2zM1136.8,572.9l1.7,-1.2l1.3,1.7l-1.8,1.2zM1140.8,569.7l1.6,-1.3l1.5,1.9l-1.6,1.3zM1143.1,581.4l1.9,-1.3l1.1,1.6l-1.8,1.3zM1147.2,578.2l1.3,-1.3l1.6,1.7l-1.3,1.2zM1149.6,589.5l1.7,-1.3l1.4,1.9l-1.7,1.2zM1153.9,586.3l1.5,-1.1l1.1,1.7l-1.5,1.1zM1160.3,594.3l1.6,-1l1.3,2l-1.6,1zM1185.9,627.8l1.6,-1.1l1.3,1.7l-1.6,1.1zM1132.9,536.3l1.8,-1.4l1.1,1.4l-1.8,1.4zM1135.2,547.4l1.3,-1.2l1.8,1.8l-1.3,1.3zM1139.4,544.4l1.7,-1.2l1.1,1.5l-1.7,1.2zM1145.9,552.6l1.9,-1.2l1,1.5l-1.9,1.2zM1148.1,563.9l1.5,-1.1l1.4,2l-1.5,1.1zM1155.2,571.8l1.3,-0.8l1.1,1.9l-1.3,0.8zM1159.3,568.8l1.2,-1.1l1.4,1.7l-1.2,1zM1161.2,580.5l1.7,-1.5l1.6,1.7l-1.7,1.5zM1167.8,588.5l1.8,-1.1l1.2,1.9l-1.7,1.1zM1180.8,605.3l1.7,-1.2l1.1,1.6l-1.7,1.2zM1184.9,602.2l1.6,-1.3l1.1,1.4l-1.5,1.3zM1191.1,610.4l1.2,-1l1.5,1.7l-1.1,1zM1193.5,621.7l1.6,-1.3l1.6,2l-1.6,1.3zM1143.2,528.0l1.6,-1.3l1.4,1.6l-1.5,1.3zM1148.0,524.3l1.2,-1.1l1.5,1.6l-1.2,1.1zM1160.8,540.7l1.5,-1.1l1.4,1.9l-1.5,1.1zM1163.1,552.2l1.2,-1l1.6,1.9l-1.2,1zM1175.9,569.2l1.4,-1.3l1.5,1.5l-1.5,1.4zM1182.5,577.3l1.8,-1.1l0.9,1.5l-1.7,1.1zM1195.0,594.0l1.7,-1.3l1.4,1.8l-1.7,1.3zM1199.4,590.7l1.3,-1l1.2,1.7l-1.2,0.9zM1208.3,610.5l1.3,-1l1.2,1.5l-1.3,1zM1212.6,607.1l1.4,-0.9l1,1.5l-1.4,1zM1218.7,615.3l1.3,-0.9l1.5,2l-1.2,0.9zM1168.1,521.7l1.5,-1.4l1.8,1.8l-1.5,1.4zM1177.2,541.5l1.3,-1l1.2,1.6l-1.4,1zM1180.7,538.8l1.7,-1.5l1.3,1.6l-1.6,1.4zM1187.5,546.8l1.5,-1.1l1.1,1.5l-1.5,1.1zM1200.3,563.2l1.5,-1.4l1.8,1.8l-1.6,1.5zM1207.0,571.2l1.2,-0.9l1.4,2l-1.2,0.9zM1208.9,583.2l1.5,-1.1l1.3,1.7l-1.4,1.1zM1213.2,580.0l1.5,-1.1l1.1,1.5l-1.4,1.1zM1215.5,591.5l1.3,-1.1l1.3,1.6l-1.3,1.1zM1222.3,599.7l1.4,-1.2l1.1,1.4l-1.3,1.2zM1226.5,596.0l1.2,-1.1l1.7,1.9l-1.2,1.1zM1233.0,604.6l1.4,-1.3l1.3,1.5l-1.4,1.2zM1180.4,512.1l1.7,-1l1.1,1.8l-1.7,1.1zM1187.3,520.1l1.4,-1l1.3,1.8l-1.4,1zM1193.4,529.0l1.8,-1.4l1.1,1.4l-1.8,1.4zM1195.8,539.9l1.4,-0.9l1.3,2l-1.4,0.9zM1208.6,557.1l1.6,-1.4l1.2,1.4l-1.6,1.4zM1213.2,553.5l1.3,-1l1,1.5l-1.3,0.9zM1221.5,573.5l1.6,-1.5l1.5,1.7l-1.6,1.4zM1225.9,569.8l1.5,-1.2l1.6,1.9l-1.6,1.2zM1228.2,581.6l1.7,-1.1l1,1.6l-1.8,1zM1232.3,578.2l1.5,-1.1l1.3,1.8l-1.5,1.1zM1241.2,598.1l1.4,-1l1.1,1.5l-1.4,1zM1194.7,514.3l1.3,-0.9l1.3,1.8l-1.3,0.9zM1198.8,511.1l1.5,-1.3l1.6,1.8l-1.5,1.3zM1207.9,530.7l1.2,-0.9l1.4,1.6l-1.2,1zM1214.1,539.0l1.8,-1.3l1.4,1.9l-1.8,1.3zM1220.3,547.6l1.8,-1.3l1.3,1.7l-1.8,1.4zM1238.1,560.6l1.2,-1.1l1.3,1.6l-1.3,1zM1250.8,577.4l1.5,-1.2l1.2,1.4l-1.5,1.2zM1253.2,588.7l1.2,-1.1l1.4,1.6l-1.3,1.1zM1257.4,585.0l1.3,-0.9l1.4,2.1l-1.3,0.9zM1259.3,597.1l1.5,-1.1l1.3,1.8l-1.5,1zM1263.4,593.9l1.4,-1l1.3,1.8l-1.4,1zM1227.4,529.0l1.8,-1.3l1.1,1.4l-1.8,1.4zM1240.8,545.3l1.4,-1.1l1.1,1.3l-1.4,1.2zM1246.9,553.5l1.6,-1.5l1.7,1.8l-1.6,1.5zM1251.3,550.2l1.6,-1.2l1.2,1.5l-1.5,1.3zM1260.2,570.2l1.6,-1.4l1.2,1.3l-1.7,1.4zM1264.0,566.6l1.5,-1l1.4,2l-1.6,1zM1266.2,578.4l1.6,-1.4l1.5,1.8l-1.6,1.4zM1270.5,575.1l1.6,-1l1.1,1.6l-1.6,1zM1273.0,586.7l1.6,-1.3l1.2,1.4l-1.6,1.3zM1246.6,513.6l1.6,-1.3l1.6,1.9l-1.7,1.4zM1253.4,521.9l1.6,-1.1l1.1,1.6l-1.7,1.1zM1266.2,538.6l1.8,-1.4l1.2,1.6l-1.8,1.3zM1272.5,546.8l1.6,-1l1.1,1.7l-1.5,1zM1280.9,567.0l1.5,-1.4l1.6,1.7l-1.5,1.4zM1285.6,563.4l1.2,-1.2l1.5,1.6l-1.2,1.2zM1294.2,583.0l1.4,-1.1l1.6,1.9l-1.4,1.2zM1298.5,580.0l1.2,-0.9l1.2,1.5l-1.3,0.9zM1240.9,491.5l1.6,-0.9l1.1,1.7l-1.6,1zM1251.4,496.5l1.7,-1.2l1.4,2l-1.8,1.2zM1253.9,507.9l1.9,-1.3l1.3,2l-1.9,1.2zM1258.0,504.8l1.2,-1.1l1.6,1.9l-1.1,1zM1260.3,516.7l1.2,-1.1l1.2,1.4l-1.2,1.1zM1264.6,513.2l1.2,-1.2l1.5,1.6l-1.1,1.1zM1270.7,521.3l1.5,-1l1.5,2.1l-1.5,1zM1277.5,529.7l1.6,-1.6l1.7,1.7l-1.6,1.6zM1280.1,540.7l1.5,-0.9l1.2,2l-1.5,0.9zM1290.0,546.2l1.8,-1.3l1.5,2.1l-1.8,1.3zM1274.5,505.0l2,-1.2l1.2,2.1l-1.9,1.2zM1278.7,502.4l1.6,-1.5l1.2,1.4l-1.5,1.4zM1280.7,513.5l1.9,-1.1l1.2,2l-1.9,1.1zM1285.5,510.3l1.4,-1.1l1.1,1.4l-1.3,1.1zM1294.2,529.6l1.3,-0.8l1.3,2.1l-1.2,0.8zM1298.2,527.2l1.6,-1.5l1.2,1.2l-1.6,1.6zM1304.6,535.0l1.4,-0.8l1.1,1.8l-1.4,0.9zM1306.8,546.8l1.7,-1.1l1,1.5l-1.7,1.2zM1281.3,487.1l1.3,-1.3l1.2,1.3l-1.3,1.3zM1287.5,495.3l1.8,-1.1l0.9,1.4l-1.7,1.2zM1300.5,511.6l1.5,-1l1.1,1.8l-1.4,1zM1304.9,508.4l1.4,-1.1l1.1,1.5l-1.3,1.1zM1306.4,520.3l1.6,-1.5l1.7,1.8l-1.6,1.6zM1310.8,516.8l1.7,-1.4l1.6,1.8l-1.6,1.5zM1313.1,528.5l1.7,-1.6l1.6,1.7l-1.7,1.6zM1317.2,525.3l1.7,-1.3l1.3,1.7l-1.7,1.2zM1319.6,496.8l1.7,-1.1l1.1,1.5l-1.7,1.2zM1321.8,508.2l1.8,-1.2l1.2,1.9l-1.8,1.2zM1328.1,516.3l1.8,-1.1l1.4,2.2l-1.8,1.1zM1322.8,480.8l1.8,-1.4l1.4,1.9l-1.7,1.3zM1329.4,489.2l1.3,-1.2l1.5,1.6l-1.4,1.2zM1339.7,494.8l1.6,-1.5l1.2,1.2l-1.6,1.6zM1346.5,502.2l1.3,-0.9l1.3,2l-1.3,0.8zM1349.0,513.8l1.4,-1l1.2,1.7l-1.4,1zM1353.1,510.4l1.3,-1l1.4,1.9l-1.2,1zM1347.0,488.6l1.3,-1l1.4,1.8l-1.3,1zM1363.7,502.1l1.8,-1.2l1.3,1.9l-1.8,1.2zM1341.8,493.7l3.7,-4.4l1,0.9l-3.6,4.4zM1340.2,500.4l4.3,-5.1l1,0.9l-4.2,5.1zM1345.7,493.8l3.4,-4l1.1,0.9l-3.4,4zM1342.7,502.3l2.6,-3.1l1,0.9l-2.6,3.1zM1346.4,497.8l5.8,-6.9l1.1,0.9l-5.8,6.9zM1344.9,504.4l5.9,-7l1.1,0.9l-5.9,7zM1351.8,496.2l3.1,-3.7l1.1,0.9l-3.1,3.7zM1347.5,506.2l5.8,-6.9l1,0.9l-5.8,6.9zM1354.2,498.2l3.8,-4.5l1.1,0.9l-3.8,4.5zM1349.5,508.7l3.1,-3.8l1.1,0.9l-3.2,3.8zM1353.9,503.3l5.7,-6.7l1,0.9l-5.6,6.7zM1351.9,510.5l6,-7l1,0.9l-5.9,7zM1358.9,502.2l4.8,-5.7l1.1,0.9l-4.8,5.7zM1354.2,512.7l4,-4.8l1.1,0.9l-4,4.8zM1359.1,506.8l3.2,-3.8l1,0.9l-3.1,3.8zM1363.6,501.5l3.3,-4l1.1,0.9l-3.4,4zM1356.4,514.9l4.2,-5l1,0.9l-4.2,5zM1361.4,508.9l4.8,-5.7l1,0.9l-4.7,5.7zM1367.5,501.6l2.2,-2.6l1.1,0.9l-2.2,2.6zM1358.6,517.1l5.9,-7.1l1.1,0.9l-5.9,7.1zM1365.2,509.2l3.5,-4.1l1,0.9l-3.4,4.1zM1369.5,504.1l3.2,-3.9l1.1,0.9l-3.3,3.9zM1361.3,518.6l3,-3.5l1.1,0.9l-3,3.5zM1365.0,514.2l2.9,-3.4l1.1,0.9l-2.9,3.4zM1368.7,509.8l4.5,-5.3l1.1,0.9l-4.5,5.3zM1062.9,709.8l1.3,-1.3l1.1,1.2l-1.4,1.2zM1054.6,703.6l1.9,-1.3l1,1.4l-2,1.3zM1058.2,692.5l0.8,-1.5l1.5,0.7l-0.8,1.5zM1080.0,684.6l1.5,-2.1l1.2,1l-1.6,2zM1104.6,643.8l1.3,-2l1.7,1.1l-1.3,2zM1098.8,648.4l1.1,-1.2l1.1,1.1l-1.1,1.1zM1081.4,664.9l1.7,-1.3l0.8,1.1l-1.8,1.3zM1073.9,700.2l1.8,-1.1l0.9,1.5l-1.8,1.2zM1080.8,669.1l0.5,-1.6l1.4,0.4l-0.6,1.7zM1064.5,692.5l1,-2l1.4,0.6l-1,2zM1095.6,649.8l0.7,-1.5l1.8,0.8l-0.6,1.5zM1085.3,658.4l1.5,-0.8l0.9,1.6l-1.5,0.8zM1091.6,655.2l1.2,-1.3l1.4,1.3l-1.2,1.4zM1073.7,678.7l0.6,-1.9l1.7,0.6l-0.6,1.8zM1075.7,683.1l1.6,-1.3l1.2,1.4l-1.6,1.4zM1068.5,679.5l0.9,-1.3l1.4,1l-1,1.3zM1098.0,648.2l1.8,-0.9l0.8,1.6l-1.7,0.9zM1070.8,701.7l1.1,-1.5l1.5,1.1l-1.2,1.5zM1079.2,670.5l1.5,-1.8l1.3,1.1l-1.4,1.8zM1086.1,684.8l1.5,-1.2l1,1.2l-1.6,1.2zM1090.0,671.4l2,-1.1l0.8,1.6l-2,1.1zM1101.3,640.0l0.6,-1.7l1.8,0.7l-0.6,1.7zM1091.4,661.4l1.4,-1.8l1.5,1.1l-1.4,1.8zM1048.9,711.8l1.4,-0.9l0.9,1.3l-1.4,0.9zM1052.1,702.6l1.2,-1.6l1.1,0.8l-1.2,1.6zM1104.4,639.0l2,-1.6l0.9,1.2l-2,1.6zM1111.8,658.1l1.7,-1l1,1.7l-1.7,1zM1066.4,684.0l2.1,-1.3l0.7,1.2l-2.1,1.2zM1069.6,684.0l0.7,-1.8l1.8,0.7l-0.6,1.8zM1105.4,620.7l1.3,-2.2l1.2,0.8l-1.3,2.1zM1098.1,668.1l1.2,-1.1l1,1l-1.2,1.2zM1074.0,675.6l1.4,-2.1l1.5,1l-1.4,2.1zM1113.9,653.1l1.3,-0.9l0.8,1.2l-1.4,0.9zM1081.7,679.2l1.1,-1.2l1.3,1.3l-1.2,1.1zM1071.3,691.1l1.1,-2.3l1.6,0.8l-1,2.3zM1064.7,686.6l1.3,-1.7l1.5,1l-1.3,1.8zM1087.6,670.2l1.8,-1.5l0.8,1l-1.7,1.5zM1092.7,679.7l0.8,-1.7l1.2,0.6l-0.8,1.7zM1057.2,701.6l1.2,-1.5l1,0.8l-1.1,1.5zM1053.3,698.7l1.5,-2.1l1.6,1l-1.5,2.1zM1064.6,706.9l0.9,-2.2l1.6,0.6l-0.9,2.3zM1063.6,709.6l1,-1.6l1.6,0.9l-1.1,1.7zM1065.2,699.7l1,-2.4l1.5,0.6l-1,2.4zM1046.3,707.7l1.8,-1.1l0.9,1.7l-1.8,1zM1087.8,663.0l1,-2.3l1.4,0.6l-1,2.3zM1093.0,673.1l1.1,-1.5l1.2,0.9l-1.1,1.5zM1084.3,672.5l1.7,-0.9l0.7,1.2l-1.8,1zM1105.1,634.4l1,-1.8l1.8,0.9l-1,1.9zM1081.9,686.4l0.9,-1.5l1.4,1l-1,1.4zM1063.0,692.5l1.9,-1.4l0.8,1.1l-1.9,1.5zM1116.0,660.4l1.8,-1.8l1.4,1.4l-1.8,1.8zM1095.4,661.4l1.1,-2.2l1.6,0.7l-1.2,2.2zM1099.0,671.1l1.7,-1.9l1.1,0.9l-1.7,2zM1058.3,700.2l0.7,-1.9l1.7,0.6l-0.7,1.9zM1080.0,668.6l1.1,-2.4l1.8,0.8l-1,2.3zM1133.8,678.3l1.4,-1.6l1.3,1.1l-1.4,1.6zM1132.0,690.5l0.8,-2.4l1.3,0.4l-0.8,2.4zM1121.8,700.5l1.1,-2.1l1.5,0.8l-1.1,2zM1127.6,691.4l1.1,-1.3l1.5,1.3l-1.1,1.3zM1134.1,675.9l1.3,-1l1.2,1.5l-1.3,1zM1131.7,668.4l2.1,-1.1l0.8,1.5l-2.1,1.2zM1113.5,690.1l1.7,-1.6l1.1,1.1l-1.8,1.7zM1109.3,707.5l2,-1.2l0.8,1.3l-2.1,1.2zM1119.0,692.2l1.5,-1.4l1.1,1.2l-1.5,1.4zM1118.7,683.3l1.8,-1l0.9,1.5l-1.8,1zM1130.6,690.6l1.6,-1.2l1,1.5l-1.5,1.1zM1131.9,670.6l1.4,-0.8l0.9,1.5l-1.4,0.8zM1138.1,676.7l1.9,-1.8l1.1,1.1l-1.9,1.8zM1118.1,675.9l0.7,-1.5l1.4,0.6l-0.7,1.5zM1131.1,685.5l0.6,-1.5l1.7,0.6l-0.5,1.6zM1140.5,678.7l1.1,-1.2l1.1,1.1l-1.1,1.2zM1106.9,692.0l0.9,-1.7l1.3,0.7l-0.9,1.6zM1119.8,691.5l1,-1.8l1.4,0.8l-1,1.8zM1118.7,686.3l1.1,-1.9l1.7,1l-1.1,1.9zM1132.0,680.1l1,-1.4l1.2,0.9l-1,1.4zM1128.0,693.0l1.3,-2.1l1.7,1l-1.3,2.1zM1122.1,690.3l0.7,-2.3l1.3,0.5l-0.7,2.2zM1131.0,671.5l1.3,-1.3l1.3,1.3l-1.3,1.3zM1107.2,705.8l0.8,-1.5l1.8,1l-0.9,1.5zM1143.8,674.7l1.5,-1l0.7,1.2l-1.5,0.9zM1126.5,668.0l1.2,-1.5l1.5,1.2l-1.1,1.5zM1130.9,683.3l0.9,-1.6l1.3,0.7l-1,1.7zM1125.7,672.5l1.2,-1.3l1.2,1.2l-1.2,1.3zM1131.6,676.7l1.6,-1.1l0.8,1.3l-1.6,1.1zM1112.8,684.3l0.7,-1.9l1.9,0.6l-0.7,2zM1128.7,689.1l0.8,-1.9l1.7,0.6l-0.8,1.9zM1118.4,708.2l1.3,-1.3l1.2,1.2l-1.2,1.3zM1113.9,708.9l1.2,-1.8l1,0.7l-1.1,1.8zM1135.6,674.7l1.5,-1.4l1,1.1l-1.5,1.4zM1131.3,689.0l1.4,-1.8l1.2,1l-1.4,1.8zM1102.8,699.0l1.4,-1.8l1.5,1.1l-1.3,1.9zM1133.4,683.0l0.9,-1.8l1.2,0.6l-0.8,1.8zM1127.2,689.6l1.4,-1.7l1,0.8l-1.3,1.7zM1163.4,652.3l1.7,-1.3l0.9,1.2l-1.6,1.3zM1162.9,654.7l1.7,-0.7l0.6,1.6l-1.8,0.6zM1206.6,624.8l2,-0.4l0.4,1.6l-2.1,0.4zM1180.1,638.5l1.9,-0.7l0.8,1.8l-1.9,0.8zM1180.7,639.4l2.3,-0.5l0.4,1.9l-2.3,0.5zM1161.6,654.8l2,-1.5l0.9,1.2l-2.1,1.5zM1160.3,653.9l1.6,-0.7l0.7,1.5l-1.6,0.7zM1198.4,633.1l1.4,-1.7l1.2,1l-1.4,1.7zM1161.7,653.6l2.3,-0.6l0.4,1.6l-2.3,0.6zM1160.4,656.2l1.5,-1.9l1.5,1.2l-1.5,1.8zM1201.4,630.5l1.4,-1l1,1.5l-1.3,1zM1197.3,633.3l1.5,-1.4l0.9,1.1l-1.5,1.3zM1186.7,637.6l1.9,-1l0.6,1.2l-1.9,1zM1215.7,624.1l1.5,-1.5l1.2,1.1l-1.5,1.6zM1195.2,630.7l2.2,-1.2l0.8,1.5l-2.1,1.2zM1177.6,642.2l2.3,-1l0.7,1.6l-2.2,1.1zM1222.6,617.8l2.1,-0.6l0.5,1.8l-2.1,0.5zM1189.1,633.4l1.6,-1.2l1.2,1.5l-1.6,1.3zM1206.4,624.3l1.7,-1.5l1.4,1.4l-1.7,1.6zM1171.9,649.9l1.5,-1.3l1.2,1.5l-1.6,1.2zM1175.8,644.8l1.8,-1.8l1.2,1.2l-1.9,1.7zM1196.0,631.3l2.2,-0.5l0.3,1.8l-2.1,0.4zM1162.5,651.6l2.2,-0.9l0.5,1.4l-2.2,0.8zM1221.5,620.9l1.5,-1.5l1.3,1.2l-1.5,1.6zM1161.9,656.8l1.6,-0.2l0.2,1.5l-1.6,0.3zM1216.2,620.3l1.7,-0.7l0.7,1.6l-1.6,0.8zM1163.8,652.3l1.4,-1.1l1.2,1.6l-1.4,1.1zM1172.3,645.3l1.7,-0.4l0.4,1.3l-1.8,0.4zM1218.8,621.0l1.7,-0.5l0.5,1.6l-1.8,0.5zM1209.8,626.4l2.1,-1.4l1,1.7l-2.1,1.3zM1181.8,662.3l4.1,-1.3l0.5,1.5l-4.2,1.3zM1187.0,660.7l7.4,-2.3l0.4,1.5l-7.4,2.3zM1195.3,658.1l5.6,-1.7l0.4,1.5l-5.5,1.7zM1202.4,655.9l5.6,-1.7l0.5,1.6l-5.6,1.7zM1209.6,653.8l6,-1.9l0.5,1.5l-6.1,1.9zM1217.1,651.5l10.1,-3.1l0.4,1.5l-10.1,3.1zM1229.3,647.7l5.7,-1.7l0.4,1.5l-5.7,1.8zM1236.3,645.6l7.1,-2.2l0.5,1.5l-7.2,2.2zM1183.6,664.9l6.5,-2l0.5,1.6l-6.6,2zM1191.4,662.6l9.1,-2.8l0.4,1.5l-9.1,2.8zM1201.7,659.4l4.2,-1.3l0.5,1.5l-4.2,1.3zM1212.7,656.1l7.5,-2.3l0.5,1.5l-7.6,2.3zM1227.2,651.6l9.1,-2.8l0.5,1.6l-9.1,2.7zM1237.8,648.4l4.6,-1.4l0.4,1.5l-4.5,1.4zM1244.5,646.3l4.3,-1.3l0.5,1.5l-4.4,1.4zM1191.4,665.8l7.4,-2.3l0.5,1.6l-7.4,2.2zM1200.9,662.9l6.4,-2l0.5,1.5l-6.5,2zM1209.3,660.3l6.9,-2.1l0.4,1.6l-6.9,2.1zM1217.4,657.8l9.5,-2.8l0.4,1.5l-9.4,2.9zM1228.3,654.5l4.7,-1.4l0.4,1.5l-4.6,1.4zM1234.0,652.8l7,-2.2l0.4,1.6l-6.9,2.1zM1242.1,650.3l4.5,-1.4l0.5,1.5l-4.5,1.4zM1199.2,666.6l7.4,-2.2l0.5,1.5l-7.4,2.3zM1207.7,664.1l5.9,-1.8l0.5,1.5l-5.9,1.8zM1215.7,661.6l4.2,-1.3l0.4,1.6l-4.2,1.2zM1221.3,659.9l4.7,-1.4l0.5,1.5l-4.8,1.4zM1227.9,657.9l6.1,-1.9l0.5,1.5l-6.1,1.9zM1235.4,655.6l6.7,-2.1l0.4,1.6l-6.6,2zM1243.7,653.0l4.5,-1.3l0.5,1.5l-4.5,1.4zM1250.0,651.1l5.1,-1.5l0.5,1.5l-5.1,1.6zM1204.2,668.4l5.9,-1.9l0.5,1.6l-5.9,1.8zM1211.2,666.2l8.2,-2.5l0.5,1.5l-8.2,2.6zM1221.3,663.1l7.1,-2.1l0.4,1.5l-7,2.2zM1229.4,660.7l7.5,-2.3l0.4,1.5l-7.5,2.3zM1238.3,657.9l7.6,-2.3l0.4,1.6l-7.6,2.3zM1248.0,655.0l8.3,-2.6l0.5,1.6l-8.4,2.5zM1210.5,669.7l5.5,-1.7l0.4,1.5l-5.4,1.7zM1217.3,667.6l6.7,-2l0.4,1.5l-6.7,2zM1233.9,662.5l5.5,-1.7l0.5,1.6l-5.5,1.7zM1241.1,660.3l9.6,-2.9l0.4,1.5l-9.5,2.9zM1251.7,657.1l5.1,-1.6l0.5,1.5l-5.1,1.6zM1215.7,671.3l9.2,-2.8l0.5,1.5l-9.2,2.9zM1226.0,668.2l9.2,-2.8l0.5,1.5l-9.3,2.8zM1236.4,665.0l9.6,-2.9l0.5,1.5l-9.6,2.9zM1247.8,661.5l5.4,-1.6l0.4,1.5l-5.3,1.7zM1254.5,659.5l2.8,-0.9l0.5,1.5l-2.8,0.9zM1221.9,672.7l9.1,-2.8l0.5,1.5l-9.1,2.8zM1232.7,669.4l8.2,-2.5l0.5,1.5l-8.2,2.5zM1252.3,663.4l5.9,-1.8l0.5,1.5l-5.9,1.8zM1227.4,674.2l5.9,-1.8l0.5,1.6l-6,1.8zM1245.0,668.9l8.3,-2.6l0.4,1.6l-8.3,2.5zM1254.4,666.0l4.4,-1.4l0.5,1.6l-4.5,1.3zM1233.2,675.7l8.9,-2.7l0.5,1.5l-8.9,2.7zM1243.6,672.5l7.2,-2.2l0.5,1.6l-7.3,2.2zM1252.8,669.7l4.7,-1.4l0.4,1.5l-4.6,1.4zM1238.7,677.3l8.3,-2.6l0.5,1.6l-8.3,2.5zM1248.2,674.4l4.2,-1.3l0.5,1.5l-4.3,1.3zM1236.4,677.9l3.9,1.7l-0.6,1.5l-4,-1.8zM1242.0,680.4l8.4,3.7l-0.7,1.5l-8.3,-3.8zM1251.5,684.6l5.7,2.6l-0.6,1.4l-5.7,-2.5zM1266.0,691.0l1.6,0.8l-0.7,1.4l-1.6,-0.7zM1221.1,674.4l4.3,1.9l-0.7,1.4l-4.2,-1.9zM1235.5,680.8l8.8,3.9l-0.6,1.5l-8.9,-4zM1245.3,685.1l8.1,3.6l-0.7,1.5l-8,-3.6zM1254.4,689.2l5.5,2.4l-0.7,1.5l-5.4,-2.5zM1261.5,692.3l3.8,1.7l-0.7,1.5l-3.7,-1.7zM1220.5,677.4l6.4,2.8l-0.6,1.5l-6.5,-2.9zM1228.9,681.1l3.9,1.8l-0.6,1.4l-4,-1.7zM1234.3,683.5l8.7,3.9l-0.6,1.5l-8.8,-3.9zM1257.2,644.9l5.9,-2.4l0.6,1.5l-5.9,2.4zM1266.5,641.9l8.9,4.9l-0.8,1.4l-8.9,-4.9zM1276.2,647.2l3.8,2.1l-0.8,1.4l-3.8,-2.1zM1281.0,650.4l3.2,7.2l-1.5,0.6l-3.2,-7.2zM1284.6,658.4l3.7,8.3l-1.5,0.6l-3.7,-8.3zM1288.7,667.5l2.7,6l-1.5,0.7l-2.7,-6.1zM1292.5,677.4l-1.7,4.2l-1.5,-0.6l1.7,-4.2zM1290.5,682.4l-1.7,4.4l-1.5,-0.5l1.7,-4.4zM1287.7,688.1l-6.7,3.1l-0.6,-1.4l6.7,-3.2zM1278.1,691.9l-6.1,-2.8l0.7,-1.4l6.1,2.7zM1271.2,688.7l-1.9,-0.8l0.7,-1.5l1.9,0.9zM1268.3,686.8l-3,-6.9l1.5,-0.6l3,6.9zM1264.9,679.1l-2.2,-5l1.5,-0.7l2.2,5.1zM1262.4,673.2l-1.5,-3.2l1.5,-0.7l1.4,3.3zM1260.6,668.8l-1.9,-10.1l1.5,-0.3l2,10.1zM1258.5,657.8l-1.5,-7.7l1.6,-0.3l1.5,7.7zM1256.9,649.3l-0.5,-2.9l1.5,-0.3l0.6,2.9zM1259.2,647.6l6.7,-2.6l0.6,1.5l-6.7,2.6zM1267.5,645.2l9.3,5.9l-0.9,1.3l-9.2,-5.8zM1279.9,653.6l2.2,4.8l-1.5,0.7l-2.1,-4.9zM1282.5,659.3l2.4,5.4l-1.4,0.7l-2.5,-5.5zM1285.3,665.5l2.1,4.7l-1.5,0.7l-2.1,-4.7zM1287.8,671.0l1.5,3.5l-1.5,0.6l-1.5,-3.4zM1289.4,676.0l-2.2,6.9l-1.6,-0.5l2.3,-6.9zM1285.7,685.4l-4.2,1.9l-0.7,-1.4l4.2,-2zM1277.3,688.5l-7.2,-3.9l0.8,-1.4l7.2,3.9zM1269.2,683.5l-2.6,-7.2l1.5,-0.5l2.6,7.1zM1266.3,675.5l-2,-5.7l1.5,-0.5l2,5.7zM1264.0,668.8l-2.8,-9.9l1.5,-0.4l2.8,9.9zM1260.9,658.0l-2.5,-8.8l1.6,-0.4l2.5,8.8zM1261.3,650.4l5.7,-2.1l0.5,1.5l-5.7,2.1zM1268.6,648.5l6.3,4.9l-1,1.2l-6.3,-4.8zM1275.6,653.9l2.4,1.9l-1,1.2l-2.4,-1.8zM1278.9,656.8l3.1,6.9l-1.5,0.7l-3.1,-6.9zM1282.3,664.5l2.6,5.7l-1.5,0.7l-2.5,-5.7zM1285.2,671.0l1,2.1l-1.5,0.7l-0.9,-2.1zM1286.3,674.6l-1.6,6.8l-1.6,-0.4l1.7,-6.8zM1283.7,682.7l-5.3,2.4l-0.7,-1.4l5.3,-2.5zM1276.6,685.1l-3.9,-2.6l0.9,-1.3l3.9,2.6zM1270.1,680.1l-1.2,-4.9l1.6,-0.4l1.1,4.9zM1268.7,674.3l-1.1,-4.7l1.6,-0.3l1.1,4.7zM1267.3,668.8l-3.8,-9.4l1.5,-0.6l3.8,9.4zM1263.2,658.6l-2.7,-6.6l1.5,-0.6l2.7,6.6zM1177.8,667.9l8.3,-1l0.2,1.6l-8.3,1zM1187.0,666.8l3.4,-0.5l0.2,1.6l-3.4,0.5zM1191.8,666.7l6.2,4.1l-0.9,1.3l-6.1,-4.1zM1198.8,671.3l4.9,3.2l-0.9,1.4l-4.9,-3.3zM1204.5,675.0l8.1,5.4l-0.9,1.3l-8.1,-5.4zM1214.3,682.8l-2.7,7.6l-1.5,-0.5l2.6,-7.7zM1211.3,691.2l-1.4,4.2l-1.5,-0.6l1.4,-4.1zM1209.3,696.5l-3.7,4.2l-1.2,-1l3.7,-4.3zM1205.0,701.4l-3.8,4.3l-1.2,-1l3.8,-4.3zM1197.8,708.3l-4.3,-1.3l0.4,-1.5l4.3,1.2zM1192.6,706.8l-6.4,-1.8l0.4,-1.6l6.5,1.9zM1185.3,704.7l-3,-0.9l0.4,-1.5l3.1,0.9zM1181.3,703.6l-7.9,-2.2l0.4,-1.6l8,2.2zM1171.0,699.5l0.6,-5.7l1.6,0.2l-0.6,5.7zM1171.7,692.9l0.7,-6.5l1.6,0.1l-0.7,6.6zM1172.5,685.5l0.8,-7.1l1.6,0.1l-0.8,7.1zM1173.4,677.5l0.2,-2.5l1.6,0.2l-0.2,2.5zM1174.0,673.8l2.5,-4.9l1.4,0.7l-2.5,4.9zM1179.6,670.6l6.4,-0.6l0.2,1.6l-6.4,0.6zM1186.9,669.9l3.3,-0.4l0.2,1.6l-3.3,0.4zM1191.6,669.9l4.3,2.7l-0.8,1.3l-4.3,-2.7zM1196.7,673.1l3.4,2.1l-0.8,1.4l-3.5,-2.2zM1200.9,675.7l4.5,2.8l-0.8,1.4l-4.5,-2.8zM1206.2,679.0l3.7,2.4l-0.8,1.3l-3.8,-2.3zM1211.1,683.5l-3.1,8l-1.5,-0.5l3.1,-8.1zM1206.3,695.2l-5,5.9l-1.2,-1l5,-5.9zM1200.8,701.8l-2.6,3l-1.3,-1l2.6,-3zM1196.5,705.3l-6,-2l0.5,-1.5l6,2zM1189.7,703.0l-6,-2l0.5,-1.5l6,2zM1182.8,700.8l-7.6,-1.6l0.3,-1.5l7.6,1.5zM1173.6,697.7l1,-8.5l1.6,0.2l-1,8.5zM1174.7,688.3l0.7,-5.4l1.6,0.2l-0.7,5.4zM1175.5,682.1l0.5,-4.5l1.6,0.2l-0.5,4.4zM1176.4,675.9l1.9,-4.3l1.4,0.6l-1.8,4.3zM1181.4,673.3l6.1,-0.4l0.1,1.6l-6.1,0.4zM1191.4,673.0l6.6,3.9l-0.8,1.4l-6.6,-3.9zM1198.7,677.4l4.2,2.4l-0.8,1.4l-4.2,-2.5zM1203.7,680.3l3.7,2.2l-0.8,1.4l-3.7,-2.2zM1207.9,684.2l-3.1,7l-1.4,-0.6l3.1,-7.1zM1203.4,694.0l-2.6,3.1l-1.2,-1l2.6,-3.2zM1200.2,697.8l-3.3,4.1l-1.2,-1l3.3,-4.1zM1195.2,702.3l-6.3,-2.6l0.6,-1.4l6.3,2.5zM1188.1,699.4l-3.1,-1.3l0.6,-1.5l3.1,1.3zM1184.3,697.9l-6.9,-0.6l0.1,-1.6l6.9,0.7zM1176.2,695.8l0.8,-5.9l1.6,0.2l-0.8,5.9zM1177.2,689.0l1.2,-8.9l1.6,0.3l-1.3,8.8zM1178.8,678.0l1.2,-3.6l1.6,0.5l-1.3,3.6zM1183.2,676.0l6.7,-0.1l-0,1.6l-6.7,0.1zM1191.2,676.2l5.6,3l-0.7,1.4l-5.7,-3zM1197.6,679.6l6.6,3.6l-0.7,1.4l-6.6,-3.5zM1204.8,684.9l-3.7,6.9l-1.4,-0.8l3.6,-6.8zM1200.5,692.7l-4.9,6.2l-1.2,-1l4.8,-6.2zM1193.9,699.3l-5.8,-3.1l0.8,-1.4l5.7,3.1zM1185.8,695.1l-5.7,0.2l-0.1,-1.6l5.7,-0.2zM1178.8,693.9l1.1,-6.5l1.6,0.2l-1.1,6.6zM1180.1,686.5l0.9,-5.4l1.6,0.3l-0.9,5.4zM1181.2,680.1l0.6,-3l1.6,0.4l-0.7,2.9zM1203.8,697.3l2,-2.9l1.3,1l-2,2.8zM1204.6,707.4l2.8,-4.1l1.4,0.9l-2.9,4.1zM1211.4,697.6l0.8,-1.1l1.3,0.9l-0.8,1.2zM1207.7,708.5l2.9,-4.2l1.3,0.9l-2.9,4.3zM1211.8,702.6l3.7,-5.3l1.3,1l-3.7,5.3zM1211.0,709.3l4.3,-6.2l1.3,1l-4.2,6.1zM1214.9,709.4l4,-5.7l1.3,0.9l-4,5.7zM1219.7,702.6l1.9,-2.8l1.3,1l-1.9,2.7zM1178.2,719.4l1.3,-2.6l1.4,0.8l-1.3,2.5zM1184.4,714.1l2.9,-5.6l1.4,0.8l-2.9,5.6zM1182.9,723.3l5.5,-10.4l1.4,0.7l-5.5,10.4zM1189.1,711.6l1.8,-3.4l1.4,0.7l-1.8,3.5zM1184.7,726.2l3.1,-5.9l1.5,0.8l-3.2,5.9zM1188.8,718.5l4.4,-8.3l1.4,0.8l-4.4,8.3zM1187.1,728.2l4.4,-8.3l1.4,0.8l-4.4,8.2zM1192.1,718.8l4.9,-9.3l1.4,0.8l-4.9,9.3zM1189.5,729.9l3.1,-5.8l1.4,0.8l-3.1,5.8zM1193.3,722.8l5.4,-10l1.4,0.8l-5.4,10zM1192.4,730.9l3,-5.6l1.4,0.8l-3,5.6zM1196.4,723.5l3.6,-6.8l1.4,0.7l-3.6,6.8zM1200.6,715.5l0.7,-1.4l1.5,0.8l-0.8,1.4zM1195.6,731.4l2.7,-5.1l1.4,0.8l-2.7,5zM1199.1,724.7l3.2,-6l1.4,0.8l-3.2,5.9zM1198.9,731.5l4.7,-8.8l1.4,0.8l-4.7,8.8zM1190.1,739.9l5.5,-2.6l0.7,1.4l-5.6,2.6zM1188.1,744.0l8.2,-3.9l0.7,1.5l-8.2,3.8zM1197.6,739.5l5.9,-2.7l0.6,1.5l-5.8,2.7zM1186.7,747.8l6.9,-3.2l0.6,1.5l-6.8,3.2zM1195.2,743.9l8,-3.8l0.7,1.5l-8,3.7zM1185.2,751.7l9,-4.2l0.7,1.5l-9,4.2zM1206.7,741.7l2.2,-1l0.7,1.4l-2.2,1.1zM1183.2,755.9l4.6,-2.2l0.7,1.5l-4.6,2.1zM1189.7,752.8l7.6,-3.5l0.7,1.4l-7.6,3.6zM1198.6,748.7l6.4,-3l0.6,1.5l-6.3,2.9zM1206.8,744.9l4.2,-2l0.6,1.5l-4.1,1.9zM1183.4,759.0l6.2,-2.9l0.7,1.4l-6.2,2.9zM1190.9,755.4l8.1,-3.7l0.6,1.5l-8,3.7zM1200.5,751.0l3.8,-1.8l0.7,1.5l-3.8,1.7zM1205.6,748.6l8.2,-3.8l0.7,1.4l-8.3,3.9zM1182.9,762.4l3.8,-1.8l0.7,1.5l-3.9,1.8zM1188.4,759.8l8.7,-4l0.6,1.4l-8.6,4.1zM1198.7,755.0l5.4,-2.5l0.7,1.4l-5.4,2.6zM1205.4,751.9l9,-4.2l0.7,1.4l-9,4.3zM1182.9,765.6l8.7,-4.1l0.7,1.5l-8.7,4zM1193.5,760.6l9,-4.2l0.7,1.5l-9,4.2zM1204.3,755.6l8.8,-4.1l0.7,1.5l-8.8,4.1zM1214.1,751.1l4.2,-2l0.7,1.4l-4.2,2zM1181.9,769.3l5.4,-2.5l0.7,1.4l-5.5,2.5zM1188.8,766.1l5.5,-2.6l0.7,1.4l-5.6,2.6zM1196.2,762.6l4.2,-2l0.7,1.5l-4.2,1.9zM1202.1,759.9l5.6,-2.7l0.7,1.5l-5.6,2.6zM1209.3,756.5l7,-3.3l0.7,1.5l-7.1,3.3zM1181.6,772.6l9.9,-4.6l0.6,1.5l-9.9,4.6zM1192.8,767.4l4.7,-2.2l0.6,1.5l-4.7,2.1zM1198.6,764.7l6.2,-2.9l0.7,1.4l-6.2,2.9zM1206.2,761.1l4.1,-1.9l0.7,1.5l-4.1,1.9zM1212.1,758.4l6.4,-3l0.7,1.4l-6.4,3zM1220.2,754.6l2.3,-1.1l0.7,1.5l-2.4,1.1zM1182.0,775.6l5.1,-2.4l0.7,1.5l-5.1,2.4zM1188.1,772.8l5.3,-2.5l0.7,1.4l-5.3,2.5zM1202.8,765.9l7,-3.2l0.7,1.4l-7,3.3zM1211.3,761.9l5.3,-2.4l0.7,1.4l-5.3,2.5zM1218.0,758.8l5,-2.3l0.6,1.5l-5,2.3zM1183.8,778.0l4.6,-2.2l0.7,1.5l-4.6,2.1zM1189.9,775.1l4.7,-2.2l0.7,1.5l-4.8,2.2zM1195.6,772.5l8,-3.8l0.7,1.5l-8,3.7zM1204.9,768.1l5.4,-2.5l0.7,1.4l-5.4,2.6zM1212.1,764.8l5.1,-2.4l0.7,1.5l-5.1,2.3zM1218.5,761.8l4.7,-2.2l0.7,1.5l-4.7,2.2zM1185.0,780.6l5.4,-2.5l0.7,1.4l-5.5,2.6zM1192.0,777.4l6,-2.9l0.7,1.5l-6,2.8zM1199.2,774.0l6.5,-3.1l0.7,1.5l-6.5,3zM1207.7,770.1l7.8,-3.7l0.7,1.4l-7.9,3.7zM1217.4,765.5l7.5,-3.5l0.7,1.5l-7.5,3.5zM1186.8,783.0l3.8,-1.8l0.7,1.4l-3.8,1.8zM1192.4,780.4l8.7,-4.1l0.7,1.4l-8.8,4.1zM1202.2,775.8l8.4,-3.9l0.7,1.4l-8.4,4zM1211.8,771.3l9.6,-4.4l0.6,1.4l-9.5,4.5zM1223.2,766.0l2.5,-1.1l0.6,1.4l-2.4,1.2zM1188.8,785.3l7.6,-3.6l0.7,1.5l-7.7,3.5zM1197.9,781.0l7.5,-3.5l0.7,1.4l-7.6,3.6zM1207.3,776.6l4.3,-2l0.6,1.5l-4.2,2zM1212.9,774.0l4.8,-2.2l0.7,1.4l-4.9,2.3zM1219.2,771.1l3.7,-1.8l0.7,1.5l-3.7,1.7zM1224.1,768.8l2.1,-1l0.6,1.5l-2,0.9zM1191.3,787.3l5,-2.3l0.7,1.4l-5,2.3zM1197.5,784.4l8.4,-3.9l0.7,1.4l-8.4,3.9zM1207.8,779.6l6.1,-2.8l0.6,1.4l-6.1,2.8zM1214.9,776.3l4.8,-2.3l0.7,1.5l-4.9,2.2zM1220.9,773.5l6.3,-3l0.7,1.5l-6.3,2.9zM1194.1,789.2l4.2,-2l0.6,1.5l-4.1,1.9zM1219.3,777.4l8.8,-4.1l0.7,1.5l-8.8,4.1zM1196.0,791.5l8.1,-3.8l0.7,1.4l-8.1,3.8zM1206.1,786.8l7,-3.3l0.7,1.5l-7,3.2zM1214.9,782.7l6.3,-3l0.7,1.5l-6.3,2.9zM1223.1,778.9l5.8,-2.7l0.6,1.4l-5.7,2.7zM1215.7,785.5l9,-4.2l0.7,1.4l-9,4.2zM1227.8,753.0l16,-6.5l0.6,1.5l-16,6.4zM1245.5,745.8l7.3,-2.9l0.6,1.5l-7.3,2.9zM1229.1,755.5l15.3,-6.2l0.6,1.5l-15.3,6.2zM1245.8,748.7l8.2,-3.3l0.6,1.5l-8.2,3.3zM1229.4,758.4l15.2,-6.2l0.6,1.5l-15.2,6.2zM1246.1,751.6l9.7,-3.9l0.6,1.5l-9.7,3.9zM1230.2,761.1l13,-5.3l0.6,1.5l-13,5.2zM1244.8,755.2l9.4,-3.8l0.6,1.4l-9.4,3.8zM1231.2,763.7l19.3,-7.8l0.6,1.5l-19.3,7.8zM1231.8,766.4l3.9,-1.5l0.6,1.5l-3.9,1.5zM1218.8,731.5l1.5,4l-1.4,0.5l-1.5,-4zM1220.6,736.5l2.7,7.4l-1.4,0.5l-2.7,-7.4zM1223.7,744.9l0.6,1.7l-1.4,0.5l-0.6,-1.7zM1216.2,731.8l1.6,4.5l-1.4,0.5l-1.7,-4.5zM1218.3,737.7l2.6,7l-1.5,0.5l-2.5,-7zM1169.1,772.7l2.5,-1.5l0.7,1.2l-2.5,1.4zM1166.8,776.0l2.8,-1.7l0.7,1.2l-2.9,1.6zM1170.9,773.6l2.2,-1.3l0.7,1.2l-2.3,1.2zM1165.5,778.7l2.2,-1.3l0.6,1.1l-2.2,1.3zM1168.2,777.2l2.6,-1.6l0.7,1.1l-2.7,1.6zM1172.1,774.9l1.9,-1.1l0.6,1.1l-1.9,1.1zM1175.3,773.0l1.8,-1l0.6,1.1l-1.8,1.1zM1165.5,780.7l3.3,-1.9l0.6,1.1l-3.3,1.9zM1170.1,778.0l3.5,-2l0.6,1.1l-3.4,2zM1174.6,775.4l2.1,-1.2l0.6,1.1l-2,1.2zM1178.0,773.4l1.7,-1l0.7,1.2l-1.7,0.9zM1166.6,782.0l2.8,-1.6l0.6,1.1l-2.8,1.6zM1170.4,779.8l2.8,-1.7l0.7,1.2l-2.8,1.6zM1174.5,777.4l2.8,-1.6l0.7,1.1l-2.9,1.7zM1178.4,775.2l3.2,-1.9l0.7,1.1l-3.3,1.9zM1168.3,783.0l2.3,-1.3l0.6,1.1l-2.3,1.3zM1171.2,781.3l3.4,-2l0.7,1.1l-3.4,2zM1175.3,778.9l3.3,-1.9l0.6,1.2l-3.2,1.8zM1179.6,776.4l2.3,-1.3l0.7,1.1l-2.4,1.4zM1169.7,784.1l2.1,-1.2l0.7,1.1l-2.1,1.2zM1172.4,782.5l3.1,-1.7l0.6,1.1l-3,1.8zM1176.6,780.1l3.4,-2l0.7,1.2l-3.4,2zM1181.2,777.5l1.4,-0.9l0.7,1.2l-1.4,0.8zM1170.9,785.4l3.3,-1.9l0.7,1.1l-3.3,1.9zM1175.3,782.8l1.9,-1.1l0.7,1.2l-1.9,1zM1178.1,781.2l2.7,-1.5l0.6,1.1l-2.6,1.5zM1181.6,779.2l1.7,-1l0.6,1.2l-1.7,0.9zM1171.8,786.8l2.1,-1.2l0.7,1.1l-2.2,1.3zM1174.4,785.3l3.3,-1.9l0.6,1.2l-3.2,1.8zM1179.1,782.6l2.7,-1.6l0.7,1.2l-2.7,1.5zM1173.3,787.9l3.4,-1.9l0.7,1.1l-3.4,1.9zM1178.0,785.2l2.1,-1.2l0.6,1.1l-2.1,1.3zM1181.5,783.2l3.2,-1.9l0.7,1.1l-3.3,1.9zM1178.5,786.9l3,-1.7l0.7,1.1l-3,1.7zM1182.4,784.6l2.7,-1.5l0.6,1.1l-2.6,1.6zM1184.1,785.6l2.5,-1.4l0.7,1.1l-2.5,1.4zM1219.3,689.5l1.7,0.5l-0.3,1.4l-1.8,-0.4zM1223.1,689.0l1.9,0.5l-0.3,1.4l-2,-0.5zM1226.5,690.9l1.5,0.9l-0.8,1.4l-1.5,-0.9zM1228.8,683.2l2.4,0.1l-0.1,1.4l-2.3,-0zM1222.6,690.6l1.7,0.6l-0.5,1.6l-1.7,-0.6zM1217.3,689.7l1.7,-0.2l0.2,1.6l-1.7,0.1zM1230.6,685.2l2.2,0l-0,1.3l-2.2,0zM1220.4,684.0l1.9,1.3l-0.7,1.1l-2,-1.3zM1229.9,688.7l2.1,1l-0.6,1.2l-2,-1zM1220.0,684.4l1.9,1.4l-1.1,1.5l-1.9,-1.3zM1228.6,691.4l2.4,0.1l-0.1,1.8l-2.3,-0.1zM1227.9,688.2l2.1,0.9l-0.7,1.8l-2.2,-0.9zM1224.1,684.1l2,0.8l-0.5,1.3l-2,-0.8zM1223.3,686.0l2.4,-0.2l0.1,1.9l-2.4,0.1zM1218.4,687.6l1.5,1.1l-0.9,1.3l-1.5,-1zM1223.0,678.6l2,0.3l-0.2,1.5l-2,-0.2zM1182.9,425.8l1.4,0.7l-0.6,1.2l-1.4,-0.6zM1187.1,420.9l2.1,1.1l-0.7,1.3l-2.1,-1.1zM1184.7,426.9l1.7,-0.3l0.2,1.5l-1.7,0.3zM1186.9,420.7l1.6,0.1l-0.2,1.6l-1.5,-0.2zM1191.6,430.2l1.9,-0.1l0.1,1.4l-1.9,0.1zM1182.8,427.4l1.8,-0.1l0.1,1.6l-1.7,0.1zM1180.5,420.5l2.1,0.5l-0.4,1.3l-2,-0.4zM1189.1,426.1l2.2,0.3l-0.2,1.3l-2.2,-0.3zM1189.3,420.4l2,0.9l-0.5,1.4l-2.1,-0.9zM1194.9,420.3l1.7,-0.7l0.5,1.3l-1.7,0.7zM1190.0,420.4l2,-0.7l0.5,1.2l-2,0.8zM1205.4,439.4l2,0.3l-0.2,1.5l-2,-0.3zM1202.8,439.3l2.2,0.5l-0.4,1.3l-2.2,-0.5zM1200.7,440.3l1.9,0.1l-0.1,1.6l-1.9,-0zM1251.8,444.7l1.8,0.1l-0,1.8l-1.9,-0.1zM1258.8,447.5l1.8,-0.1l0.2,1.6l-1.8,0.2zM1259.9,443.8l1.5,-0.6l0.5,1.2l-1.5,0.6zM1256.8,443.7l1.5,0.5l-0.5,1.4l-1.5,-0.4zM1258.1,450.9l1.4,-0.5l0.6,1.6l-1.4,0.5zM1254.4,450.8l1.5,0.2l-0.3,1.8l-1.5,-0.3zM1253.5,443.2l2,-1l0.6,1.2l-2.1,0.9zM1251.5,448.9l2.2,0.9l-0.6,1.5l-2.2,-0.9zM1333.1,478.2l1.5,0.8l-0.7,1.5l-1.5,-0.8zM1327.5,477.1l2,1l-0.6,1.3l-2.1,-1zM1327.2,475.3l2.1,-0l0,1.5l-2,0zM1334.4,476.5l2.1,0.9l-0.7,1.4l-2.1,-1zM1329.6,475.3l1.6,-0.1l0.1,1.4l-1.6,0.1zM1333.3,474.3l2.3,0.2l-0.1,1.5l-2.3,-0.2zM1462.1,454.9l2.4,0.2l-0.1,1.4l-2.4,-0.2zM1463.2,451.3l2.2,0.3l-0.2,1.2l-2.2,-0.3zM1464.6,449.2l1.7,0.2l-0.2,1.5l-1.7,-0.2zM1468.8,449.0l1.9,0.5l-0.3,1.6l-2,-0.4zM1534.2,510.2l2.1,0l0.1,1.5l-2.2,0.1zM1538.0,509.1l1.9,-0.4l0.2,1.4l-1.8,0.3zM1543.6,509.9l1.9,0.8l-0.7,1.6l-1.9,-0.8zM1540.3,509.2l2.4,-0.3l0.2,1.6l-2.4,0.4zM1644.9,556.1l2.2,-0.2l0.1,1.2l-2.1,0.2zM1652.1,547.9l1.7,0.1l-0.1,1.6l-1.6,-0.1zM1640.3,556.9l1.7,0.3l-0.2,1.4l-1.7,-0.3zM1643.1,552.1l2.1,-0.9l0.6,1.4l-2.1,0.9zM1648.8,552.1l1.7,0.8l-0.7,1.4l-1.7,-0.9zM1655.2,547.2l2,0.3l-0.2,1.4l-2,-0.3zM1649.5,540.0l2.1,0.3l-0.3,1.4l-2,-0.3zM1649.3,539.1l1.6,0.8l-0.6,1.1l-1.6,-0.8zM1644.9,541.0l2.4,-0.4l0.2,1.6l-2.3,0.3zM1645.0,538.4l1.9,-0.8l0.7,1.6l-1.8,0.8zM1852.8,657.8l1.9,0.5l-0.3,1.2l-1.9,-0.5zM1845.0,657.7l1.6,-0.5l0.3,1.2l-1.6,0.5zM1854.8,662.2l1.7,-0l-0,1.7l-1.7,0zM1854.1,656.2l2.3,-0.5l0.3,1.3l-2.4,0.4zM1842.5,657.0l1.8,0.6l-0.3,1.3l-1.9,-0.5zM1899.8,695.7l1.9,-1l0.6,1.2l-1.9,0.9zM1900.8,694.1l2.1,0.7l-0.5,1.4l-2.1,-0.7zM1899.6,695.9l1.4,0.5l-0.4,1.3l-1.4,-0.5zM1919.4,713.2l1.7,-0.6l0.4,1.5l-1.6,0.5zM1921.2,710.7l1.4,0.7l-0.6,1.2l-1.4,-0.7zM1918.8,712.6l2,-0.7l0.5,1.5l-2.1,0.7zM1901.3,730.5l2.2,-0.1l0,1.4l-2.2,0.1zM1894.0,736.7l1.7,-0.1l0.1,1.7l-1.7,0.1zM1897.3,730.3l1.5,-0.7l0.6,1.1l-1.6,0.7zM1897.4,727.6l1.8,0.5l-0.3,1.2l-1.8,-0.5zM1895.5,730.4l2.2,0l0,1.5l-2.2,-0zM1900.8,740.2l1.8,0.7l-0.5,1.1l-1.7,-0.6zM1905.3,729.4l1.8,-0l0,1.4l-1.8,0.1zM1908.1,729.9l2.2,0.1l-0.1,1.2l-2.2,-0zM1912.3,731.5l2.1,-0.2l0.2,1.5l-2.1,0.3zM1913.3,729.6l1.9,-0.5l0.4,1.6l-1.8,0.4zM1931.9,757.2l2,0.9l-0.8,1.5l-1.9,-0.9zM1934.3,758.1l1.7,-0.2l0.2,1.3l-1.8,0.2zM1023.3,541.8l1.7,-0l0.1,1.3l-1.8,0zM1025.0,538.6l1.5,-0.4l0.4,1.2l-1.6,0.4zM1017.5,538.3l2.4,0.1l-0.1,1.4l-2.3,-0.1zM1042.6,528.2l2,0.2l-0.1,1.8l-2,-0.2zM1045.3,528.4l1.4,0.6l-0.5,1.2l-1.4,-0.6zM1048.8,528.5l1.7,0.7l-0.6,1.6l-1.8,-0.8zM1076.6,566.8l2.4,0.5l-0.3,1.4l-2.4,-0.5zM1074.7,564.4l2.1,-0.8l0.5,1.2l-2.1,0.8zM1087.5,569.1l2.3,0.4l-0.2,1.3l-2.3,-0.4zM1078.5,564.0l1.8,0.2l-0.2,1.8l-1.8,-0.2zM1060.7,619.4l2,-0.2l0.1,1.2l-1.9,0.3zM1057.1,621.6l2,-0.5l0.4,1.5l-2,0.5zM1054.9,619.7l1.6,-0.7l0.5,1.2l-1.6,0.7zM1062.9,617.7l1.9,0.4l-0.4,1.5l-1.8,-0.4zM1017.0,667.6l1.5,0.6l-0.5,1.2l-1.5,-0.6zM1009.5,668.7l1.5,-0.6l0.6,1.5l-1.5,0.6zM1011.3,667.2l1.5,0.4l-0.4,1.5l-1.5,-0.3zM1039.5,673.6l1.7,-0.2l0.1,1.5l-1.7,0.1zM1029.8,670.7l2,1l-0.5,1.1l-2.1,-1zM1029.5,669.8l2.1,0.5l-0.4,1.5l-2,-0.5zM1026.6,673.5l2.2,-0.5l0.3,1.6l-2.1,0.5zM1018.1,686.8l2.3,0.7l-0.5,1.7l-2.3,-0.7zM1016.3,686.2l1.9,0.9l-0.5,1.1l-1.9,-1zM1102.1,427.1l1.8,0.5l-0.4,1.7l-1.9,-0.5zM1096.5,428.8l2,-0.1l0.1,1.4l-2,0.1zM1466.0,791.7l2.2,0.8l-0.5,1.3l-2.2,-0.9zM1468.3,791.6l2.2,0.5l-0.4,1.5l-2.1,-0.5zM1469.6,790.9l2.1,-1l0.5,1.2l-2.1,0.9zM503.8,752.2l1.7,0.4l-0.3,1.5l-1.8,-0.4zM499.5,748.5l1.7,0.7l-0.6,1.5l-1.8,-0.7zM506.1,754.6l1.9,-0.6l0.4,1.4l-1.9,0.6zM499.2,752.2l1.8,-0.2l0.1,1.2l-1.7,0.3zM1104.2,888.3l1.4,0.7l-0.8,1.6l-1.4,-0.7zM1104.4,886.6l1.6,-0.6l0.5,1.5l-1.5,0.6zM1101.3,887.0l2.1,-1.1l0.6,1.3l-2.1,1zM1457.5,448.2l1.7,-0.8l0.7,1.6l-1.7,0.7zM1458.5,446.7l2.2,0.2l-0.1,1.3l-2.2,-0.3zM1454.3,447.4l2.2,0.6l-0.3,1.2l-2.2,-0.5zM1253.4,442.3l2.1,-0.1l0.1,1.2l-2.2,0.1zM1245.6,439.5l2.2,-0.3l0.2,1.2l-2.2,0.4zM1250.6,438.5l1.6,-0.6l0.6,1.4l-1.6,0.7zM1120.0,520.5l2.3,-0.2l0.1,1.3l-2.3,0.2zM1120.0,516.1l1.7,0l-0,1.5l-1.7,-0.1zM1122.0,519.1l2.1,-0.3l0.2,1.5l-2.1,0.3zM1112.2,519.6l2.2,0.7l-0.4,1.6l-2.3,-0.7zM1165.5,514.2l1.6,-0.1l0.1,1.8l-1.6,0.1zM1159.3,514.4l1.6,0.7l-0.5,1.1l-1.6,-0.6zM1160.7,511.6l1.7,-0.5l0.4,1.3l-1.7,0.5zM1160.6,513.3l1.9,0.6l-0.5,1.6l-1.9,-0.6zM1160.3,514.9l1.6,0.2l-0.2,1.8l-1.6,-0.2zM1087.8,586.7l2.3,0.6l-0.4,1.2l-2.2,-0.7zM1098.4,588.1l1.8,-0.2l0.2,1.7l-1.8,0.2zM1088.4,586.5l1.5,0.7l-0.7,1.4l-1.4,-0.7zM1093.5,580.6l1.9,0.1l-0.1,1.2l-1.9,-0.1zM1340.0,488.5l2,-0.2l0.1,1.3l-1.9,0.2zM1338.3,487.4l1.6,0.9l-0.6,1.2l-1.7,-0.9zM1346.0,492.7l2.2,0.1l-0.1,1.5l-2.2,-0.1zM1336.3,492.7l1.7,0l-0,1.8l-1.8,-0z"/>
<path fill="#86e2ad" stroke="#1c3a2a" stroke-width="0.5" d="M1254.0,623.9l17.4,-4.3l0.6,2.5l-17.4,4.3zM1227.9,727.7l2.5,-4.4l1.7,1l-2.5,4.4zM1230.9,730.7l2.5,-4.4l1.7,1l-2.5,4.4zM1224.1,725.2l2,-3.4l1.8,1l-2,3.4zM1133.5,623.0l5.2,-3l1.8,3l-5.2,3zM1193.3,612.6l3.9,-3.1l1.5,1.9l-3.9,3.1zM1212.4,574.1l5.6,-4.3l1.6,2.1l-5.6,4.3zM1240.0,567.0l4.7,-3.7l1.3,1.7l-4.7,3.7zM1251.4,556.8l4,-3.1l1.2,1.5l-4,3.1zM1218.3,546.0l5.5,-4.3l1.9,2.3l-5.5,4.3zM1229.3,538.6l3.9,-3.1l1.5,1.9l-3.9,3.1zM1153.7,572.2l3.1,-2.4l1.5,2l-3.1,2.4zM1184.2,597.4l3.1,4l-1.5,1.2l-3.1,-4zM1874.5,654.9l3.4,-4.9l1.6,1.1l-3.4,4.9zM1853.4,663.1l6.8,-1.8l0.4,1.6l-6.8,1.8z"/>
<g fill="#7c9bd2" stroke="#0b0f1a" stroke-width="1.3"><circle cx="1201.0" cy="562.0" r="2.9"/><circle cx="1227.5" cy="662.5" r="2.9"/><circle cx="1461.6" cy="732.8" r="2.9"/><circle cx="1470.0" cy="861.0" r="2.9"/><circle cx="1313.0" cy="1033.0" r="2.9"/><circle cx="1915.0" cy="762.0" r="2.9"/></g>
</svg></div>
<div id="status"><span class="t" style="left:929px;color:#0000ee;text-decoration:underline">There is a new plugin available</span><div class="sbtn" style="left:1117px;top:6px;height:20px"><svg viewBox="0 0 19 20" style="position:absolute;left:0;top:0;width:19px;height:20px"><path d="M4,5c2,-3 7,-3 8,1c1,4 -5,5 -4,9c1,3 6,2 6,-1" fill="none" stroke="#222" stroke-width="1.6"/><circle cx="11" cy="12" r="3" fill="none" stroke="#222" stroke-width="1.2"/><path d="M3,3l10,13M13,3l2,-1" stroke="#444" stroke-width=".8"/></svg></div><span class="t" style="left:1146px">Coordinate:</span><div style="position:absolute;left:1223px;top:6px;width:300px;height:20px;background:#fff;border:1px solid #a9a9a9;border-top-color:#8c8c8c;text-align:center;font-size:13px;line-height:19px">20.4192,-34.0180</div><span class="t" style="left:1532px">Scale</span><div style="position:absolute;left:1577px;top:9px;width:95px;height:17px;background:#fff;border:1px solid #a9a9a9;border-radius:0 4px 4px 0;font-size:13px;line-height:16px;padding-left:2px">1:22771<div style="position:absolute;right:0;top:0;width:14px;height:15px;border-left:1px solid #c4c4c4;background:linear-gradient(#fff,#eee)"><div style="position:absolute;left:4px;top:6px;border-left:3px solid transparent;border-right:3px solid transparent;border-top:4px solid #555"></div></div></div><div class="sbtn" style="left:1677px;top:6px;height:20px"><svg viewBox="0 0 19 20" style="position:absolute;left:0;top:0;width:19px;height:20px"><path d="M3,17c6,-2 10,-7 13,-14c-6,3 -10,8 -11,13" fill="#bbb" stroke="#666" stroke-width=".8"/><circle cx="6.5" cy="6.5" r="3.4" fill="none" stroke="#d33" stroke-width="1.3"/><path d="M4.2,8.8l4.6,-4.6" stroke="#d33" stroke-width="1.3"/></svg></div><div style="position:absolute;left:1704px;top:8px;width:14px;height:14px;border:1px solid #6d6d6d;border-radius:3px;background:linear-gradient(#fdfdfd,#dcdcdc)"><svg viewBox="0 0 20 20" style="position:absolute;left:-1px;top:-6px;width:20px;height:20px"><path d="M5,11.5l3.5,4.5l7.5,-13" fill="none" stroke="#1a1a1a" stroke-width="2.4" stroke-linecap="round" stroke-linejoin="round"/></svg></div><span class="t" style="left:1722px">Render</span><span class="t" style="left:1770px;color:#333">EPSG:4326</span><div class="sbtn" style="left:1848px;top:6px;height:20px;background:#d8d8d8"><svg viewBox="0 0 19 20" style="position:absolute;left:0;top:0;width:19px;height:20px"><circle cx="9.5" cy="10" r="6.5" fill="#c4c4c4" stroke="#777" stroke-width="1"/><ellipse cx="9.5" cy="10" rx="3" ry="6.5" fill="none" stroke="#777" stroke-width=".9"/><path d="M3,10h13M9.5,3.5v13" stroke="#777" stroke-width=".9"/></svg></div><div class="sbtn" style="left:1874px;top:6px;height:20px"><svg viewBox="0 0 19 20" style="position:absolute;left:0;top:0;width:19px;height:20px"><path d="M9.5,3.5l6.5,12.5h-13z" fill="#f2f2a0" stroke="#555" stroke-width="1" stroke-linejoin="round"/><path d="M9.5,8v4.5" stroke="#222" stroke-width="1.6"/><circle cx="9.5" cy="14.2" r=".9" fill="#222"/></svg></div><svg style="position:absolute;left:1905px;top:18px;width:13px;height:13px" viewBox="0 0 13 13"><path d="M12,1l-11,11M12,5l-7,7M12,9l-3,3" stroke="#9a9a9a" stroke-width="1"/></svg></div>
</div>
</body>
</html>
